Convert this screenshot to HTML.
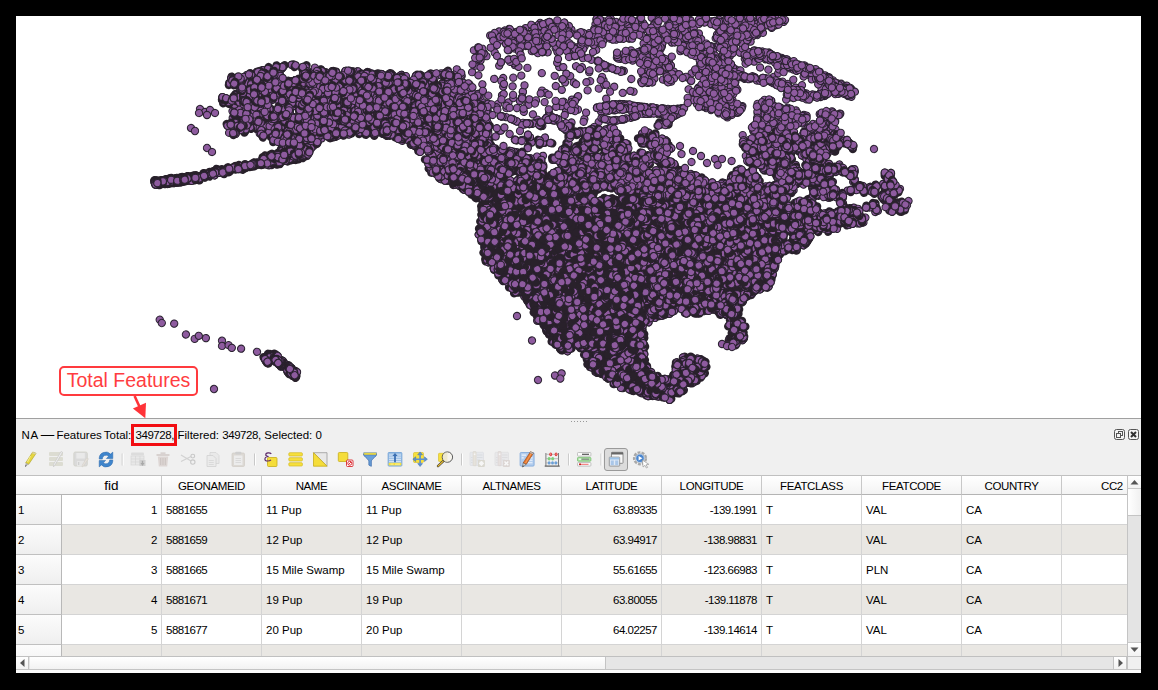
<!DOCTYPE html>
<html><head><meta charset="utf-8">
<style>
*{box-sizing:border-box;margin:0;padding:0}
html,body{width:1158px;height:690px;overflow:hidden;background:#000}
body{font-family:"Liberation Sans",sans-serif;font-size:12px;color:#000;position:relative}
#app{position:absolute;left:16px;top:16px;width:1125px;height:657px;background:#fff;overflow:hidden}
#map{position:absolute;left:0;top:0;width:1125px;height:402px;background:#fff;overflow:hidden}
#map svg{position:absolute;left:-16px;top:-16px}
#sep{position:absolute;left:0;top:402px;width:1125px;height:1px;background:#a0a0a0}
#panel{position:absolute;left:0;top:403px;width:1125px;height:254px;background:#f0f0f0}
.abs{position:absolute}
#title span{position:absolute;top:9px;white-space:nowrap;font-size:11.5px;line-height:14px}
.hdr{position:absolute;top:57px;height:20px;background:linear-gradient(#ffffff,#f3f3f3);border-right:1px solid #c8c8c8;border-bottom:1px solid #b4b4b4;border-top:1px solid #c0c0c0;text-align:center;line-height:20px;font-size:11.5px;letter-spacing:-0.37px;white-space:nowrap;overflow:hidden}
.row{position:absolute;left:0;width:1111px;height:30px;border-bottom:1px solid #d4d4d4}
.row.alt{background:#e9e7e3}
.row.wh{background:#fff}
.c{position:absolute;top:0;height:30px;line-height:31px;border-right:1px solid #d4d4d4;white-space:nowrap;overflow:hidden;font-size:11.5px;padding:0 4px}
.n{letter-spacing:-0.5px}
#title i{font-style:normal;letter-spacing:-0.45px}
.r{text-align:right}
.rh{position:absolute;left:0;top:0;width:46px;height:30px;background:linear-gradient(#fcfcfc,#efefef);border-right:1px solid #b8b8b8;border-bottom:1px solid #c0c0c0;line-height:31px;padding-left:2px;font-size:11.5px;overflow:hidden}
</style></head><body>
<div id="app">
<div id="map">
<svg width="1158" height="420" viewBox="0 0 1158 420">
<defs><marker id="m0" markerUnits="userSpaceOnUse" markerWidth="12" markerHeight="12" refX="0" refY="0" viewBox="-6 -6 12 12" orient="auto" overflow="visible"><circle r="3.6" fill="#8e5b9f" stroke="#2a2230" stroke-width="1.1"/></marker><marker id="m1" markerUnits="userSpaceOnUse" markerWidth="14" markerHeight="12" refX="0" refY="0" viewBox="-8 -6 14 12" orient="auto" overflow="visible"><path d="M-2 0H0" stroke="#29212b" stroke-width="8.3" stroke-linecap="round" fill="none"/><circle r="3.6" fill="#8e5b9f" stroke="#2a2230" stroke-width="1.1"/></marker><marker id="m2" markerUnits="userSpaceOnUse" markerWidth="16" markerHeight="12" refX="0" refY="0" viewBox="-10 -6 16 12" orient="auto" overflow="visible"><path d="M-4 0H0" stroke="#29212b" stroke-width="8.3" stroke-linecap="round" fill="none"/><circle r="3.6" fill="#8e5b9f" stroke="#2a2230" stroke-width="1.1"/></marker><marker id="m3" markerUnits="userSpaceOnUse" markerWidth="18" markerHeight="12" refX="0" refY="0" viewBox="-12 -6 18 12" orient="auto" overflow="visible"><path d="M-6 0H0" stroke="#29212b" stroke-width="8.3" stroke-linecap="round" fill="none"/><circle r="3.6" fill="#8e5b9f" stroke="#2a2230" stroke-width="1.1"/></marker></defs>
<polyline fill="none" stroke="none" marker-start="url(#m0)" marker-mid="url(#m0)" marker-end="url(#m0)" points="403.8,132.2 266.7,158.7 752,57.8 333.3,87.7 687.8,24.9 699.3,54.1 408.6,98.4 549.5,21.8 504.9,40.9 708.6,185.3 649,63.1 842.5,215.1 450.5,159.6 719.6,34.6 762.9,32.8 727.9,98.4 710.9,52.6 756.9,80.5 482.4,111.3 462.6,96.4 623,107.6 469.2,91.3 583.1,36 657.9,19.5 742.9,77.5 604.6,163.6 588.9,130.7 702.2,84.5 729.3,92.5 817,153.4 232.7,118 754.8,77.4 436.7,125.7 677.3,169.3 709.1,53.6 458.6,91.4 528.2,123.7 674.8,115.6 759.3,30.5 572.7,181.6 392.8,75.1 466.2,140.9 305.2,83.4 487.1,129.8 763.2,113.4 817.7,129.5 726.4,74 635.2,27.1 676.3,32.6 766.5,122.3 740,52.3 713,102.6 831.9,111.3 260.2,119.1 792.9,182.7 506,153.8 840.1,167.6 235.4,94.2 628.9,38.5 420.3,150.6 409.5,121.6 356.6,114.6 500.6,39.5 646,43.7 734.5,85.6 511,118.5 793.6,190.3 222.9,171 722.2,108.7 853.2,181.8 748.7,77.9 824.9,141.8 812.9,124 368.9,114.7 689.2,52.7 813.3,143.3 837.2,83.2 582.4,56.2 807.6,127.4 232.4,131.9 272.5,133.9 792.7,187.5 517,37.3 615.8,120.8 565,46.5 729.5,36.5 651.7,17.7 456.8,69.3 740.4,21 581.9,67.1 445.2,171.5 593.7,42.3 818.3,164.7 541.6,48.5 669.1,118.4 252.6,164 655.7,171.5 449,146.2 620.3,104.3 410.8,131.3 512.6,86.3 671.1,36.5 269.4,118.3 662.1,44 740.3,18 829.5,137.2 326.6,126.5 721.6,74.3 619.9,38.7 802.5,66.4 324.3,91.9 254,164.4 559.2,67 832.9,181.7 516.8,165 386,81.7 299.4,112.2 632.6,156.6 253.5,108.9 627.2,107.7 567.5,50 821.6,93.2 669.8,33.7 662.7,114.3 758.3,18.4 668.5,170.2 637.9,109.5 705,51.1 771.8,152.6 508.5,102.4 396.8,89.9 782.5,81.6 552.6,117.4 671.5,161.9 786.7,66 635.5,53.6 647,166.2 771.8,58.7 549.1,112.7 566,129.8 671.8,27.9 769.4,104.1 650.5,113.3 711.6,104.1 508.6,31.1 517.7,160.7 448.8,148.1 652.8,112.9 730.3,94.9 323.7,134 280.1,75.7 595.5,24.1 642.7,74.6 463.6,149.6 542.3,125.9 625.7,31.1 682.2,173.8 487.3,103.4 644,75.5 713.3,94 591.1,151 446.2,165.6 539.5,31 567,131.2 701.4,57 650.9,107.5 650.4,111.7 581.4,37.2 778.1,56.9 236.5,85.1 715.7,38.3 838.4,84.9 699.9,64.8 716.7,26 740.7,77.1 711.2,49.9 473.9,50.3 743.6,28.4 506,39.7 691,81 749.5,20.7 419.5,128.8 628.9,104.6 558.4,158 584.6,46.3 729.1,43.1 618.8,33.6 645.1,52.3 785.6,162.7 681.6,111.8 468.2,111.3 793.9,122.7 228.1,169.3 808.2,67.6 655.6,158.6 540.2,23 573.6,50 676.7,109.5 459.6,157.8 694.6,70.8 762.6,21.6 350.7,83.9 815.5,159.4 843.4,208.6 734.7,24.1 643.2,172.2 648.4,49.3 806.2,93.5 628.7,17.6 309.2,96.9 367.9,87.8 677.8,110.5 845.6,94.1 788.6,146.2 831.4,121.9 369.2,85.5"/>
<polyline fill="none" stroke="none" marker-start="url(#m1)" marker-mid="url(#m1)" marker-end="url(#m1)" points="720.8,295.2 625.8,193.4 282.8,92.7 570.3,172 402.3,112.2 423.5,104.7 302.1,150.3 705.2,197.2 583.4,185.8 416.1,118.8 413.2,122.8 579,168.8 628.5,165.8 277.5,70.6 794.4,236.5 410.7,136.8 821.2,172.4 743.5,327.2 328.2,116.3 240.2,109.6 264.8,109.7 424.2,104.5 601.1,186.3 229.3,83.1 454.9,129.4 554,158 886.5,189.4 694.4,268.2 775.9,150.5 450.9,176.3 478.4,158.9 371.8,94.5 176.4,180.1 178.9,179.8 789.4,164.9 238,122.5 640.3,216.6 271.5,163.1 475.6,128.5 770.9,201.5 834.7,149.6 279.5,85 884.1,200.1 280.3,152.4 329.1,100 599.1,371.5 766.2,206.3 299.5,155.7 684.8,224.8 499.8,160 287.4,149.7 358.9,106 263.5,77.3 293.1,155.1 638.2,219.3 851.5,220.3 382.3,109.8 213.2,173.2 645.8,280.9 253.7,74.9 762.3,287.6 764.7,244.2 590.6,130.1 828.5,197.7 738.2,239 786.5,208.6 261.2,162.9 342.9,108 693.8,382.1 591.4,162.3 290.3,151.8 374.6,118.6 641,265.7 374.8,111.2 419.9,76.3 741.9,264.4 647.9,239.3 783.6,180.8 787.3,229.1 765.6,209.7 169.3,181.6 809.6,208.8 465.1,123.1 239,167 892,193.2 526.4,163.7 595.8,133.4 727.8,201.2 419.6,143.9 441.7,105.9 343,82.5 279.5,85 321.8,77.4 256.7,99.4 276.1,358.8 798.4,149.6 611.6,163.2 473.6,146.6 824.9,144.9 529.7,304.6 734.9,299 579.3,166.1 376.6,110.2 239.4,105.4 326.9,125.4 453.8,173.5 436.2,131.2 596.2,184.9 514.9,139.7 359.6,95.6 420.1,132.3 777.8,178.1 773.7,213.4 485.6,158.6 664.3,162.2 317.5,126.9 483.4,142.1 756.3,149 387,109.8 310.1,76.6 693.9,192.5 665.2,140.1 588.9,134.7 735.5,334.4 834,215 619.9,191.3 451.4,129.3 665.8,163.8 292.3,143.7 268.1,360.1 457.4,172.5 720,273.1 658.2,201.7 660.9,306.2 572.5,166.4 436,151 409.7,90.1 516.5,292.2 591.1,166.5 263.1,121.9 275.8,123.2 644.6,233.9 657.4,219.2 652.3,197.8 779.7,188.2 674.3,192.7 807.4,157.8 789.2,191.8 343.5,83.3 508.8,160.6 415.7,129.8 542.5,170.9 662.6,186.5 554.6,181.3 694.6,214.4 431.9,134.3 306.5,83.9 562.7,350.1 315.9,106 574.8,165.4 573.4,176.3 635.9,252.3 291.2,157.1 650.6,245.7 814,175.3 633.1,161.4 173.8,181 649.2,158.8 224.5,172.8 835.1,168.5 806.6,201 796.8,227.3 812,217.3 888.2,193.9 241.1,97.1 762.7,189 235.6,113.8 796.6,242.1 592,148 423.3,91.7 748.7,156.9 449.9,167 166.7,182 696.5,200.6 256.7,79.5 680.1,300.2 764.5,272.7 392.1,121.8 461.4,90.4 591.9,367.6 697.7,294.7 685.1,300.3 755.3,216.8 816.5,218.1 634.8,173.3 699.3,360.5 259.4,94 768.1,165.5 477.9,139.5 661,159.1 314.9,93.1 310.3,146.9 638,240.2 177.2,180.3"/>
<polyline fill="none" stroke="none" marker-start="url(#m2)" marker-mid="url(#m2)" marker-end="url(#m2)" points="679,373.7 648.8,279.7 681.5,372.4 662.2,263.8 525.9,291 708.4,239.6 480.4,183.5 706.9,229.2 733,255.4 716.6,296.9 557.3,317.3 644.2,288.1 638,236.6 610.3,294.3 645.4,296.8 689.9,297.8 584,198.1 661.5,310.2 726.8,281.4 732.7,331.8 538.8,313.9 742.3,235.7 681.9,258.2 634.5,355.7 734.6,295.2 643.9,217.5 643.6,371.2 730.3,257.1 535.5,303.7 663,271.8 590.7,354.3 655.7,287 695.1,228.1 540.6,261.8 731.3,239.7 674.8,392.9 659,247.8 645.9,269 767.4,217.6 681.5,289.5 702.2,270.2 735.4,286.6 665.4,258.2 541.5,188.3 648.4,298.1 726.4,205.7 604.9,203.3 478.1,186.1 762.8,223.8 561,250.7 766.8,217.8 617,225.7 684,283.3 737,293.6 656.8,312.1 608.5,373.6 663.2,260.7 626.1,255.2 523.5,211.4 637,389.7 625.1,297.2 512.1,206 654.3,247.3 640.3,273.6 697.6,257 609.7,330.4 543,273.7 474.6,183.6 709,233.7 554,330.6 490.9,254.4 587.7,348.7 551.1,329.9 655.7,254.9 497.5,264.1 644.2,202.3 731.1,237 675.8,258.6 485.7,184.7 652.3,214.1 738.9,256.7 723,295.7 643.6,242.8 652.1,281.8 706.2,272.6 736.8,302.8 706.2,285.3"/>
<polyline fill="none" stroke="none" marker-start="url(#m3)" marker-mid="url(#m3)" marker-end="url(#m3)" points="595.5,204.5 661.6,386.2 600.1,256.3 543.5,286 576.3,256.3 559.3,211.3 577.8,245.5 566.2,311.3 609.6,355.1 583,280.5 530,287.2 565.4,251.8 612.6,229.6 603,292 537.6,272.7 501.7,235.2 597.6,250.1 609.6,306.9 610.1,331.9 611.2,253.2 652.2,384.5 541,289.2 619.6,325.6 554.8,268.5 537.3,261.8 598.2,238.8 552.5,258.9 515,232.8 632.2,365.6 531.9,271.1 570.6,228.4 564.3,213.3 554.3,305 591.5,247.6 611.3,338.5 595,289.3 554,231.1 547.1,290.2 577,274.4 529.9,212.7 590.6,319.7 626,266.8 504.8,257.1 621.2,347.1 614.5,334.6 568.8,236.7 503.9,198.5 616.2,294.4 588.8,259.5 499.2,242.9 630.7,317.7 552.1,259 551.5,243.7 497.4,207.3 619.1,318.4 522.1,227.1 626.1,288.2 536.3,219.3 495.2,188.7 511.1,228.3 608.9,239.7 498.7,208 608.8,300 504.1,203.8 570.1,252.1 493.8,253.2 498,215.7 668.6,384.6 565.9,337.1 518,276.3 555.6,215.6 522.6,266 561,205.5 515.3,263.3 580.8,228.8 576.3,330.1 520.5,201.5 496.8,232.7 512.2,200.6 612.9,269.4 564.8,273 611.8,254 564.7,202.2 571.8,310.6 564.1,295.9 570.1,306.3 653.1,383.5 497.3,243.3 649.6,387.7 589.1,275 547.9,319.4 595,360.7 549.2,260.3"/>
<polyline fill="none" stroke="none" marker-start="url(#m0)" marker-mid="url(#m0)" marker-end="url(#m0)" points="513.3,77.7 310.9,144.4 727.3,117.4 832.9,112.4 625.7,23.4 463.9,93.6 371.4,73.4 706.5,108.2 332.2,96 753.6,29 598.8,88.6 854.4,171.6 596.9,108 665.9,112.3 447.7,143 281.3,139.9 348,104.2 613.3,151.3 587.2,146 789.9,120.2 817.7,180.7 811.5,156.6 279.2,160.8 783.6,21.9 450.4,113.3 350.7,108.7 595.5,128.5 772,105.7 838.1,166.8 387.8,135.2 819.8,71.9 537.2,119.6 779.8,108.2 624.4,28.8 349.8,101.1 655,63.5 789.9,68.4 726.2,40.9 318.9,110.5 610.7,109.6 339.7,104.4 720.1,33.6 606.8,110.4 663.1,108.9 645.9,131.9 787.5,109 847.3,89 256.6,129 510.7,35.1 710.3,73.3 257.3,114.1 875.3,212 463.1,82.7 820.7,93.2 519.9,101 612.3,104.6 601.5,131.6 610.6,67.7 753.4,131.2 614.6,144.7 793.4,69.5 787.9,83.9 742.3,53.1 624.1,165.9 248.3,95.1 543,155.8 366.8,79.6 780.2,182.2 821.9,130 641.2,50.6 666.4,80.5 245.5,165.2 727.1,96.7 459.1,82.3 835.4,89.7 890.8,178.8 684.2,173.2 733.9,31.8 794.8,67.5 794.9,118.3 600.1,31.1 611,19.2 840.5,85 751.9,178.9 264.1,102.3 319,75.3 694.2,50.2 279.5,92.6 432.3,114.3 694.5,71.6 773.7,76.9 668.5,164.1 624.5,161.8 316.2,92 472.1,72.2 271.7,70.5 614.5,110.4 773.6,25.5 815.6,70.5 795.3,118.9 449.7,147.3 622,175.7 738.4,39.8 240.2,83.6 772.8,204.3 703.6,106.9 742.4,106.1 247,166.6 690.2,19.9 780.5,58.8 698.9,33.5 251.2,103 595.1,176.5 644.2,156.9 701,19.3 602.2,64.1 772.8,23.8 286.4,106.2 606.8,66.1 394.3,102.8 393.6,111.4 449.4,85.2 795.9,110.4 705.1,93.1 566,111.6 698.9,87.6 828.3,219.9 688.5,29.1 545.6,35.2 682.6,109.8 888.2,201.9 345.3,107.7 468.9,88.3 834.2,83 681.3,112.3 444.1,138.9 704.7,94.6 752,154.9 435.4,109.2 777.1,123.5 232.5,111.1 244.3,127.2 546.9,23 710.6,90.7 380.5,110.2 731.4,42.2 577.9,109.6 835,91.7 702.6,52.1 653.5,63.6 735.3,89.6 276.7,160.1 788,149.3 650,65 778.8,127.2 629.7,107.4 827.2,169.6 755.8,52.1 671.2,81.6 475.4,65.7 710.4,85.5 641.6,29.7 678.8,188 548.1,29.2 623.5,119.4 759,122.1 850.2,89.3 743.2,142.1 724.6,20.7 710.5,22.5 622.8,109.4 813.1,131.6 568.9,131.8 457.3,84.3 362,97.6 348.7,128.3 696.4,70.2 607.8,31.5 754.4,50.3 564.6,37.3 704.2,102.3 252.2,75.9 354,94 211.4,173.1 506.5,164.1 680.5,108.8 488.8,139.3 693.5,97.9 587.7,42 700.6,50.9 722.9,71.9 819.7,114.1 324.7,90.3 690.2,32.4 517,121.5 399.7,94.8 279.5,141.2 828.8,120.6 739.9,168.9 656.6,112.1 796.8,91.9 676.6,31.3 321.3,112.6 728.1,71 741.2,22.1 362.3,126.6 274.4,90.2"/>
<polyline fill="none" stroke="none" marker-start="url(#m1)" marker-mid="url(#m1)" marker-end="url(#m1)" points="521.7,183.1 859.2,220.5 606.1,180.6 737.9,172.2 712.9,309.5 503.6,180.4 282.1,67.1 791.9,174.2 739,276.8 688.5,382.8 458.3,116.6 642.1,273.9 774.6,171.8 416.9,117.6 667.4,160.6 308,83.2 392.3,127.7 682.2,192.8 745,214.3 815,188.2 750.5,192 344.9,115.6 278.8,94.4 275,113.4 694.5,377.2 822.7,161.3 808.8,165.1 664.3,214.1 643.6,158.8 447.1,180.8 733.5,342.5 709,226 324.8,131.4 555.3,184.3 534,176.7 729.6,303.4 566.5,152.2 658.5,199.5 715.8,255.7 640.2,184.7 670.3,182.4 889.3,178.2 285.1,158.7 666.4,180 635.6,174.3 818.9,230.1 413.5,99.3 232.3,102.6 826,178.2 283.3,158.7 792.2,181.9 654.1,149.5 292.3,88.8 236.1,167.8 891,173 235.7,106.4 216.7,172.3 334.6,94.7 740.7,331.6 791.6,167.5 822.3,175.7 569.3,153.7 270.5,358.2 753.1,232.8 825.6,187.4 438.1,132.6 270.8,98.3 463,167.9 676.8,183.1 454.1,152.7 653.6,208 655,377.9 610.1,135.4 285.8,367.5 661.4,285.4 728.6,252.3 741.6,339.5 799.4,226.1 827.9,213.2 767.6,137.9 787.6,144.4 264.8,112.9 278.9,130.8 774,235.3 659.6,246 315.6,76.1 663.2,218.4 825.2,194.9 578.1,162.2 720.1,255.5 296.8,155.8 642.7,185.1 301,117.5 473.1,133 378.6,90.4 772.6,267.2 541.5,173.8 270.7,161.9 377,120.2 459.8,181.4 636,257.3 426.3,141.3 850.4,210.1 740.7,191.3 493.9,266.1 383.6,115.4 444.4,96.4 242.1,130.1 704,203.1 767.1,156 741.8,227.7 585.8,135.3 815.4,189.9 833.1,139.5 749.7,263.2 179.5,180.5 456.1,130.6 593.9,163.3 520.8,164.4 623.9,188.8 629.8,191.6 476.1,164.4 309.9,119.2 241.7,91.3 777.5,243 476.9,132.9 450.4,151.9 407.1,120.5 355,123 268.1,359.1 816.1,227.1 464.1,162.7 261.2,122 568.4,143.2 898.7,209.1 711.5,268.3 610.9,177.9 645.3,392.6 791.2,138.9 440.8,118.6 748.3,289.6 701.6,362.6 684.6,299.8 648.6,163 579.1,132.7 702.7,204.4 809.5,151.2 312.2,121.3 291,104.2 745,265.9 829.5,172.9 737.8,171 180,179.8 457.4,173.6 372.5,77.4 472,121.1 182.3,178.9 772.5,208.5 330.4,119 284.3,365.6 606.6,169.5 694,181.8 627.8,185.7 678.7,297 556.2,342.6 765.9,241.1 701.2,360.7 634.7,250.2 697.1,311.4 521.1,182.5 451.1,162 373.1,86.9 448,168.6 743,240.7 660.4,193.5 769,146 669.4,311.3 724.4,183.1 686,378.6 678.2,276.5 446.8,179 263.3,90.4 400.1,112.5 291.6,368.8 749.8,246.7 284.9,82 238.7,105.7 526.3,183.4 419,141 733.1,179.9 744.6,206.6 846.3,216 657.9,260 684.2,191.2 357.9,123.6 691.5,301 333.6,72.8 639.6,251.9 627.3,201.7 259.2,104.3 678.2,244.6 682.4,286.4 274.7,355.7 748.3,290.6 272.4,359.1 429.1,110.6 656.3,377.3 462.5,162.6 742.4,200.9 648,230.2 408,134.5 488.5,174.9 839.3,167.6 669.7,311.2 753.4,219.1 284.1,91.3 700,293.4 458.3,173.5 492.8,166.4 620.7,160.3 625.7,170.6 512.5,287.7 585.5,353.3 376,105 386.8,106.9 327.7,106.8 471.1,145.2 632.3,203.7 241.7,101.9 262.2,129.8"/>
<polyline fill="none" stroke="none" marker-start="url(#m2)" marker-mid="url(#m2)" marker-end="url(#m2)" points="642.3,245.2 751.1,253.4 581.3,196.5 615.9,201 762.1,261.1 639.5,350.9 522.9,271.4 664.1,225.4 768.2,239.2 682.4,235.5 475.1,189.8 642.5,279.4 631.5,330.9 701.7,283.7 717.7,272.9 637.9,351.6 641.3,321.6 759.8,275.2 632.5,386.7 651.9,309.7 560.2,211.7 770.9,233.2 655.1,310.9 771.1,259.8 521.9,186.9 627.1,351.4 633.9,266.1 494.4,263.2 564.8,251.4 751.2,232.7 612.3,215.8 783.5,234.4 688.3,205.6 644.5,264.9 729.7,308.5 677.7,233.6 675.3,206.3 677.1,286.7 529.2,184.2 722.3,288.4 648.6,238.2 768.1,266 563.2,263.2 764.1,242.6 711.7,228.8 638.7,240.7 667.2,273.7 474.2,172.9 621.3,279.5 602.2,202.3 626.2,226.5 612.1,203.7 497.7,202.4 563.6,220 535.2,191 633.1,375 685.8,366.4 554.9,192 580.6,197.4 637.8,327.5 651.8,287.6 635.4,259.3 740,243.2 605.9,223.7 647.1,319.5 571.1,196.5 546.4,193.6 620.2,203.9 668.1,395.7"/>
<polyline fill="none" stroke="none" marker-start="url(#m3)" marker-mid="url(#m3)" marker-end="url(#m3)" points="584,292.6 511.5,240.9 588.6,207.5 605.8,268.3 505.1,254.7 598.5,340.2 533.7,214.8 568.9,240.5 608.3,327.4 639.6,383.3 536.4,205.4 627.8,295.2 577,249.1 634.5,333.4 603.4,292.4 623.8,362 580.5,309.1 604.2,257.1 601.3,338.7 556.9,237.2 511.2,235.3 483.4,186.7 617.5,288.1 531.5,268.1 520.7,206.7 582.8,230.6 541,284.1 626.6,301.3 486.8,192.9 589,272.7 600.9,214.3 587.7,345.1 620.1,230.7 588.7,315 611.4,341.7 587.5,258.4 528.8,271.2 607.4,279.3 619,308.6 512.7,261.7 501.8,206.1 608.3,336.4 646,382.1 604.3,284.1 559.9,268.4 584.6,290.2 599.3,358.3 595.3,256.1 548.6,312.5 549.6,215.3 587.5,275.8 585,236.9 556,252.3 525.1,267.8 515.5,269 573.6,255 598.8,364 580.2,315.9 583.3,232.4 610,371.9 607.1,264.2 658,384.1 595.1,235.1 635.2,320.5 623.9,290.1 612.1,363.5 632.4,314.1 561.1,263.1 605.3,293.2 602,246.4 630.1,303.4 632.4,357.6 559,337.1 541.2,293.9 523.4,206 496.2,214.8 494.9,236 612.3,291 521.9,276.1 635.9,362.1 551.6,283.6 497.8,247.2 617.5,240.1 574,221.8 632.8,367.6 624.6,323.5 564.4,207.5 568.9,281.7 575.2,225.1 545.3,229.9 586.2,212.7 556.4,279.1 543,250.4 517.6,238.6"/>
<polyline fill="none" stroke="none" marker-start="url(#m0)" marker-mid="url(#m0)" marker-end="url(#m0)" points="562.3,37 345.1,106.2 727.9,67.6 830.7,83.2 640.3,52 482.6,102 450.5,78.5 815,188.5 770.1,81.3 484.1,115.6 534.2,35.3 515.3,140.1 396.9,134.8 754.2,162.3 404.6,137.2 655,43.2 537,156.6 649,47.5 469.5,125.9 769.2,195.1 467.2,102.2 644.7,113.4 347.5,114.1 618.4,32.8 367.7,108.2 818.8,76.7 658.4,44.4 376.4,74 732.5,92.7 715.3,91.7 771.9,125.4 684.3,48.8 840.3,113.6 636.1,56.5 535.1,48.5 752.6,36.3 834.9,134.1 739.8,52.6 804.1,71 718.8,19.5 655.6,56.8 771.7,19.3 445.2,128.2 434.9,132.3 288.3,118 781.9,187.9 670.2,190.9 678.8,110.8 615.4,23.1 250.5,118.6 841.1,83.7 839.4,114.9 343.4,105.2 821.5,92.7 350.2,104.2 796.6,172.7 673.9,71.7 448.6,77.6 522.5,31.1 469.8,105.8 725.1,47.9 826.9,173.8 774.4,81.9 249.6,78.1 706.3,75 561.7,48.9 609.8,38.5 456.1,105.9 676.8,110.7 501.6,116.3 699.1,99.2 842.7,140.1 883.4,196.6 235.1,168.9 706.2,186.2 664.6,29.5 758.3,20.8 546.7,117.5 537.9,25.2 456,105.4 766.4,128.9 439.3,150.8 677.2,24 388.9,115.7 751.1,58 765.9,24.4 647.5,159.4 682.2,108.4 570.2,76.1 776.3,25.1 300.1,124.7 624.7,119.1 778.2,73.3 561.4,125.8 833.3,123.1 671,117.8 585.4,131.5 294.2,156.2 888.3,196.9 550.4,115.7 814.3,172.6 622.2,56.3 602.7,21 690.8,174 397.6,135.7 326.2,88.2 709.1,90.6 738.3,195.7 503.2,86.6 747.1,20.9 591.5,59.8 538.5,122.7 411.4,87.9 598.7,122 714.3,46.9 386.6,126.4 565.3,44 663,79.6 557.2,62.8 433.2,104.9 737.6,111 267,127.6 379.9,117.3 583.4,151.7 678.1,111.8 637.6,170.5 448.3,159.9 479,153.7 812.9,188.4 730.3,64.8 299.9,139 778.8,195.5 626.5,104.4 814.5,96.5 774.8,128.3 779,69.4 666.8,122.9 662,108.5 287,142.5 766,134.8 563.9,161.5 472.6,93.4 235,78.6 655.2,54.9 821.3,226.1 381.9,85.8 755.9,50.9 702.4,45.1 686.9,41.7 689.6,47.4 667.7,111 841,137.9 557.7,173.1 781.7,151.2 502.7,156.7 367.1,112.6 789.9,61.7 817.8,211.3 696.8,96.3 667.3,116.2 536.2,42.9 422.8,79.4 812.8,75.5 716.6,108.4 571.4,29.5 608.8,182.9 717,34.6 814.6,143.8 637.6,55.6 310.6,74.4 561.2,106.2 686.9,35.5 571.9,99.6 434.3,127 773.3,107.7 461.5,144 731.4,88.3 776.8,148.1 502,95.3 780.5,59.4 275.4,110.9 614.1,69.2 612.9,110.2 391.8,105.4 630,25.5 781.9,65.9 661,36.1 718.2,99.9 259.4,72.5 823.2,123.2 546.7,117.6 745.1,38.4 801.4,67.9 813.1,70.1 766.2,23.7"/>
<polyline fill="none" stroke="none" marker-start="url(#m1)" marker-mid="url(#m1)" marker-end="url(#m1)" points="501.9,166.2 399.8,123.1 410.1,123.4 683.3,251.2 175.2,180.1 649.8,155.8 308.3,136.8 732.5,280.9 343.6,90.8 163.1,182.5 602.7,172.4 432.4,96.5 628.1,211.7 616.3,178.4 277.9,159.5 427.8,93.1 641.9,352.8 800.7,237.9 642.5,269.3 636.7,197.8 792.5,176.2 472.2,173.8 463.1,128.3 666.6,248.6 808.2,201.9 537,180.8 643.8,238.2 744.7,144.2 856.7,211.9 783.5,228.1 726.4,285 489.2,144 386.7,101.2 650,262.9 438.3,133 586.8,154.9 434.9,101.5 808.3,143.4 307.3,119.6 608.6,173.4 717.4,295.9 419.5,144 791.7,191.2 478.2,129 355.3,87.7 429.1,81.6 471,140 644.5,199.3 461,133.6 833.8,219.8 799.2,230.7 801.1,244.9 295.2,374.4 486.9,170.1 158.4,183.4 758.4,251.4 450.7,119.4 709.2,223.6 584,141.4 735.1,194.7 354.3,95.1 626.4,196.5 612.2,186.5 845.6,216.8 414.7,97.8 195.7,178 445.3,85.5 369.3,130.5 710.2,194.1 690.9,236.3 291.7,64.8 177.5,180.8 367,111.9 661.4,223.8 373.5,93.7 652.9,212.2 267.2,93.5 644.3,354.2 839.5,221.5 646.8,203 759.2,156.5 472.1,140.2 792.1,245.4 342.1,104.4 700.3,237.4 647.5,226.2 181.5,180.3 509.2,168.1 694.4,254.5 484.3,223.4 272.1,357.4 417.8,75.2 735.9,281.1 794.5,233.2 803.6,245.3 418.1,117.5 282.3,361.2 623.1,148.7 335.7,136.5 788.4,189.8 460.5,184.5 844.4,143.2 655.9,235.8 524.2,172.3 505.8,162.8 751.1,176.4 686.5,290.6 628.6,204.3 463.3,152.6 674.1,176.8 290,115 890.1,182.6 799.3,223.8 642.6,360.2 691.9,284.5 479.6,147.2 770.4,279.1 327.4,114.8 779.5,240.9 639.8,390.5 766.7,228.3 836.1,193.6 438.2,88.4 783.5,180.2 756.8,250.8 295.8,140 691.8,223.1 161.1,182.1 686.5,378.8 655.1,171.6 408.1,140.1 656.4,221.2 693.8,205.7 580.9,172.8 592.6,184 398.2,96.4 568.9,138.3 482,208.1 755.3,156.1 285.3,364.5 566.9,149.4 290.3,158.5 443.1,105.6 573.6,159.6 286.6,132.9 315.2,139.7 390.5,121 719.2,291.5 516.8,152.4 696.1,175.5 810,211.7 419.2,129.8 650.3,395.8 306.9,77.3 718.5,311.1 282.1,93.8 700,233.5 683,357.3 490.5,169.9 454.8,82.2 780.7,204.3 694,300.4 649,266.9 185.4,179.3 357.9,71.3 305.1,72.5 157.5,182.4 279.4,119.2 485.3,128.4 808.7,238.7 226.9,170 610,179.3 630.3,200.1 472.8,153.4 699.3,199.5 605.1,183.7 672.4,166 411.5,144.3 251.1,122.2 301.4,155.3 670.2,227.7 427.4,147.4 299.5,118.7 554.2,120.5 802.7,208.1 487.1,148.2 721.1,216.4 270.5,88.8 269.3,161.9 695.6,196.1 507.9,164 787.5,217.5 334.4,134.5 699,302 727.8,290.8 369.3,131.4 367.3,87.2 453.5,155.4 299,142 330.1,74.3 515.6,169 433.1,84 587.5,181.1 179.8,179.9 254.7,116.2 727.1,258.4 297.8,127.8 586.7,165.9 641.8,159.8 273.5,94.7 259.3,81.5 642.1,332.8 338.7,112.8 268.9,165.2 734.3,251.7 640.9,188.2 702.7,306.9 483.7,169.5 745.6,200.9 746.9,296.3 658.9,200.3 694.1,190 799.7,146.5 355.6,79.5 250.7,96.2 559.7,183.7 665.8,159.3"/>
<polyline fill="none" stroke="none" marker-start="url(#m2)" marker-mid="url(#m2)" marker-end="url(#m2)" points="725,231.7 532.1,184.9 697.4,242.9 743.4,215.2 596.5,226.1 715.2,303.6 694.4,260.2 605.5,216.9 612.6,231.2 614.7,310.4 703.3,262.6 625.8,328.5 699.6,222 634.3,282 534.8,295.3 678.4,208.5 678.1,373.5 588.6,351.5 515.8,202.5 490.9,247 761,225.7 636,277.4 767.9,259.8 627.1,214.1 722.2,207 630.4,237 493.2,186 734,209.4 653.6,250.6 735.3,288.1 686.4,373.6 682.8,214.5 690.9,220.2 727.2,206.5 688.5,234.4 754.6,224 709.5,253.5 597.5,239.3 657.8,278.9 626.3,283.4 643.8,295 654.9,288 769.2,237.4 563.6,301.2 654.5,230.1 731,229.5 754.8,259.3 472.1,189 510,180.7 688.3,269.5 692.8,300.5 686.7,223 742.8,231 622,336 484.9,243.5 616.5,205.6 631.5,271.8 744.7,244.8 650,220.2 592.4,264.8 708.2,299.3 692.8,283.9 751.8,216.5 626.4,307 713.9,206.9 777.4,254 604.2,201.9 645.1,295.4 678.7,286.2 669.5,270 631.1,296.9 530.1,296.1 754.2,273.6 741.1,227.2 717.5,215.1 709.5,274.3 552.5,301.5 775.4,235.1 654.6,313 732.4,272.8 697.4,300.3 500.4,268.9 661.8,298.7 643.3,206.1 480.4,177.1 679.9,241.7 629.9,328.5 760.6,244.6 639.3,360.3 561.2,299.7 622.9,265.8 721.7,279.8 732.7,252.8 784.2,224.9 798.1,230.7 490.9,180.1 751.2,249.9"/>
<polyline fill="none" stroke="none" marker-start="url(#m3)" marker-mid="url(#m3)" marker-end="url(#m3)" points="497.6,222.4 553.4,202.4 622,315.3 501,260.5 520,257.5 541.5,262.2 616,287 572.8,225.5 636.2,306.5 587.1,327.3 623.2,302.8 631,366.4 592,314.5 601.4,243.2 563.2,223.9 597.6,362 534.5,228.6 554.4,222.3 610.3,355.6 517.6,234.8 533.2,269.4 544.9,245.8 615.9,349.9 582.7,340.3 559.4,297.3 583.9,211.9 632.4,353.2 606.7,324.8 571.6,286.2 611.7,330.2 621.2,266.1 510.7,276.7 497.5,200.3 627.4,277.1 594.7,290 581.3,326.5 489.1,197 584.9,259.9 592.2,342.6 593,340.5 592.1,231.3 508.8,226.4 531.5,226.8 599.4,322.2 632.5,303.1 544.6,300.2 549.2,230.7 623.7,350.9 620,371.5 571.7,249.6 579.4,333.9 591.5,290.4 546.1,320 568.2,218.1 605.8,358.4 559.8,235.8 493.3,247.4 594.5,250.2 579.2,334.9 596.2,234.8 572.8,322.3 515.6,277.1 512.5,235.6 614.9,348.7 570.6,274.8 593.7,296.9 611.4,240.9 599.3,306.1 601.1,310.5 554.6,220 513.8,245.3 552.6,214.6 605.8,309.7 523.8,225.3 597.1,263.4 578,243.5 559.9,221.3 621.5,277.9 599,293.2 559.5,198.6 542.4,254.5"/>
<polyline fill="none" stroke="none" marker-start="url(#m0)" marker-mid="url(#m0)" marker-end="url(#m0)" points="652,30.9 735.4,81.9 694.5,98.9 645.1,143.4 812.1,181.5 419.9,137.6 790.2,152.3 373.6,130.1 487.8,122.9 751.9,193.8 784,87.8 582.3,43.8 798.5,144.4 668.7,30.7 561.2,170.9 622.1,108 522.8,92.2 545.3,27.3 815.3,142.1 367.8,121.7 611,163.3 303.8,142.7 522.9,35.9 484.6,120 480.6,67.4 714.3,83.5 618.8,34.4 308,143.8 771.8,55.2 662.1,177.1 487.6,110.7 476,155.4 825,75.3 421.9,99.3 571.5,122.5 832.7,130.1 449.1,113.8 729.2,24.7 826.1,213.2 627,36.5 669.8,110 842.6,204 757,24 778.6,107.5 819.8,136.4 681.4,108.6 628.2,37.4 804.4,67.2 589,42.2 653.2,30.3 364.9,132.3 586.2,170.8 792.7,66.1 501.1,116.2 423.1,105.5 731.7,115 356.6,110.1 653.1,64 785.5,119.5 463.5,152.1 744.8,58.8 441.2,98.2 331,112.9 310.8,108.5 354,100.2 674.7,168.4 512.3,119.1 653.4,107.9 566.9,31.7 281.6,161.3 835.7,92.2 448.3,111.2 735.5,69.3 342.1,79.8 402.3,140.8 851.8,208.2 647.4,60.8 700.4,49.6 775.6,185.7 839.7,113.9 707.8,51.5 668.4,116.7 472.4,100.2 725.9,90.2 762.7,130.2 409.1,108 675.6,178.2 701.2,39 393,81.8 604.8,36.6 773.6,82.9 782.8,62.7 727.6,93.4 806.4,99.3 792.4,91.6 687.4,40 792.7,181.6 650.2,113.2 722.2,35.4 669.5,164.4 640.2,109.2 644.6,28.8 360.8,79.7 607.3,152.2 773.7,170.1 630.2,55 545.2,119.4 388.1,86.2 578.3,33.3 250.9,123 727,194.7 612.4,109.6 366.1,107.7 690.4,26.5 593.9,177.9 411.4,105.9 795.7,164.9 707.8,46.9 449.9,133.8 787.4,178.7 497.1,32.8 634.7,178.8 496.4,157.9 700.3,191.1 555.6,48.3 549.4,24.2 661.9,46.5 854,207.6 544.6,102.1 577.1,97.6 678.4,74.1 789.9,171.4 847.3,143.9 620,35.3 566,37.7 779.4,162.4 586.1,131.4 312.6,106.2 241.7,102.1 666.1,114.1 491.8,158.2 564.1,35.6 306.4,131.9 732.5,112.3 851.5,89.1 437.6,92.3 843,168.5 648.1,175 654.2,33.3 250.1,88 417.1,143.2 729.8,99.6 828.4,126.7 292.9,98 331.9,73.2 290.1,131.5 486.5,164.9 749.4,139.9 598.7,41 708.9,94.2 408.7,134.2 447.1,105.6 284.7,160.8 337.3,120.4 643,173 404.9,136.5 742.2,43.5 279.3,86.1 663.1,108.7 824.4,163.9 324,117.3 290.3,98 752.3,76.2 560,171.7 255.6,110.6 490.3,166 728.9,40.9 799.5,66.3 636.6,106.1 314.8,136.6 298.4,156.4 786.9,59.3 594.2,126.9 438.1,158.5"/>
<polyline fill="none" stroke="none" marker-start="url(#m1)" marker-mid="url(#m1)" marker-end="url(#m1)" points="331.3,106 281.6,151 820.4,165 290.9,117.9 772.8,274.3 316.6,109.9 718.1,223.1 643.4,205.1 704.8,274.4 663.2,182.7 289.8,151.1 227.7,169.5 797,248.7 335.2,127.9 589.1,363.3 543,142.9 524.4,296.6 292.5,146.2 631.2,201.2 660.2,161.2 710.8,259.4 448.2,176.7 785.4,213.9 493.7,268.1 823.7,163.3 505.9,158.6 624.4,204.1 387.1,132.2 715.8,309.8 287.9,82.4 240.8,168.9 276.7,79.5 739.5,300.8 703.5,263 594.2,148.8 450.4,155.9 578,169.2 658.2,396.5 758.5,269.7 285.5,114.4 280.7,140.4 282,105.9 741.4,176.4 470.4,165 449.4,78.6 712.3,197.7 433,94.2 394.7,93.7 428.1,91.5 635.6,166.5 268.8,355.6 660.8,203.1 790.9,156 702.9,373 674.1,220.3 790.1,208.6 288.1,110.5 184.2,179.6 744.6,245.7 321.4,86.6 321.5,79.9 283.2,364.7 445.9,141.1 236.3,122.3 733.9,306.6 817.5,158.4 668.1,198.7 181.6,178.1 836,189.7 589.6,165.5 435.3,136.9 417.7,114.7 646.7,183.8 611.5,167.8 641.2,255.1 664.6,253 766.4,258.8 846.2,142.5 776.9,147.1 363.8,124.2 690.3,373.9 793,181.1 329,101.3 645.5,197.1 333.1,135.4 488.4,150.4 539.5,165.4 381.4,113.8 754.2,181.4 362.9,116.2 737,310.7 684.9,312.9 524.2,173.8 295,95.4 489.2,142.5 769.1,265.3 722.4,311.4 396.4,118.1 881.6,196.8 430.6,148.9 659.3,204.4 775.2,257 643,229.1 318.4,128.1 658.5,315.5 823.1,224.5 468.4,124.1 399.3,126.3 648.7,132.7 336.9,107 443,137 816,136.8 473.2,156.9 375,130.3 685.7,285.1 465,103.8 743.2,338.8 639.4,159.6 697.8,377.1 455.7,92.4 774,243.5 429.3,89.6 588,354.7 662.8,251.4 889,208.6 768.9,216.4 192.2,180.2 744.3,277.3 253.7,164.5 342.5,104.7 678.4,296.3 686.2,188.7 831.7,141.3 780.8,200.7 840.9,218.3 521.6,163.8 752.2,293.3 401.5,75.2 767.4,246.3 518.1,290.7 637.3,261 478.7,234.6 433.7,124 841.1,209.6 741.7,187.2 605.5,153 603.4,183.9 444,178.1 693.1,226.7 422.4,125.1 403.9,137.6 311.4,130.3 701.7,376 285.3,98.2 362.9,117.9 777.8,165.3 639.2,194.8 474.2,125.5 327.6,93 743.8,338.3 289,367.1 455.3,184.6 721.9,287.9 698.3,194.1 638.2,250.5 456.2,117.6 778.8,159.4 749.8,199.4 268.2,158.9 797.8,223.3 365.2,116.5 287.9,80.8 809.4,151 734.4,285.7 235.8,167.1 760.1,285.5 238.4,112.1 362.3,89.1 704,311 336.4,127.5 430.6,169 854.3,171.8 468.8,107.3 169.5,180.7 773,144.8 662.2,197.2 419.6,118.1 358.6,109.3 570.9,172.4 732.7,324.1 596.8,184.6 781.8,219.4 585.8,189.8 577.8,171.2 640.6,230.3 815.4,213.9 760.4,159.9 668.3,256.1 294.8,85.2 363.1,74.1 674.5,376.3 256.9,91.2 262.4,104.5 628.2,200.9 341.5,113.7 594.6,181.4 480.4,231.4 496.5,175.4 832.5,214.9 265.4,359.3 298.2,141.8 603.8,162.7 743.3,240.7 442.8,177.4 256.6,163.1 383.4,88.3 760.9,214.7 591.4,183.8"/>
<polyline fill="none" stroke="none" marker-start="url(#m2)" marker-mid="url(#m2)" marker-end="url(#m2)" points="645,302 704,233.7 685.8,239.9 653.3,212.8 684.2,302 626.9,273.8 481.2,179.6 654.3,236 488.3,252.2 682.4,282.5 514.2,247.8 592.7,190.8 604.3,227 694,301.2 626.3,305.7 623.5,256.3 491.4,174.5 640.4,324.1 552.3,223.9 590.5,213.2 631.2,297.2 659.3,265.4 683,374.8 700.2,226.2 697.7,271.9 723.9,260.9 621.3,237.6 686.2,207.2 754.6,221.1 628.7,251 668.4,275.9 631.1,263.4 631.6,225.8 727.4,237.2 590.5,241 639.4,300.1 757.1,238.2 735.9,281.1 639.9,309 746.4,291.6 654,236.1 703.7,244.3 698.8,264.3 657.6,390.2 751.2,252.1 687.8,259.6 636.5,257.3 685.8,294 637.6,389.1 650.4,237.4 771.7,229.8 622.1,237.9 728,291.7 627,289.2 672.1,294.7 503.4,183 688.8,303.7 733.5,285.3 718.9,303.1 674.2,226.7 691.6,373.2 638.7,386.8 487.2,211.5 556.8,251.8 697.6,233 648.1,311.6 742.8,249.2 680.7,254 659.4,222.4 711.6,222.4 610,211.9 645.9,238.9 626.9,295.8 731.9,230.5 696.9,305.4 687.3,206.7 746.3,220.8 493.1,261.9 729.3,308.3 681.9,222.9 548.4,326.4 735.6,332.1 793.2,244.9 749.2,251.6 723.9,258.8 710.7,262.2 552.6,232.8 672.5,212.1 690.7,249.7 571,190.3 562.1,194.7 534.5,301.5 661.8,284"/>
<polyline fill="none" stroke="none" marker-start="url(#m3)" marker-mid="url(#m3)" marker-end="url(#m3)" points="558.9,319.4 502.9,243.4 561.9,257.7 606.9,233.3 561.8,243 553.8,263 541,249.2 524.3,224.7 530.6,247.9 485.1,185.8 518,268.7 595.7,224.8 532.3,257.1 593.4,247.3 593.1,310.6 623.5,319 552,232.3 548.4,273.4 608.3,318.7 533.9,264 601.6,278.2 556.8,298.7 545.8,277.3 515.4,248.2 561.1,315.5 627.1,288.9 602.5,252.7 566,224.4 592.2,283.6 604.7,367.7 542.8,309.7 565.9,252.1 637.4,298.9 513.3,240.3 531.3,234.4 642.7,309.8 583.2,311.2 557.4,306 491,211 565.4,261.5 634.7,328.7 559.2,303.7 584.3,275.4 592.1,217.1 600.3,276.3 566.9,248.6 499.8,250.2 596.9,216.9 497.4,197.6 533.7,260.1 566.3,322.3 638.4,363.1 547.8,301.7 629.8,334.7 486.5,186.2 541.1,220.2 596.6,275.1 505.4,266.8 616.6,254.5 508.7,211 494.9,231.3 575,277.3 613.2,367.4 636.5,366 547.5,253.6 519.9,208.8 523.1,280.8 556.2,206.9 601.3,311.3 626.1,295.8 597.5,311.1 603.2,315.1 570.5,221.2 539.4,278.8 611.7,364.3 526.4,221.3 586.4,294.4 543.7,271.2 577.3,209.3 631.1,271.5 560.3,317.4 570.8,226.8 614.7,212.5 611.7,275.6 525.4,239.1 523.7,214.5 552.1,310.5 538.9,224.2 603,281.3 637.5,380.4 578.5,301.1 587.2,319.4 500.2,240.8 522.9,190.5 583.7,212.9 539.3,307.9 570.7,300.2 485.4,190.5 491.4,238.5 498.3,255.3 518.4,275.5 570.5,292.8 633.6,384.4 500.5,263.9 628.7,383.5"/>
<polyline fill="none" stroke="none" marker-start="url(#m0)" marker-mid="url(#m0)" marker-end="url(#m0)" points="678.4,113.8 835.7,172 290.2,100 439.4,155.8 374,115.9 704.6,65.1 746.4,37.5 677.6,109.4 266.2,164.6 771.2,192.9 779.6,172.8 649.4,75.1 273.4,134.5 736.6,109.4 509.2,28.9 837.2,170.6 653.5,55.2 610.9,120.8 633.1,35.6 617.5,107.9 694.5,99.8 848.3,141.8 436.9,157 247.1,74.8 789.2,92.3 745.6,63.7 761.4,127.4 242.5,83 604,64.9 797.3,149.2 647.3,45 665.5,61.2 701.8,100.6 361.7,126.5 630.6,108.1 833.6,92.3 316,139.9 725.2,78.3 762.6,55.4 568.9,26 608.6,136.4 341.1,108.7 716.2,46.8 594.1,157.1 729.5,54.2 849.6,215.4 611.5,136.1 735.9,27.7 582.9,132 646.5,140.5 765.1,139.4 608.5,156.9 844,93.9 757.6,103.8 495.5,39.1 474.1,144.8 760.5,131.7 848.8,214.3 790.7,97.3 677.4,108.7 634.4,165.4 717.7,69.1 818.3,185.1 706.4,68.9 585.6,156.9 776.6,124.7 664.8,30.8 514.9,65.2 825.5,125.3 423.5,76.8 820.9,115 671.9,41.8 461.6,76.2 753.5,153.1 784,63.9 748.1,144.6 648.5,110.9 789.9,141.2 623.4,119.3 513.3,98.1 688.2,32.1 661.1,113.5 449,156.1 775.2,128.6 844.4,88.4 537.6,169.2 717.2,25.3 725,21.1 481.3,55.7 601.9,41 815.7,96.8 566,155.9 719.7,79.1 565.2,26.4 495.1,46.1 411.2,91 259.7,133.4 352.3,71.7 564.9,172.9 818,130.5 606.5,105.5 811.6,168.1 610.4,67.6 703.7,93.2 704.6,91.4 719.7,111.1 648,43.9 760.6,148.1 684.3,43.4 431,119.7 655.8,63.5 817.2,75.8 809.6,128.3 646.1,107.2 439,125.3 780.4,196.2 740.3,30.6 798.8,172.9 407.9,139.8 705.3,96.8 740.4,70.4 835.3,94.1 574.8,107.1 300,149.6 820.1,218.8 770.6,140.3 515.1,120.6 379.8,117.5 848.1,96.1 626,57 750.8,190.8 500,36.8 900.3,206.6 401.2,88.7 725.2,70 601.4,63.5 684,187.3 766.7,18.8 541.6,24.4 702.6,91.6 609.4,128 681.9,174.2 718.9,45 683.9,44.5 768.1,55.2 757.6,133.6 422.8,144.6 638.7,30.5 333.9,99.2 248.3,96.9 404.9,98.3 833.5,126.3 717,24 718.9,113.3 603.7,186.5 598.9,61.5 702.2,55.4 713.1,51.5 619.3,109.3 654.9,67.1 631,50.4 537.8,31.9 236,111.3 799.1,214.6 823.8,133.4 669.4,118.3 656.3,29.7 779.7,112.5 790.1,129.5 772.8,82.7 821.4,82.6 719.8,102.8 747.3,18.9 646.3,156.4 719.9,41.9 669,62 835.5,129.5 547,44.2 288.4,154.1 780.1,123.9 803.4,136.1 691.6,73.4 593.7,148.4 668.5,121.4 401.2,113.7 589.2,33.2 618.9,142.2 820,125 472.8,106.5 704.9,49.6 379.2,77.7 812.7,72.2 715.4,70 711.1,46.1 582.4,164.1 518.4,42.9 666.6,74.7 296.5,130 662.5,42.9 806.5,180 487.4,144.8 604.5,105.9 375.6,112.7"/>
<polyline fill="none" stroke="none" marker-start="url(#m1)" marker-mid="url(#m1)" marker-end="url(#m1)" points="283.2,126.6 662.6,271.5 284.7,157.5 842.8,170.5 331.1,73.8 416.2,136.2 763.4,218.4 313.2,124.3 854.8,179.7 425.4,80.8 443.1,133.2 533.5,172.3 693.6,185.9 671.3,201.9 805.2,143.9 687.5,179.3 530.5,158.3 803.7,173.6 383.9,96.7 293.5,372.3 702.9,248.2 762,156.8 781,210 706.3,286.6 376.2,104.5 295.3,99.1 480.7,167.6 836,218.9 658.5,202.1 567.5,351.3 777.8,195.9 290.4,368.8 752.4,189 350.6,96.9 683.8,209.4 426.5,122.7 742.6,210.6 725,257.8 282.7,129.8 371,78.7 355,83.2 280.2,142.5 515.7,155.8 763.8,201.2 610,150.9 264.4,114.1 567.8,160.6 655,317.9 240.8,97.9 693.8,359.9 676.2,267.8 474.6,169.4 769.5,222.4 754.8,161 765.1,265 332.5,137 154.6,182.6 482.7,122.3 534.3,307.7 740.7,271.5 311.6,79.2 757.9,244.5 803.9,156.3 776.3,225.6 546.7,330.8 892.9,189.1 471.8,151.3 651.1,140.4 798.2,180.8 770.5,157 530.1,178 644.3,203.2 432.6,91.4 655.2,135.3 405.3,128.4 431.6,129.2 278.2,70.5 393.9,80.4 731,212.4 756.8,140.7 587.7,160.5 312.2,136.3 360.9,116.9 447.5,94.9 531.7,142.4 839.2,217.7 320.9,110 313.5,127.9 298.2,154.8 211.4,173.8 273.8,357.2 442.3,86.1 501,273.5 651,215.7 714.9,232.6 269.1,90.2 747.1,210 516.9,157.8 560.7,163.4 480,168.6 289.8,129.3 759.5,268.8 712.7,262.5 574.1,170.1 639.3,220.2 426.7,113.9 699.7,265.4 718.1,187 384.6,134.4 370.8,127 795.6,228.2 371.6,123.7 427.5,122.1 658.8,191.8 266.6,102.1 783.5,205.7 654.6,245.8 356.8,82.6 660.7,380.6 437.9,138.7 288.5,156.9 751.7,172.3 496.7,168 626.9,386.5 620.9,188.1 625.3,386.7 274,115.4 389,110.6 634.5,198 459.8,128.5 674.8,189.4 703.7,245 309.3,80.4 301.5,120.2 885.2,191.4 803.7,227.9 268.2,124.6 564.1,183.7 334.3,110.4 587.6,157.2 575.2,152.6 298.6,150.2 314.7,70.1 785.8,157.8 619.3,184.2 181.7,179.8 280,159.3 353,122.8 243.1,120.5 325.7,72.3 399.2,92.4 680,172.4 294,371.9 632.5,181 802.1,208.4 645,141.4 751.3,230.1 454,130.6 733.4,316.3 313,102.4 324.1,113.5 792.6,149.6 348.5,78 442.3,161.7 664.8,264.6 797.8,176.8 717.8,238 627,181.4 399.4,138.3 192.3,178.5 656.7,297.9 257,162.7 774.6,208.1 356.4,119.9 671.9,282.5 333.7,131.1 290.6,144 373.6,91.5 280.4,364.2 873.2,205.3 654,183.9 203.4,175.2 627.1,194.1 188.1,178.2 775.1,216.8 772.7,169.2 768.9,150.1 647.1,368 663.6,394.4 405.6,99.5 311.8,146.6 701.7,179.4 438.4,172.3 487.6,260.8 479,136.1 483.8,225.9 243.6,108.3 775.6,207.6 651.7,288 522.6,290.7 589.4,183.7 689.9,247.5 194.4,177 478.7,196.3 736.3,313.6 745,214.1 681,194.4 702.2,222.5 315.3,77.2 744.1,296.4 620,188.4 326.5,116 608.2,152.2 652.7,176.2 336,132.1 666.2,177.2 687.7,367.1 693.1,298.8 617.2,187 233.4,127.9 458.9,112 275.8,83.1 641.7,225.9 796.5,174.8 642.2,133.5"/>
<polyline fill="none" stroke="none" marker-start="url(#m2)" marker-mid="url(#m2)" marker-end="url(#m2)" points="716.3,235.5 594.7,361.2 535.7,181.1 487.3,180.5 789,231.2 662.4,297.2 686,255.2 640.9,264.5 673.5,301.6 773.4,211.3 711.6,230 713.3,274.9 684.6,283 732,250.3 760.1,215.1 756,252.2 640.7,279.2 601.7,264.9 705.4,238.9 544.1,184 628.6,283.8 679.4,232.9 504,201.3 543.9,303.8 484.5,189.9 782.9,245.3 767.9,212.5 641.5,304.5 716.3,211.1 788.4,230 684.9,297.8 761.4,263.2 716.3,257.1 709,274.1 554.1,218.2 560.6,284 478.1,173.5 666.1,215.9 642.8,210.6 549.4,192.3 574.1,268.3 484.8,181 594.9,363.7 562.6,345.3 526.8,223.9 613.8,377.5 771.3,237.7 687.8,255.8 651.5,205.7 629,266.2 786.1,219.7 644.4,296.7 763.5,224.1 517.7,276.1 728.9,298.9 718.6,241.6 711.9,250.5 677.9,213.7 651.7,286 679.5,296 530.7,268.5 757.6,243.9 618.5,211.6 652.1,313 766.6,233.6 631.3,225.8 590.3,334.1 760.3,277.3 479.9,173.6 760,223 740.2,212.3 495.4,199.4 686.9,223.4 670.3,273.5 641,360.4 543.9,195.5 624.3,367.6 712.8,216.7 687.1,290.2 630.5,257.8 685.6,303 677.1,280 699.4,221.9 655.2,287.7 488.4,206.5 520.9,192.3 664.2,215.7 544.9,312.9 729.9,264.3"/>
<polyline fill="none" stroke="none" marker-start="url(#m3)" marker-mid="url(#m3)" marker-end="url(#m3)" points="626.7,381.6 554.3,272.7 588.4,235.4 594.2,227.7 596.5,277.6 510.3,258.6 606.6,215.5 613,359.3 533.4,268 541.7,297.2 574,247.9 575.8,303 518.9,195.5 521.7,259.1 578.4,264.3 550,231.5 505.6,187.7 561.9,263.4 508.6,215.7 531.9,259.1 554.7,242.6 530.7,266.4 499.3,202.3 499,243.6 607.6,282.4 498.5,192.9 608.1,245.4 508.9,213.8 631.4,296.2 558.6,241.4 538.9,232.4 537,267.3 638.2,362 602.6,320 527.1,220.8 509.7,262.9 640.7,310.7 525.9,270.9 565,269.1 585.8,235.8 534.9,275.5 486.5,197.5 581.6,238.1 601.3,272.8 583.2,260.3 636.6,292.5 592.4,219.8 561.6,292.2 610.7,320.2 631.7,284 563.2,292.9 497.8,257.7 532.2,281.8 598.4,208.8 608.7,265.7 606,330.4 561.9,310.1 542.9,222.9 558.5,333.3 560.6,206 556.6,283 630.8,370.8 597.1,330.5 585.7,212 569.3,249.7 554.4,317 535.9,253.4 623.6,354.4 569.8,278.6 549.1,282.6 575.7,294.8 512.6,192.6 559.5,255.1 524.8,210.5 588.8,325.9 595.5,245.2 573.7,219.4 504.1,214.4 601.4,341.3 625.2,301.8 609.2,222.7 567.7,310.8 581.1,199.8"/>
<polyline fill="none" stroke="none" marker-start="url(#m0)" marker-mid="url(#m0)" marker-end="url(#m0)" points="715.6,20.8 557.4,52 432.9,77.7 568.5,31.1 612.4,25.4 714,104.1 709.2,84 779,167.2 595.3,167.7 703.3,84.9 263,163.1 704.9,97.1 466.9,159.2 787.7,168.2 759.9,18.5 768.2,123.4 280.3,84.9 623.3,38.9 661,111.6 729.4,106 736.3,39.3 634.6,166 611.5,120.9 853.5,146.1 821.7,112.7 763.3,141.5 838.9,219 463.5,148.9 618.6,141.7 652.5,74.2 384.3,83.6 483.3,108.7 286.1,147.2 667.8,64.5 740.3,40.2 684.3,23.1 417,133.4 646.5,39.4 391.9,100.4 750,52.1 500.5,116.1 828.8,79.4 541.3,38.1 740.4,106.7 775.7,143.2 346.7,95.2 760.5,132.3 812.9,163.6 333.4,113.1 656.4,71.9 824.4,149.7 697.5,94.4 542.3,51 251.2,73.8 721.9,42.8 810,126.5 558.1,119.2 829.3,187.3 725.2,32.6 440.2,98.1 314.8,98.3 448.7,155.9 612.1,120.8 323.2,118.1 797.7,92.2 760.3,80.3 737.4,89.7 464.2,103.7 769.5,59.9 639,58.7 762.9,125.4 328,91.6 833.2,141.4 742.5,48.5 562.9,127.6 768.4,80.4 658.5,56 732.8,71.2 291.6,140.4 732.9,67.3 287,132.4 835.8,91.3 623.3,155 746.1,145.5 823.9,215.6 784.8,153.5 637,115.1 807.9,140 757.3,35 541,49 236.1,98 671.2,166.3 476.2,103 791.8,66.9 734,71.9 520,153.2 795.3,90.8 773.1,158.7 629.4,169.7 641.5,106.7 320,69.6 508.9,158.6 485.4,118.7 610.6,142.6 606,68.2 829.9,216.1 720.5,109.6 819.2,214.8 635.8,59.1 292.9,151 360.7,124.6 767.6,79.7 256.6,106.3 738.5,29.6 698,181 810.4,129.3 294.3,143.9 499.2,31.4 730.7,76.6 732.9,106.1 436.4,128.8 594.4,38.9 713.5,104.6 440.8,111.3 503.7,34.5 563.7,101.7 748.1,161.2 659.9,112.5 754.1,61.6 813.2,149 727.8,34.8 773.2,81 604.7,154 509.5,59.3 768.8,54.2 800.2,91.8 602.9,109.7 767.1,164.9 507.8,44.9 582.7,45.2 478.9,146.6 820.3,160.7 357,108 756.8,51.1 696.4,100.8 595.2,44.2 590.8,149.1 454.9,76.8 443.5,114.4 516.9,159.9 625.5,55.7 782.5,198 701.5,63.8 591.7,174.8 824.3,96 706.8,97.5 443.2,118.9 811.2,71.9 770.3,59.1 759.7,164.6 635,105.9 802.8,217.7 492.7,152.4 769.6,59.7 664.4,181.7 603,118.6 373.9,122.7 381,89.8 536.4,123 377.4,129.3 731.3,38.8 506.2,117.2 455.5,137.3 870,187.2 314.6,77.9 486.4,147 836,90.2 364.8,76.7 443.6,97.9 324.4,85.6 453.8,151.7 615.9,143 895.4,187.5 401.6,78.8 693.3,181.4 780.3,113.1 488.3,95.6 816.3,152 529.9,43.2 248.2,80 424.2,114.6"/>
<polyline fill="none" stroke="none" marker-start="url(#m1)" marker-mid="url(#m1)" marker-end="url(#m1)" points="723.5,254.2 280.7,154.2 453.3,157.4 285.9,160.6 696.2,377.8 785.4,174.5 901.3,203.6 535.6,178.9 414.4,131.8 485.8,135.1 247.2,116.3 648.1,179.1 267.1,73.8 674.7,186.2 278.7,362.3 769.1,206.8 488.5,262.3 783,249 765.1,208.7 651.5,255.1 715.5,236.5 366,91.5 464.5,98.2 626.1,178.2 756.6,184.2 753.7,185.6 530.8,176.7 293.9,159.2 244.7,114.4 824.7,173.6 563.3,157.8 675.8,217.3 294.2,376.1 237.5,167.8 619.1,168.7 815,132.7 733.4,195 480.3,143.8 741.2,212.3 349.6,108.8 669.4,214.6 769.6,147.6 756.1,178.8 196.1,176.5 207.9,175 392.4,97.8 791.9,211.4 281.4,80.4 812.9,172.4 706.2,209 739.5,241.5 687.7,227 708,221.4 315.5,134.2 493.2,162.5 757.5,183.2 775.2,150 303.2,119 761.4,210.7 815.3,133.8 418.8,129.1 277.3,69.9 896.8,204.3 256.6,126.6 312.3,110.5 875.2,205.3 349.8,129.4 320.1,123.9 168.6,181.9 573.2,173.8 683.7,193.1 402.1,125.7 293.1,106.2 638.7,231.8 824.5,175.5 350,102.5 690.2,299.1 752.8,289.9 540.4,174.5 812.5,186.4 618.3,137.9 305.4,81.8 348.5,118.2 292.2,373.7 170.3,181.3 786.5,136.7 735.4,175.5 457.5,88 249.2,165.2 337,111.4 262.9,70.1 755.8,149.6 685.8,194.3 829.1,148.9 815.2,154.7 622.4,153.7 383,119.3 736.7,184.8 735.4,211.9 554.1,181.3 374.3,132.6 268.6,358.6 434.3,167.7 160.7,182.5 383.8,131.8 707.4,296.4 413.1,83.2 659.2,295.9 266.2,359.5 746.4,206 552.3,340.2 573.8,152.8 751.3,258.8 282.7,361 405.5,79.8 443.5,118.4 282.7,112.4 754.8,163 710.8,190.5 236,95.7 383.9,129.6 404.2,104.9 547.9,180 195.4,177.9 285.5,82.6 336.8,117.7 647.7,189.3 271.6,163.3 511,287.4 715.2,198.4 638,177.8 829.9,145.1 744.5,202.9 697.6,193.2 244.4,166.7 445.2,151.9 174.8,181.1 468.2,157.1 867.1,189.8 529.4,175.1 639.6,193.5 356.8,117.7 671.3,195.2 497.1,173.8 662.2,138.6 269.8,161.2 387.6,116.8 685.3,174 610.9,129.7 752,275.7 282.6,364.3 641.3,191.8 237.2,95 404.6,111.7 469,134.4 796.1,168.6 448.2,178.3 803.7,173.8 170.4,180.2 729.5,338.7 306.8,88.6 698.1,301.9 737.7,195.5 688,310 704.5,196.8 378.4,120.7 827.3,170.3 463,117 299.8,158 655.3,249.8 303.3,126.5 814.9,168 362.6,74.5 345.3,81.1 602.3,178 434.8,126.9 813.1,159.4 263.7,162.7 625.1,192.1 682.2,179.3 645.9,161.6 740.6,193.2 398.8,129.5 684.1,195.9 661.7,162.3 772.2,168.5 802.7,216.7 223.5,101.4 587.3,153.2 714.2,235.9 671,302.5 564.6,155.5 614.9,139.5 159,183 511.4,285.2 401.4,74.9 633.4,389.8 331.1,78.1 826.2,187 751,180.9 651.4,146.3 710.3,215.7 708.7,188 673.7,375.4 209.4,174.4 157.2,182.7 204.3,175.5 743.4,224.7 290.6,91.7 391.4,97.9 268.7,160.4 426.2,139.7 540.5,168.3 445.4,126 448,120.5 327.8,128.8 698.4,255.3 522,174.4 604.4,138.2"/>
<polyline fill="none" stroke="none" marker-start="url(#m2)" marker-mid="url(#m2)" marker-end="url(#m2)" points="639.3,283.9 734.4,280.1 640.9,234.5 640.4,227.4 661.5,266.5 662.5,261.4 639.9,203.3 725.6,269.2 545.8,203.8 520.3,250.6 665.3,243.7 499.9,241.7 701.2,222.9 522,182.8 655.4,204.4 641.6,297.2 629.4,267.9 682.4,250.2 528.8,187.3 622.3,204.7 689.5,277.5 647.2,375.6 496.3,175 671.9,381.6 688.5,236.3 745.7,216.9 486.5,201.3 647.4,208.4 641.4,269.6 688.4,293 626.5,273.5 744.9,216.5 694.9,277.1 574,216.1 557.5,190.3 668.9,265.7 674,275.6 632.7,213.4 736.4,241.3 754.5,277.1 588.9,193.9 656.6,226.4 724.7,250.7 674.2,221.2 690.6,292.3 608.6,200 620.5,248.2 484.1,242.2 595.4,190.5 665.9,304.1 743.5,280.4 665.2,294.8 502.2,202.2 732.5,311 761.6,272.3 566,326.8 480.3,194.4 676.7,225.1 569.2,193.6 647.2,317.7 683.3,275.2 541.7,262.6 624.3,252.9 568.3,344.4 717.4,223.3 736.1,339.4 726.6,290.7 631.3,250.8 647.5,301.4 626.3,256.1 732.5,233.4 626.6,214.2 624.2,379.1 707.1,221.3 765.2,225.3 647.6,253.9 780.4,248.8 484.7,233.4 774.9,218.3 589.6,202.7 690.9,251.4 486.3,217.8 702.8,307 710.4,299.4 701.1,263.9 688.7,255.8 762.3,221.1 642.5,245 630.1,236.9 620.2,382.6 705.6,260.7 699.6,201.4 464.6,174.4"/>
<polyline fill="none" stroke="none" marker-start="url(#m3)" marker-mid="url(#m3)" marker-end="url(#m3)" points="505.3,233.6 564.3,234.2 585.9,216.2 540.3,232.8 569.9,235.9 584.6,216.6 510.3,247.5 607.2,213.4 614.8,254.1 515.6,243 618.5,312.5 555.3,225.2 632.6,371.5 624.7,307.2 557.9,239.8 625.9,299.4 619.4,293.1 544.1,271.6 644.6,380.7 598.7,209.9 535,271.9 564.9,251.4 565,206 594.1,322.8 616.1,342.5 536.7,223.9 633.3,368.8 492,243 651.9,385.1 565.2,225.6 570.7,315.8 566.2,226 567.8,264.1 637.3,325.6 608.3,205 636.4,378.3 545.7,233.2 582.9,308.5 631.2,338.9 613.8,287.4 569.5,226 574.7,332.3 615,352 491.3,248.5 537.3,211.2 567.2,213.8 573.6,246.1 581.4,314.3 580,268.3 563.4,270.6 493,250.2 560.2,287 565.6,344.3 581.7,212.9 623.7,279.8 499.1,222.4 576.5,259.1 555.2,302.4 530.9,236.6 617.7,248 547.1,272.6 605.3,361 569.5,277.1 517.7,208.5 603.5,362.3 564.9,306.7 533,192.7 548.3,254.2 612.6,303.4 561.1,310.8 597.3,353 602.8,338.9 632.1,375.3 638.1,315 615.7,313.5 582.3,311.8 488.8,210 542.1,213.7 597.3,314.2 486.4,240.5 480.3,182.8 472.8,184.8 498.1,217.3 553.8,232.7 563.7,256.2 567.7,247.7 602.4,366.3 600,316.7 530.1,262.1 585.7,265.4 507.1,191.3 549,214.9 624.3,245.8 595.3,296.9 560.9,209.1 598,216.1 615.6,348"/>
<polyline fill="none" stroke="none" marker-start="url(#m0)" marker-mid="url(#m0)" marker-end="url(#m0)" points="768.8,52.5 657,69.4 687.6,18.9 679.5,19.6 532.4,26 820,93.4 851,93.4 262.6,76.3 789.6,89.9 844.5,88.8 269.5,157.3 737.8,75.8 838.9,134 639.7,110.8 556.2,106.8 343.7,101.8 637.5,52.2 587.6,90.4 708.3,96.3 675.7,27.3 566.3,38.6 794.8,179.8 695.7,94.1 591.3,129.9 828.7,117.6 711.7,21.3 702.5,47.8 289.8,111 763.5,25.2 386.1,96 747.3,60.4 750.8,183.8 760.7,28.4 816.1,221.4 348.4,109 280.1,126.8 522.9,91.5 433.4,111.3 806.9,181.1 293.2,149.8 821.1,75.6 624.8,170.6 763.1,141.8 644,56.7 813.2,191.1 849.7,89.2 750.6,41.7 586.1,174.2 858,208.8 746.4,27.5 597.8,61.7 418,105.2 458.5,115.6 565.9,123.1 731.9,51.2 637.2,21.5 698.9,188.4 514.3,48.5 808.9,74.9 545,137.5 781,107.9 651.5,30.4 725.8,81.2 791.1,129.2 695,34.4 753.5,77.1 259.7,108.5 676.4,114.8 730,77.6 632.6,60.6 451.4,133.9 747.8,39.6 730.6,100.1 805.4,117.5 654.7,58.4 687.5,77.6 804.5,65.3 618.5,27.7 637.7,53.8 678.4,113.3 852.3,169.2 437.6,75.3 746.2,190.5 367,85.2 847.8,93.3 725.8,52.5 621.4,104.3 259.3,118.7 783.7,65 874.3,208.3 727.7,115.4 762,105 721.9,72.1 769.5,119.9 504.1,152.2 745.8,155.9 289.4,142.4 809.7,212.1 414.8,126.6 260.9,160.8 542.6,52 849.7,216.7 305,67 819,78.8 826.4,80.1 763.6,114.6 820.8,185.2 757.1,119.7 732.1,40.4 304.3,73.3 769.8,81 542.1,50 536.2,175 832.5,170.1 687.4,24.3 305.5,79.8 789.1,67 239.9,167.8 658.5,190.6 698.3,52.8 446.1,139.1 778.1,203.7 823.8,213.5 561.4,45 501.3,116.3 546,118.4 768.4,69.7 771.3,100.9 589.7,40 832.6,126.4 354.4,125.6 842.3,140.8 502.5,116.5 789.9,138 542.1,29.3 360.6,102.1 796.4,92.6 607.9,168.2 483.4,116.4 771.1,138.6 861.6,190 831.2,219.7 380.9,107.8 734,47 310.7,105.2 355.6,80.9 333.3,122.7 764.5,99.9 356.1,91.8 771.9,82.1 660.5,36.8 768.9,53.5 782.3,154.1 391.2,128.6 654,24.4 600.7,29.1 612.1,104.9 659.1,157.3 669.8,118.1 473.3,150.9 827.8,76.9 452,119.3 362.7,116.5 729.8,82.7 697.4,95.3 754.5,26.8 891,202.4 368.9,119.9 839.4,216.6 635.5,30 479.5,48.7 404.5,135.6 351.7,104.8 704.1,49.6 664.6,110.8 782.1,124.5 417.7,129.4 760.7,24.1 616.4,106.6 817.9,77.3 646.3,38.2 305.9,140.9 661.2,110.2 525.5,28.1 838.4,145.2 591.9,139.4 811.3,74 660.9,180.8 734,75.5 616,39.7 642.2,109.2 605.3,65.4 370,104.1 581.2,41.6 653.6,72.2 313.3,145.2 596.4,19.5 385.9,108.1 826.7,79.7 376.3,78.7 461.7,143 647.7,79.9 824.7,117.5 710.4,55.4 495.9,39.1 645.8,107.5 749,78.4 493.2,39.4 790.1,93.9 648.1,68.1 680.3,108.6 534,169 467.9,96.2 721.5,37.6 733.3,35.7 729.4,74.9"/>
<polyline fill="none" stroke="none" marker-start="url(#m1)" marker-mid="url(#m1)" marker-end="url(#m1)" points="481,228.8 792.9,248.2 590.6,187.4 482.4,147.6 401.9,95.7 362,111.8 427.2,139.3 378.2,132.2 563.5,173.6 772.2,248.1 827.2,194.2 577.3,147.1 586.9,165.3 233.1,100.1 472.6,117.7 301,156.1 761.7,143.7 427.4,84.4 194.6,177.6 490.4,151 620.9,187.3 478.6,130.3 750.1,156.2 288.9,104.1 287.9,158.2 543.7,180.5 269.2,109.6 210.8,175.1 831.2,144.8 566.6,163.5 432.1,81.4 395.6,128.2 516.6,162 639.4,185.7 525.3,180.7 486.7,171.3 270.9,120.4 391.5,112.8 739.4,235.9 440.8,143.4 639.1,162.3 652.4,244.8 277.1,358.8 601.6,182.1 671,281.6 285.6,120.1 608.7,181.6 790.1,144.3 422.7,140.2 300.8,129.9 737.4,218.4 791,212 440.1,120.7 187.8,178.4 549.9,183.6 742.8,301.1 697.6,358.6 773.6,166.3 415.9,76 428.1,116.1 731,320.4 237.4,120.4 745.9,295.2 672.8,198.4 574.3,150 750.6,162.6 784.9,169.7 586.7,146.7 527.7,148.1 680.3,210.1 595.6,161.8 590,145.7 658.4,152.6 777.4,146.1 414.6,145.4 832.8,214.7 411.8,99.2 510.3,180.3 688.5,289.4 709,260.8 694.2,183.4 462.4,128.2 798.4,224.3 337.4,108.5 835.9,142.5 295.4,103.7 654.9,282.8 312.1,104.8 778.9,188.4 650.7,222 724.5,195.8 751,208.7 322.2,105.2 317.5,142.5 662.2,151.1 235.5,107.9 280.9,69.2 652,394.8 657.5,266.4 288.3,147.6 257,71.8 536.7,165.4 295,136.1 166.5,181.7 480.6,196.5 586.6,163.2 208.5,174.8 260.9,91 272.6,358.1 635,201.6 785.1,181.5 636.2,220.5 664.5,197.4 641.7,393.1 762.2,224.9 833.9,215.3 894,205.8 825.4,153.7 749.4,202.7 283.6,153.6 695.6,302.7 578.9,167.3 271.6,111.1 263.9,86 824.1,223.7 732.5,306.9 342.1,83 269.7,162 250.2,127.1 246,114.3 600.6,174.2 231.9,80.3 307.5,150.5 701.9,207.9 679.3,210.7 416.5,119.7 549.1,334.1 238.9,84.8 223,170.7 761.2,201.2 784.4,175 708.8,296.6 388.6,110.3 608.7,143.1 685.5,207.4 698.1,309.2 644.6,255.6 249.9,75.7 779.9,182.7 345.4,117.1 639.5,171.7 527.6,301 901.4,209.9 294.9,151.8 381.4,103.7 671.5,311.4 248.7,121.5 652.6,137.2 556.6,171.5 300.1,156.8 244.3,112.2 665.5,258.2 171.6,181 894.4,204.9 558.5,154.5 442,83.9 594,185.5 459.7,130.2 289,366.7 469.8,169 608.8,140.9 685.1,258.2 869.5,189 773.3,209.2 681.9,390.4 450.7,135.2 739.2,204.7 834.1,224.8 408.4,96.2 411.9,86.7 791,216.4 825.3,154.1 193.3,178.9 805.1,180.8 774.5,150.9 662.1,174.7 305.6,66.9 700.7,369.8 763.4,234.3 662.2,301 568.9,172.9 585.7,174 430.5,80.8 824.6,222.5 757.2,237.7 702.9,255.1 772.5,262.8"/>
<polyline fill="none" stroke="none" marker-start="url(#m2)" marker-mid="url(#m2)" marker-end="url(#m2)" points="762.5,208.5 712.5,259.8 694.2,256.8 610.1,374 647,301.1 710.8,282.1 726.1,269.2 660,207.5 592.4,245.1 543.5,205.8 559.3,190.6 612.5,371.5 636.3,222.8 724.4,220.2 662,285.8 768.5,242.8 667.5,256.7 734.1,296.1 672,285.8 699.1,245.6 607.6,211.7 714,256.6 579.4,193.4 649.8,293.1 683.2,219.4 726.6,315 639.4,297.4 620.2,324.2 644.5,315.5 643,287.5 689.7,256.9 631.5,249.4 537.8,311.5 613.2,205.9 482.3,187.4 732.8,246.2 642.3,367.9 730.9,213.1 686.7,284.3 670.1,247 608.5,220.1 583.9,192.1 584.7,345.8 698.7,246.5 611.5,207.3 751.6,260.2 717,252.5 676.8,268 512.1,211.2 637,277.8 623.3,253.7 645.4,244.3 701.9,222.9 760.7,241.9 567.1,217.2 498.5,184.3 660.9,281.7 718.3,233.4 732.5,316.4 629.5,291 720.4,206.9 610.3,233.4 770.4,216.1 525.9,210.7 628,253.5 793.8,237.4 683.3,262.2 771.3,249.1 586.2,265.3 714.5,222.7 622.5,204.9 752.8,278.4 660.6,284.2 613,341.1 672,222.7 693.1,213.9 638.5,336.2 679.1,365.3 722.7,217.7 645.2,372.4 797.3,237.1 759.9,216.7 676.2,263.8 531.7,249.1 700.3,230.9 691.6,209.2 650.6,300 699.6,272 726.5,273.1 559.7,264.3 704.3,251.6 710.6,254.1 661,203"/>
<polyline fill="none" stroke="none" marker-start="url(#m3)" marker-mid="url(#m3)" marker-end="url(#m3)" points="648.6,381.2 499.2,204.3 565.2,223.5 491.5,211.8 598.2,250.5 612.9,261 544.6,252.5 555.3,220.3 613.2,302.8 510.4,247.2 638.2,320.3 640.3,371.8 581.8,206.6 568.9,304.5 575.3,235.8 563.1,232.8 601.6,328.2 577.7,302.1 571.5,281.3 608.2,304.3 624.9,277.3 627,381.6 611.6,308.3 599.3,272.9 623.4,318.5 627.8,367.3 486.4,230.4 619.9,223.1 618.4,332.1 533.9,234.1 526,246.5 496.5,262 565.7,225.1 493.1,187.8 540.6,314.3 625.8,309.2 534.8,284.2 626.7,288.9 567.6,214.8 625.7,332.3 626.3,355.4 536.8,238.7 510.5,261.9 552.1,235.6 572.5,204.7 587.2,281.6 643.9,382.4 577.5,258 567.5,230.4 608.2,285.3 614.7,291.3 552.1,240.8 620.9,247 574.4,319.3 580.5,325.5 550,263.1 592.5,226.1 487.7,208.9 606.8,278 634.6,369 585.4,216.9 496.1,236.9 533.5,207 538.3,243.4 503.5,270.1 557.3,294 539.1,294 616.1,227.5 546.5,195.5 566.4,245.5 507.4,271 616.3,264.9 495.3,246 634,366.2 591.9,206.9 571.7,304.7 550.8,222.2 550.2,197.2 520.8,198.8 577.5,311.3 616.3,354.2 534.1,197.6 652.2,389.6 565,316.5 550,273 538.7,244.4 633.9,354.5 632.7,310.2 496.9,197.4 578,278.5 550.8,253.1 637.1,360.3 589.1,313.6 519.8,274"/>
<polyline fill="none" stroke="none" marker-start="url(#m0)" marker-mid="url(#m0)" marker-end="url(#m0)" points="770.4,58 590,171.2 380.5,116.5 811.1,71.3 764.8,56.6 612.6,37.5 229.9,83.5 793.6,179 296.9,143.1 522.1,98.3 628.4,34.9 523.1,30.4 538.7,50.7 765.5,188.3 300.7,83.6 813.3,197.7 771.2,108.6 473.2,159 330.3,83.5 697.6,38.1 576,66.2 739.7,32.2 716.3,58 857.5,223.4 366.5,130.1 255.6,75 657.9,36.7 828.9,116.9 635.9,116.2 706.5,69.2 366.7,108.3 369.4,116.6 604.6,119.2 573.7,82.4 411.3,132.8 569.3,43.5 698.2,51 647.7,113.8 545.6,38.3 773.9,105.8 310.6,118 277.2,134.3 637.5,109 805.6,97.2 494.7,52.5 658.3,110.4 671,26.1 631.1,117.8 777.8,160 504.8,30.5 681.4,49 268.1,128.1 570.2,151.7 518.5,66.8 642.3,36.4 384.8,129 741.4,42.8 375.4,97 730.7,190.9 580.9,147.6 443.5,152.2 785.4,133.7 663.2,109.6 484.1,53.3 765.4,78.1 259.7,128.3 616.9,57.5 593.1,159.5 334.6,84.5 712.3,103.4 290,117.3 714,102.8 847.4,190.6 459.3,101.7 726.1,68.4 668.2,118.9 332.9,106.4 793.7,168.7 763.8,191.3 258.4,163.4 616.3,29.8 471.1,119.9 572.2,163.2 357.7,118.9 478.6,95.4 660.7,48.8 803.8,114.9 764.4,23 483.1,135.7 756.4,152.9 721.5,72.9 602.7,179.1 531.8,41.4 768.8,188.1 719.6,105.2 720.7,33 727.9,40.3 327.1,104.3 660,123.9 813.5,218.4 507,44.8 741.9,75.1 842.5,206.1 668.2,122.9 533.7,172 778.9,81.7 544.2,30 691.7,34.8 594.1,149.5 679,172 823.6,132.3 752.8,141.3 766.1,56.4 793.2,88.7 785,126.3 620.6,58.8 629.8,174.8 478.8,60.5 767.4,21.2 824.4,164.9 500.2,36.7 428.9,104.6 647.4,179.8 263.7,111.6 437,153 633.3,116.8 401.9,119.1 624.5,56.6 531.3,24.8 804.9,215.7 486.6,104.1 802.2,135.4 556.4,118.5 857,189 606.2,98.7 781.7,57.8 243.2,115.7 254.7,103 780.1,188.7 719.4,23.4 480.6,96.6 679.2,29.4 300.4,114.8 330.8,79.9 372.5,75.4 394.2,119.5 454.5,102.5 289.6,113.7 621.2,70.6 783.5,166.3 622.8,184.4 769.1,124.8 572.5,158 574.9,111.1 667.5,25.7 452.2,100.7 670.7,65.7 643.7,65.4 757.8,58.4 489.3,162.9 584.5,148.6 817.6,152.4 478.6,93.8 806.1,118.7 449.5,148 755.3,33.2 578.5,168.4 759.2,107.8 670.9,65.6 276.4,84.5 763.2,113.3 762.1,51.5 243.7,166.9 611.2,23.5 542.7,122.1 851.4,96.8 575.7,162.6 629.5,21 321.7,138.4 542,90.6 803.4,139.1 334.4,83.8 717,37.5 485.3,152.1 505.4,35.3 629.5,36.4 773.3,83.2 797.8,67.6 485.4,137.1 647.8,57.2 840.6,84.4 537.9,53.1"/>
<polyline fill="none" stroke="none" marker-start="url(#m1)" marker-mid="url(#m1)" marker-end="url(#m1)" points="761,255.1 787.7,218.9 553.6,185.3 327.6,88.2 683.3,242.6 489.4,146.8 499,172.1 642.5,242.7 591.5,168.7 447.8,83.6 625.3,196.6 671.5,176.7 788,154.4 588.2,358.8 287.6,131.7 717,269.9 287.4,370.5 640,165.2 752.6,288.9 401.4,81.4 239.3,105.8 227.5,125.8 753,213.9 598.8,184.8 562,127 287.5,158 653.1,158.9 679.4,270.9 725.8,184 624,195.7 769.9,144.5 736,296.6 600.2,156.9 648.1,396 839.5,194.8 297.4,156 649.7,220.1 753.4,245.1 776.9,161.7 803.5,217.6 393.2,113.6 293.5,159.1 168.7,180.9 834.3,134.5 478.4,123.9 420.9,119.4 675.1,258 309.2,147.4 729.2,195 280.9,127.4 743.9,293.5 292,373.9 870.4,186.9 443.5,171.4 433.5,133.8 275.5,95.3 790.9,186.7 426.6,120.2 574,344 642.3,360.7 513.9,152 713.4,277.2 645.1,281.5 690.3,369.7 289.1,367.4 634.4,198.7 426.1,85.9 464.1,173.1 669.2,147.1 600.6,172.9 445.7,130.7 678.8,203.6 625.7,153.3 892.8,192.7 319.4,115.8 412.7,145 788.6,187.7 835.8,223.6 277.6,360 334.4,114 855.9,189.8 708.8,308.4 473,103.2 734.8,196.3 629.2,389.3 719.6,191.2 543.1,165 554.4,159.8 644.1,197.6 263.3,124.6 655.2,395.6 230.3,169.5 617.7,160 768.7,229 875.1,188.1 745.3,201.7 729.4,342.8 356.9,130.2 283.9,366.9 731.6,319 742.8,299.6 777.5,206.2 269.3,108.3 689.1,176.1 774.4,144.9 598.4,166 640.9,327.8 161.5,180.9 294,83.8 651.1,212.3 532.1,180.7 485.7,252.2 506.1,172.9 728.3,207.6 798.5,171 762.5,151 776.7,213.1 486.4,161.5 289.9,372.1 704.3,365 832.9,149.3 244.7,111.4 769.1,188.1 830.1,187.4 257.1,117.3 407.3,96.2 594.7,159.7 640.4,391.3 766.3,224.2 699.6,236.9 658.6,150.5 501.1,153.5 687.2,248.7 761.9,151.1 407.6,109.4 804.5,133.7 713.6,211.6 733.6,308.8 734,264.8 633.4,184.9 759,149.6 809.1,167.9 850.8,144.5 685.5,362.5 345.1,76.4 265.7,133.6 583.4,181 807.4,152.2 742.6,280.5 459,146.7 604.2,134.7 772.9,250.5 277.8,92 406.2,100.4 830.8,140 275.8,96 302.2,110.3 371.1,115.2 457.9,106.9 681,386.4 368.6,74 214.5,175.3 571.8,162.5 820.1,149.1 708.8,205.5 642.4,338.4 360,132.2 667.9,240.2 589.6,183.2 837.1,225.5 330.2,136.3 745.1,194.5 839.1,144.1 800.1,212 603.3,187.2 805.6,231.7 550.4,142.9 222,99.7 814.6,182 781.8,204 537.3,320.6 281.1,101.9 720.6,266.6 760.5,223.3 375.6,81.8 633.3,196 748.9,290.9 597.8,167.4 674.6,252.6 360.1,121.5 698.7,185.1 622.8,178.7 228.5,169.5 700,294.9 472.8,108.6 681.1,192.9 277.7,362.5 614.8,142.8 450.2,117.2 448.4,94.8 585.3,170.9 776.1,148.5 683.4,227.4 692.9,268.3 591.7,184.9 288.2,368.2 611.7,185.3 537,168 885,173.8 773,138.9 158.7,183.3 273,88 642.5,346.5"/>
<polyline fill="none" stroke="none" marker-start="url(#m2)" marker-mid="url(#m2)" marker-end="url(#m2)" points="648.5,203.6 630.5,326.2 712.5,247.4 630.6,272.9 657.7,246.2 533.6,246.6 658.7,307.5 474.6,178 731.2,284.5 737.4,272.4 566.1,190.1 582.9,285.4 670.1,277.2 677.6,266 462.2,180.6 551.3,241.5 536.3,307.5 517.1,220 702.9,217.4 545,235.9 648.1,258.1 472.6,190.9 633.6,238.2 764.6,230 754.5,280.1 716.4,239.4 521.1,184.7 483.6,234.3 697.9,254.2 555,190.3 667,221.1 735.6,316.6 632.5,231.6 760.8,245.3 643.2,215.1 619.5,207.8 686.1,245.2 631.7,260.1 639,210.9 643.5,299.2 645.8,297.2 654.1,289.1 657.8,289.7 708.2,209.5 750.8,234.1 484.9,238 549.1,311.2 715.7,209.6 743.3,253.9 708.4,203.5 722.6,307.2 717.1,302.8 534,208.7 671,247.3 515.3,250.9 453.3,178 617.7,239.1 771.2,265 626.7,252.7 640.7,233.7 709.5,237.7 740,287.9 640.5,280.4 660.1,245 523.8,193.7 467.8,176.4 740.9,285.9 603.4,366.1 539,311 572.9,194.3 714.3,227.2 720.2,262 738.4,247.9 764.9,258.5 678.3,373.2 681.4,383.7 728,281.6 544.6,295 632.4,260.6 749.9,217.7 670.5,251.3 729.9,222.8 613.6,306.8 641.9,273.5 614.8,204.6 486.1,215.5 516.7,237.8 726.3,249.5 698.4,292.9 722.7,270.5 680.5,211.9 596.5,347.9 619.7,206.6 761.1,244.4 585.5,328.5 646.2,371.9 726.2,225.8 691.1,232.5 507.2,188.1 706.9,260.2 651.1,281.9 652.1,269.1 628.9,254.6 573.1,262.6 706.7,247.3"/>
<polyline fill="none" stroke="none" marker-start="url(#m3)" marker-mid="url(#m3)" marker-end="url(#m3)" points="628,377.7 630.9,342.4 620.5,358.6 581.9,252.6 625.8,322.2 607.3,321.8 530.6,215.8 611.9,285.5 554,293.3 536.1,279.6 623.2,342 544.7,284 577.9,215.6 602.3,345.2 558.5,337.7 560.3,258 563.3,214 517.2,270.5 597,362 579.5,325.5 564.1,339.4 588.1,297 603.6,331.7 540.2,297.2 598.3,292.8 554,302 548.8,294.2 605.6,346.4 535.6,267 592.1,220.1 565.2,216.6 495.8,212.3 607.8,279.1 538.3,238.2 622.3,286 510,254.5 595.4,324.3 512.8,221.9 549.8,256.8 495.8,206.3 598,210.5 600.2,359.5 554.9,319.5 558.7,285.1 545.5,276 533,257.9 491,207.3 535.5,295.7 613.4,307.8 617.8,345 527.9,253.5 527.1,222.4 637,337.6 609.4,365.5 632.5,335.4 660.5,387.5 574.3,265 505.9,201.4 607,290.1 541.2,240.8 565.8,299.3 577.9,207.8 562.1,301.5 632.9,378.6 633.6,308.8 601.2,358.1 580.5,274.1 547.9,281.9 546.3,249.8 492.7,219.3 555.1,254.2 537.3,217.8 544.2,303.7 544.1,214.2 559.4,281.5 624,352.7 625.7,275.4 522.9,254.1 489.7,207.2 623.3,320 589.5,207.8 666.1,388.3 511,265.8 588.6,204 517.4,214.3 564.6,232.3 580.9,318.3 558,225.6 539.3,311.8 628.7,357.7"/>
<polyline fill="none" stroke="none" marker-start="url(#m0)" marker-mid="url(#m0)" marker-end="url(#m0)" points="712.5,107.7 540.1,48.2 869.6,207.5 608.6,128.6 285.4,104.6 567.5,106.2 511.9,34.9 485.8,106.5 662.2,37.8 704.6,101.7 829.6,167.4 605.6,129.5 590.2,81.2 615.2,148.7 846.8,85.7 470.3,127.5 684.6,21.8 757.7,114 582.2,173 705.5,53.8 829,77.3 787.8,107.6 485.2,108.9 482,52.7 778,58.7 710.2,72.6 590.1,159.4 775.9,23 432.4,156 681.7,49.4 750.5,150.3 792.8,66 464.7,87.8 461.4,75 574.3,159 789.7,187.5 835.2,120.5 561,162.9 332.4,113.3 854.6,179.7 833.4,91.1 368.9,114.9 760.1,17.5 768.3,129 772.6,59 667.2,80.4 602.7,170.8 839.8,86.5 796,184.4 640.7,108.6 525.9,123.3 494,150.4 704.1,91.7 742.7,32.7 641.4,191.4 596.2,35.4 583.3,49.1 601.2,111.7 833,120.3 744.7,78.8 803.3,116.3 507.6,31.2 651.9,33.6 863.4,222.5 823.8,131.1 275,161.4 270,132.7 730.4,33.4 642.3,83.1 597.9,42.6 589.8,164.9 603,41.3 278.2,118 765.5,59.3 699.5,52.6 654.6,154.8 820.4,160.8 713.9,24.6 620.3,22.6 682.2,20.3 461.2,72.8 660.6,47.2 430.2,118 811.6,205.9 744.9,77.8 744.8,76.9 858,221.2 742.3,20.7 662.4,30.3 661.5,155 452.5,91.2 660.7,108.9 850.1,95 802.4,123.5 594.3,28.8 797.6,91.7 824.9,117.3 422.8,76.3 632.6,162.8 667.1,65.5 616.7,156.8 590.4,38.8 738.4,74.1 531.6,123.8 306.2,70.9 725.5,106.5 654.6,112.7 819.1,188.7 794.9,202.8 690.1,177.6 471.5,106.9 667.6,115.7 717.8,71.6 711.6,68.3 618.3,34.8 770.6,53.9 368.8,101.4 605.4,23.9 660.4,171.1 760.2,124.1 238.9,106.4 728.5,112.7 831.9,84.1 395.4,92.5 695.4,24.2 660.8,123.3 659,111.8 458.6,137.7 241.7,79.2 829.4,150.3 485.6,110.8 659.9,71.2 385.9,128.3 802,85.2 779.2,144.6 711.1,106.9 306.7,156.2 343.2,114.2 548.6,116.2 820.6,97 633.8,116.6 760.9,56.7 650.1,113.6 711,24 733.2,24.6 538.4,122.7 480.1,114.6 478.8,48.7 826.7,114.6 782.6,183.1 486.5,56.2 440.7,101.4 721.3,72 405.9,76.1 282.8,67.7 537,122.9 500.2,40.6 660.7,181.2 809.3,130.4 657.5,125.6 422.1,84.6 819.2,168.2 587.3,142.1 828.9,192.2 749.4,29.3 686.4,39.5 571.5,102.1 685.6,76.8 785.1,163 688.6,89.3 710.9,100.3 793.9,147.5 836,197.1 761.7,20.4 852.5,217.4 587.1,149.1 671.7,29.3 602.9,29.9 830,143.6 248.7,106.3 638.4,106.4 522.2,42.1 603.7,35.2 298.3,149.9 620.2,106.5 893.8,210.3 771.7,27.8 786.2,99.6 569.6,47.1 895.6,192 686,47.7 793.7,139.1 653.8,54.9 467.7,156.6 775.1,106.6 661.5,108.6 474.3,126.1 788.1,113.3 589.2,72.2 806.1,143.5 615.2,152.7"/>
<polyline fill="none" stroke="none" marker-start="url(#m1)" marker-mid="url(#m1)" marker-end="url(#m1)" points="587.3,357.4 643.8,143.4 709,295.5 468.6,179.9 754.6,203 257.3,112.5 382.4,74.6 691.3,282.2 642.9,343.1 767.6,202.3 375.9,84.4 640.9,331 298.7,157.3 400.7,123 605.9,159.4 289.3,369.4 731.9,337.3 768.8,201.2 235.1,79.6 312.9,132.7 638,157.2 327.3,109.4 669,265.1 663.5,160.9 780.7,189.2 287.7,159.5 635.1,156.5 379,74.3 265.7,157.3 440.8,179.1 487.1,259.9 667.4,207.9 441.9,132.3 747.6,235.4 757.5,148.3 822.9,155.3 575.3,192.5 711.5,294.8 464,174.7 292.1,153.5 699.9,288.4 308,126 770.3,162.8 285.5,118.9 277.4,87 614.8,174.9 700.3,372.1 567.7,163.3 520.1,163.5 405.5,90.9 752.6,145.6 694.2,254.8 661,272.8 782.4,162.2 643.2,347 287.5,136 698.1,202.5 395.4,85.8 593.6,182.9 424.7,85.5 658,293.1 195.8,177.1 444.4,122.3 639.5,238 513.5,286 733.1,247.1 431.6,170.8 709,194.8 442.6,114.5 843.1,207.2 399.3,133.7 671.2,204.5 759.8,289.4 642,253.4 448.7,136.8 800,181.8 573.7,182.6 742.9,261.1 395.6,124.6 257,95.4 180.6,179.4 703.5,241.5 348.1,103.7 744.8,242.6 293.4,158 311.8,129.5 425.7,147.7 808.8,212.1 757.8,180.3 371.5,114.2 485.7,170.8 517.2,291.1 578.3,147.7 319.9,133.6 300.1,108.6 574.5,185.3 353.2,98.2 765.6,206 329.1,75.3 761.1,187.6 772.2,231.2 369.8,122.1 801.4,203.9 459.5,185.9 436.3,167.5 682.7,389.3 406.3,96 606,150.1 705,180.5 776.9,153.2 382.5,131.3 309.7,90.6 354.8,96.5 624.9,166.9 402.8,112.2 391.6,93.3 572.1,174.9 309.5,98 272,96.2 451.1,161.2 436.5,86.6 773.9,243.1 295.3,80.1 830.1,195.8 288.4,367.5 325.9,98 424.8,148.9 248.9,99.2 720.5,226.8 883.3,183.8 684.2,192 663.1,206.7 722,273.6 611.7,128.4 736,273.7 870.9,188.1 361.3,79.4 756.7,277.8 763.3,169.3 606.6,180.2 730.8,245.1 615.9,174.3 536.6,167.7 804.8,241.3 457.4,149.6 418.2,94.4 446.2,140.9 885.1,198.5 817.2,212.6 283.2,66.5 292.1,153.2 772.1,225.5 307,122.7 176,180.6 801.8,204.4 668.1,233.4 526,158.6 468,149.8 154.9,182.1 520.5,154.9 681.9,172.4 417.9,147.3 724.7,211.8 749.3,213.5 173.1,181.2 479.4,163.9 654.8,212.5 270.8,158.5 355.5,111 450.7,159.6 422.7,96.4 813.4,206.3 265.9,358.2 808.4,145.8 656.7,196.9 737.9,274.8 600.4,169.4 262.5,162.5 340,118.1 660.3,153.5 662.7,216.3 282.4,155.5 283.4,158.6 775.5,196.7 692.5,201.8 327.1,103 775.1,253.5 339,79.2 436.1,104.2 445.1,175.8 569.5,173.2 326.4,99.5 797.4,182 444.5,73.4 427.9,148.6 336.8,97.8 166.5,181.7 613.3,140.4 789.2,175.7 854.4,212 741.1,240.8 707.2,206 729.2,197.6 275,358.2 795.3,171.2 480.3,129.6 643.4,142.6 800.2,148.3 271.7,358.5 181.1,179.5 787.2,161.3"/>
<polyline fill="none" stroke="none" marker-start="url(#m2)" marker-mid="url(#m2)" marker-end="url(#m2)" points="537.8,193.1 742.1,254.2 758.5,255.5 721.7,265.1 751.8,247 649.5,219.6 767.4,219 650.5,270.5 584,299.8 682.5,367.3 630,214.2 690,221.5 754.6,247.4 692.2,298.8 718,232.2 657.4,212.7 676.2,305.7 664.3,250 560.3,343.3 487.8,251 647,317.7 681.7,218.8 707.9,250.3 674.7,217.4 779.2,245.5 545.8,274.4 650.8,284.4 575.3,196.2 569.5,342.8 703.7,291 708.8,286.9 662.4,220.7 734.5,322.5 558.7,338.1 775.5,225.7 711.1,272.4 676.6,293.3 503.9,258.5 668.3,278.9 772.1,243.2 737.5,229.6 685.1,261.6 764.2,274.3 611.6,208.2 713.9,212.6 646.8,255 480.1,194 654.7,284.6 628.8,229.4 738.3,274.4 614.5,221.7 640.2,318.5 674.5,242.2 648.7,223.4 533.6,194.5 660.1,239.8 721.2,220.7 776.4,255.6 728.6,290.5 679.8,271.6 625.4,214.3 721.2,279.5 536.6,205.6 641.4,273 645.3,376.8 684.9,368.2 756.9,268.2 723,309.8 634.9,257.7 707.7,226 636.3,387.7 685.7,207.2 687,256.9 758.1,258.4 644.1,284.1 547.3,223.1 658.6,251 772.9,244.7 469.4,186.7 675,284.6 745.3,209.4 700.8,300.7 547.6,194.2 633.5,278.4 677,301.7 668.4,214.6 644.3,298.7 696.9,240.2 688.9,289.4 642.5,265.6 662.4,382.5 519.4,185.4 507.1,261.5 500.9,268.6"/>
<polyline fill="none" stroke="none" marker-start="url(#m3)" marker-mid="url(#m3)" marker-end="url(#m3)" points="534,299.6 529.2,243.6 563.1,325.9 635.2,312.6 572.6,248.5 587.6,261.8 519.2,210.6 563.1,256.1 585.2,284.6 496.8,201.7 511.1,194.3 538.5,275 623.9,338.9 557.7,322.7 572.5,303.6 611.2,320 574.6,256.3 505.7,257.2 526.6,250 585.1,219.7 526.3,252.1 621.2,261.1 528.8,288.8 630,366.6 547.2,249 585,209.7 611.2,286.3 507.6,268.4 564.1,341.8 608.6,307.5 547.3,308 623.9,345.6 632.6,310.6 567.2,334.9 625.9,365.1 564.6,318.7 538.1,251.1 588.4,279.1 558.9,301.3 592.9,255.1 578.9,316.9 504.2,216.6 539.6,244.3 557.8,257.5 628.2,318.2 606.2,220.7 536,280.4 596.5,339.7 588.7,253.9 564.4,325.2 561.5,217 493.5,236.5 593.9,269.2 570.7,324.3 514.7,278.4 614.9,302.7 564.6,303 541.6,253.1 589.5,235.4 557.4,306.7 569.7,246.1 532.2,276.3 573.4,288.6 583,220.4 534.6,276.6 585.7,287.6 582.7,326.2 614.6,317.8 516.2,281.3 582.7,342 511.4,245.3 606.8,352.8 595.4,230.4 520.4,280.3 616.3,327.4 547.4,255.8 529.9,273.8 626.1,322.5 581,305.4 583.1,305.8 491.5,186 564,242.5 502.9,230 500.1,237.9 600.6,331.5 571.9,209.2 509.1,197 533.7,283.1 644.2,386.2 601.5,269 506.4,253.2 518.9,190.6 611.2,341.7 594.5,338.6"/>
<polyline fill="none" stroke="none" marker-start="url(#m0)" marker-mid="url(#m0)" marker-end="url(#m0)" points="515.9,34 832.9,80.4 638.9,59.8 693.1,96.5 768.1,139.9 766.3,20.8 577.9,169.7 239.1,95.3 515.9,60.5 726.6,38.4 371.1,120.3 529.8,34 763.6,108.5 527.3,104.8 304.6,150.6 658.5,124.9 825.1,154.9 893.1,209.3 666.8,63.8 572.8,156.1 895.8,204.8 464.1,100.1 799.3,65 627,24 428.1,142.5 261.3,163.2 789.2,111.3 825.3,124.1 608.8,19.8 676.2,173.9 430.5,73.7 614.2,120.7 740.9,26.9 693.4,187 893.8,188.3 837.6,87.5 865.4,217.6 308.7,102.4 725.7,114 651.9,28.5 814.6,96 832,167.7 653.4,58.7 483,125.4 623.5,104.1 651.1,70 461.6,161 647.7,82.9 751.6,193.6 538.7,164.8 377.4,114.2 525.7,46 801.8,155.4 619,109.1 662.8,121.9 479.8,52.3 617.7,133.5 821.5,88.2 728,19.1 671.9,42.5 250.6,119 829.9,150.5 761.2,79.7 592.4,43.4 607.3,23.9 269.9,161.5 470.2,121.6 537.6,28.6 552.7,27.4 453.9,74.7 730.9,86.3 762,102.2 812.4,129.2 706.2,106.3 486.9,160.2 604.2,84.8 526.1,123.4 601.7,162.8 716.1,86.5 831.9,82 533.1,123.5 382.2,133.5 641.1,71.4 499.2,65.7 809.7,128.2 774.6,136.3 640.5,137.4 533.9,46 815.6,69.1 828.6,77.8 682.4,185.2 592.3,181.2 827.4,168.1 370.4,86.8 441.1,73.3 652,147.7 791.5,142 480.6,60.3 700.9,69 470.1,113.9 373.1,118.1 646.3,108.9 710.9,93.1 732.2,75.1 359,114.7 538.6,33.5 726.4,116 787.6,87.8 679.2,74.3 602.8,137.2 307.5,147.2 665.5,66.8 572.1,45.6 313.6,84.2 811.7,135.1 445.5,136.2 478.5,133.4 745.1,47 817,97 702.4,92.2 450.7,76.3 826.5,92.2 326.1,125.6 542.8,36.5 443.7,92.3 232.5,169 769.5,191.6 677.5,173.1 775.4,17.7 463.1,144.7 503.7,94 454.3,150.1 851.5,174.7 637.6,175.2 494.7,32.9 773.8,56.1 570.6,33.1 464.8,86 824.7,154.6 769.4,55.4 811.8,79.4 776.5,85.1 770.4,57.2 648.6,76.1 711.2,63.9 602.5,66.2 327,103.7 669.7,109.9 639.1,108.1 785.1,120.3 418.4,134.5 841.9,91.9 816,78.7 702.3,85.5 244.6,90.8 791.2,171.9 408.6,112.5 237.3,116.2 447.7,129.6 454,76.8 650.1,28.2 775.3,140 613.1,108.9 713.9,69.7 755.7,53.8 904.2,205.4 803.4,92.9 787.5,60.5 467.9,152.7 656.6,108.2 701.4,66.5 280.6,104.5 486.9,110.6 667.5,64 575,172.7 731.5,73.6 706.3,43.6 810.5,133.2 427.6,134.2 633.6,91.7 728.4,72.3 576.9,169.5 310,125.7 666.6,109.2 764.2,135.2 772.8,116 454.5,152.4 616.1,120 653.5,59.2 752.9,126.4 727.2,71.9 751.2,22.4 830.9,84.2 839.4,164.5 810,173.4 717.1,25.9 741.8,106.9 678.6,108.9 760.1,80.9 715.5,71.9 620.9,27.7 603.5,25 621.6,21.7 483.1,125.3 596,40 456,85.4"/>
<polyline fill="none" stroke="none" marker-start="url(#m1)" marker-mid="url(#m1)" marker-end="url(#m1)" points="546.5,328.6 396.3,135.9 723.3,262.5 822.6,157.4 726,303 367.6,88.8 618.6,190.8 687.9,363.4 460.5,105.1 817.7,228.9 755.4,193.9 244.5,130.7 474.8,120.8 751.1,195.6 789.4,216.2 510.5,171 403.6,98.6 538.4,175.7 288.3,121.2 287.2,366.2 572,163.5 223.9,172.1 665.4,143.3 434.7,130.6 283,157.4 430.5,139.1 482.1,124.5 453.8,124.4 772.6,238.4 827.7,148.3 354.1,120.6 564.9,180.9 677.7,210.4 735.7,214.6 811.4,199.9 769.6,280.5 419.7,140.8 779,144.1 452.8,105.5 713.3,302.1 288,83.1 659.3,286.1 278.1,83.8 593.8,165.8 374.5,133.8 655.6,147.9 284.8,365.8 414.1,83.6 558.8,157.4 191.2,178.3 701.9,283.2 245.7,129.3 683,198.1 718.4,277.7 675.6,265.3 276,111.5 831.8,184 647.1,235.1 828.2,229.8 156.8,182.8 585.9,131.4 320.1,120.1 471.7,122 387.6,107 694.9,266.2 610.2,377.6 539.3,125.1 463.1,131.7 668.9,313.2 281,159 240.6,121.8 477.8,125.1 769.3,157.1 816.2,208.2 406,133.2 639.9,138.9 790,223.9 789,215.1 654.1,244.2 251.6,114.7 529.3,177.3 553.5,342.3 709.2,195.1 759.5,276.9 790.7,157.5 157.9,182.7 632.8,241.3 726.2,294.2 436.3,100 349,120 337,102.3 243.2,114.6 688.5,241.5 689.3,358 279.6,364.7 359.7,86.8 818.9,228.6 727.9,185.4 327.2,97 570.3,179.3 269.2,113.5 275.9,117.4 633.8,218.1 720.2,255.9 413.7,143.9 295.6,65.3 689.5,254.6 609.6,131.8 265.1,110.5 764.7,163.8 645.5,206.5 738.3,287.8 438.9,148 358.8,106 739.1,202.2 420.1,98.6 779.9,253.5 615.9,141.2 708.2,289.1 589.1,164.9 529.8,166.2 468.9,118 777.4,202.8 336.5,134.8 166.1,181.1 818,145.7 704.5,366.5 686.5,238.6 728.2,227.1 305,89.6 518.3,169.7 409.7,116 567.7,160.4 160.7,182.3 473.9,166.5 361.4,87.6 820.1,187.3 737.5,272.5 321.2,120.6 888.7,200.3 657,182.4 827.5,137.2 589.5,181.4 536.7,169.5 300.9,94 642.6,342.4 465.8,175.4 199.9,176.2 753.4,144 765.3,150.5 409.4,119.5 660.8,306.1 409.9,129.8 235.5,82.9 615.5,383.7 715.7,192.5 586,145.4 493,172.1 405.1,116.2 487.2,158.2 847.8,171.8 323.2,97.3 731.8,260.2 663.2,277.3 666.9,123.5 540.8,169.3 667.2,283.8 645.1,187.8 732.7,262 476.2,123.8 696.7,312.4 469.1,130.7 720.7,191 702.8,368.1 245,92.8 162.3,182.6 589.8,187.7 246.9,107 607.5,177.4 682.7,282.1 736,192.8 681.9,195.2 799.6,219.3 266.9,92.4 372.6,95.9 431.1,154 506.5,154.3 364.4,91.8 582.6,132 694.3,254.3 295.5,117.3 469.8,106.2 631.8,176.5 683.7,258.6 502.1,279.4 562.7,168.6 249.4,74.9 462,185.7 283.7,365.1 255.1,83.9 722.2,260.4 739.5,175.7 719.6,242.5 400.8,78.1 639.7,242.4 797.9,211.4 358.3,116.7 500.3,169.9 669.5,313.8 812.4,149.2 316.4,120.9 232.6,100.9 646.7,178.9 291.2,143.7 342.8,135.1 740.6,252"/>
<polyline fill="none" stroke="none" marker-start="url(#m2)" marker-mid="url(#m2)" marker-end="url(#m2)" points="626.8,265.6 693.4,377.1 661.6,235.8 713.4,291.6 708.1,242.2 648.4,286.3 758.4,250.2 690.1,273.7 625.4,200.6 571.6,302.3 589.9,262.8 614.7,357.6 718.1,308.4 484.9,242.4 537.3,314 683.4,300.6 566.9,190.5 743.2,255.3 659.9,232.1 642.9,219.6 658.1,236.3 630.6,248.3 605.8,371.9 752.6,266 635.2,255.3 454.4,179.6 628.7,215.7 639.4,341.8 498.1,179 663.1,282.3 515,236.1 665.8,227.6 657.2,286.1 649.9,311 724.5,284.1 643.6,277.7 634.1,277.8 652.2,276.5 637,288.4 671.7,246.2 611.1,213.2 644.5,261 618.8,208.6 715.1,265.3 636.4,242.5 732.2,274.2 527.3,185.1 618,258.6 677.3,277.8 617.7,232.2 616.8,212.7 476.7,174.6 485.5,205.8 675.2,377.8 627.8,261.6 665.9,205.7 688.8,243.5 584.6,348.8 626.2,262.6 746.1,244.8 613.5,257.4 617,235.9 667.9,288.6 684.4,263.9 578.2,224 734,275.8 695.4,229.6 696.6,237.2 617.6,236.2 712.2,232.7 683,286 554.6,333.6 684.5,303.7 758.8,273.1 561.4,196.4 693.8,220.7 649.6,393 706.7,286.2 640.7,308.9 726,242.2 679.2,225.3 695.5,223.4 674.7,222.6 601.9,249.8"/>
<polyline fill="none" stroke="none" marker-start="url(#m3)" marker-mid="url(#m3)" marker-end="url(#m3)" points="548,275.1 517.1,188.9 582.7,263.1 609.7,370.8 580.1,219.2 543.4,246.9 511.1,207.3 634,342.4 546.3,308.3 556,257.5 541.4,254.7 593.9,257.7 625.5,272.4 550.1,244.9 667.9,389.9 606.2,283.9 628.2,350.7 554.8,263 507.5,256.8 561.3,273.9 568.3,327.1 533.4,202.4 571.7,293.4 536.6,295.9 505.1,265.1 533.3,256.9 529.4,241.3 609.9,290.3 546.8,310.3 596.2,285.3 634.7,325.3 602,220 578.9,270.8 505.8,217.6 560.3,293.3 597.4,271.7 664,387.1 505.6,211.1 545.4,260.7 557.1,252.8 562.7,238.2 564.3,299.9 562.2,302 543.7,221.1 579.9,281.7 541.9,309 594,360.5 569.6,318.5 622.8,335.7 645.4,388.7 612,311.1 518.7,222.5 610.3,296.7 596.1,299.5 570.1,308.6 625,315.1 628.6,355.9 557.2,306.1 591,328.2 629.5,288.6 565.8,321.2 586.2,312.4 554.4,308.9 586.5,273.7 498.8,214.3 574.9,272.9 562.1,272.4 607.7,234.4 506.1,233.4 595.7,248.9 573.2,276.9 510.3,188.9 599.7,346.7 517.6,223.9 606.7,355.3 630.3,361 542.9,234.9 542.1,230.3 613.2,240.2 608.7,351.1 586.3,320.6 510.6,270.8 505.9,225.8 488.7,225.7 490.2,188.6 598.3,270.9 534,255.5 560.6,289.5 581,286 525.5,211.4 604.3,227.6 526.5,210.2 532.7,281.5 613.2,278.8"/>
<polyline fill="none" stroke="none" marker-start="url(#m0)" marker-mid="url(#m0)" marker-end="url(#m0)" points="674.5,167.6 822.6,125.6 411.6,92.8 565.9,129.7 596.2,50 822.9,92.7 896,189.6 559.2,161 819.6,171.7 459.3,93.7 632.8,116 255.8,75.4 765.4,103.8 700,70.8 561.9,36.5 687.2,39.3 640.3,156.4 265,111.8 718,82.6 542.8,41.5 830.3,191.6 443.2,90.3 602.8,64.4 754.5,54.4 540.3,122.4 645,77.1 616.2,22 669.1,22.1 779.7,86.1 801.8,97.3 641.7,140.4 693,92 478.8,59.1 793.9,148.6 310.8,83.4 815.5,72.6 836.9,136.4 736,19.9 723.5,22.5 724.7,52.3 724.1,27.9 594.5,35.6 557.9,28.8 603.5,80.2 830.7,91.2 480.6,163.6 888.5,202.2 705,76.4 444.6,96.5 478.8,55.5 769,19.9 694.7,25.2 453.9,98.5 786.4,85.9 717.8,61.4 614.9,28.9 460.2,85.1 504.7,155.1 755.4,129.4 362.1,76.7 357.2,130 663.4,110 346.2,101.5 788.7,131.2 525.1,157.3 577.5,47.1 782,58.9 810.3,68.8 763.2,122.4 753.3,130 704.4,97.3 747.1,142.2 707.9,69.4 668.9,121.1 655.8,22.3 830.8,84.7 821.9,95.4 472,92.9 780.1,121.9 769.5,119 664.1,108.6 765.8,186.4 593.8,44.9 568.2,32.3 285.3,158.1 701.9,106 784.4,110.4 716.2,65.9 303.8,87 412.6,108.6 834.1,141.1 528.7,104.7 366.6,103.4 689.7,37.2 552.6,42.7 644.1,113.7 659.3,63.9 773.7,123.2 681.9,180.7 558.9,44 482.7,115.2 833.9,142.8 767.2,166.3 430.1,166.8 550.5,25.5 814.7,182.4 657.6,28.9 806.6,115.6 627.8,27.2 671.7,73.4 819.9,122.7 466.2,103.2 804.2,132.9 620.8,119.9 844.5,91.1 478.9,157 715,55.5 692.1,41 654.4,78.6 690.7,20.9 750.9,176.2 809.3,71.5 782.1,135.3 431.6,157.8 614.2,86.7 829.6,142.8 715.9,196 818.2,84.4 357.2,82.8 675,24.3 732,184.6 629.7,158.7 276.4,159.9 724.6,46.6 759.6,186 564.4,22.8 759.1,59 599.1,130.5 271.6,161.4 396.8,86.8 773.6,164.4 666.3,33.5 637,170.1 723.6,71.6 672,109.4 269.7,89.2 765,108.5 718.8,32.2 682.8,188.6 815.3,95 600.7,108.7 656,23.1 852.6,147.5 482.7,149.6 623.8,71 516.5,32.4 802.6,139.2 706.8,104.4 513.1,94.9 650.8,107.6 473.9,149.2 461.5,94.7 726.3,115.5 900,188.9 704.6,22.5 643.3,23.2 261.3,99.7 767.2,115.5 698.9,19.5 655.5,71.4 720.1,30.9 264.6,128.3 478.1,47.4 850.1,87.8 617.1,120.4 244.6,87.7 456.6,113.7 264.4,82 669.1,117.3 406.8,84.4 432.7,146.1 680.4,51.1 735.4,77.6 305.1,79.2 732.3,76.5 635.2,111.3 834.7,169.6 796,121 656.1,170.2 487.4,108.5 240.4,130.1 591,183.8 560.5,123.9 775,62.7 642.5,56.6 667.4,190.6 722.2,65.2"/>
<polyline fill="none" stroke="none" marker-start="url(#m1)" marker-mid="url(#m1)" marker-end="url(#m1)" points="299.3,97.5 616.2,137.4 418.8,95.2 616.9,164.7 565.2,184 478,155.6 626.2,207.8 746.2,183.9 249.1,88.8 895.1,194.1 743.8,219.3 457.3,143.3 633.3,178.3 231.1,78.5 298,96.5 721,231.3 797.6,206.5 718.2,197 481.2,228.1 423.6,146.1 304.9,82 781.3,195.2 884.3,195.3 641,335 272.8,355.8 790.1,190.2 669.7,184.2 188.4,178.7 356.8,95.1 322.6,115.6 447.6,146.7 798.1,148.2 279.3,161.9 651.2,372.2 729.4,324.8 786.1,157.7 434.2,135.7 781.3,188.8 729.5,302 276.5,162 676.4,217.8 596.8,371.1 660.8,155.9 178.8,179.3 293.3,81.9 287.9,367.3 642.2,251.8 686.2,179.6 204.7,175.3 825,187.3 775.3,213.1 597.7,161.4 659.3,300.8 673.6,255.6 456.5,81.3 660.6,182.8 486.4,145.3 842.9,203.4 446.9,72.4 701,299.9 666.8,244.8 747.1,294.4 294.7,151.7 813.1,149.5 850.8,172.5 788.1,205.7 422.8,98.9 278.4,108.6 748.2,258.9 455.3,149.2 530,137.2 581.2,150.2 270.3,122.1 784.9,136 271.1,356.9 292.7,101.8 661.6,216.9 471.4,115.1 748.1,239.3 903,202.8 312.6,141.9 709,302.3 814,163.1 690.5,258.7 821.5,135.7 741.6,333.5 807.5,237.6 757.8,274.7 330.1,104.2 415.5,105.6 766.2,191.5 795.8,181.5 440.3,136.4 574.6,150.8 626.7,225.1 724.3,268.5 591.3,168.2 696.3,258.5 418.9,90.1 320.4,71.4 491.6,162.5 264.3,101.2 508.9,162.3 777,259.1 449.8,176.3 810.6,181.6 386.4,130.7 346.1,76.6 629.9,160.2 493.9,268.8 271.5,98.3 287.4,89.9 263.8,163 590.5,152 573.3,175.7 727,262.5 749.3,213 305.3,154.3 464.5,139.8 312.8,130.9 703,284.7 811.1,170 390.3,125.6 692.7,187.9 808.2,230.1 763.8,162.8 691.5,276 284.8,115.5 603.1,142 397,95.7 582.3,152.8 238.4,166.8 453.6,93.6 378.4,114.1 630.6,160.6 594.8,169.4 170.3,181.2 756.3,204.9 685.9,214.1 569.5,348.3 474.3,175.4 840.2,198.1 625.5,192.5 271,355 282.5,67.1 297.7,121.2 616,181.3 833.4,168.8 453.6,159.8 222.5,97.1 814.7,191.9 288.8,110.4 531,164.7 276.3,362.4 841.5,221 349.5,84.3 783.9,140.3 813.4,179.2 713.7,207.5 800.3,225.3 561.5,156.2 193.3,177.7 737.4,196.9 350.9,84 744.4,203.5 184.3,179.2 650.3,233.7 734,324 285.7,158.7 575.9,174.4 411.4,129.9 276,99.4 439.8,169.1 597.3,369.5 779.1,252.6 691.4,291.2 782.4,195.7 393.9,106.7 790.5,139 428.4,163.8 379.1,124.1 398.7,130.8 528,134.7 393.3,105.2 429.3,106.7 502.7,172.3 737.4,326.5 235.7,95.1 837.3,213.3 800.9,208.2 671.7,210 724.1,313.9 611,162.3 723.9,187.6 726.5,188.6 715.3,195.9 291.8,120.2 507.9,156.8 584.7,141.3 824.4,169.3 168.7,181.7 739.9,215.9 741.1,209.9 689.5,256 751.2,219.6 257.9,77.2 672.7,174.7 249.9,88.6 596.2,184.3 818.5,181 530.7,172.4 847.8,223.6 816.4,194.9 673.1,175.7 155.7,182.6 660.5,226.6 751.4,215.9 594.4,133.8 278.5,159.8"/>
<polyline fill="none" stroke="none" marker-start="url(#m2)" marker-mid="url(#m2)" marker-end="url(#m2)" points="690.1,379.3 682.4,215.1 537.1,308.5 710.1,248.5 515.5,193.8 509.2,262.4 641,316.5 753.8,219.5 483.2,199.1 579.3,197.6 710.3,286.4 744.5,286.7 679.9,380.7 753.9,241.7 719.6,258 485.4,249.5 720.7,257.2 611.6,305.6 629.5,233.1 707.1,246.6 556.2,296.4 721.7,243.6 738,326.5 740.5,271.5 665.2,277.4 721.8,292.2 664.6,256.9 460,181.7 638.2,331 473.5,181.7 669.4,385.9 770.5,229.7 761.1,247 473.5,182.3 515.6,286.1 669.7,386.8 642.6,291.9 722.2,298.1 671.2,288.7 675.5,254.5 721.6,255.7 554.8,198.5 631.2,266.8 732.7,222.6 625.9,230.4 574.9,289.7 665.3,229.7 645.2,237.6 661.7,258.2 616.9,262.4 518,288.4 718.4,252.6 708.8,298.1 568.5,341.2 682.4,257.9 696,235.7 550.7,307.4 680.1,384.9 751.3,284.1 613.2,256.7 552.4,189.1 584.3,262 711.7,288.8 477.5,190.6 653.4,201.8 666.1,220.1 571.4,317.4 613.2,207.9 628.2,293 681.2,250 730.4,289.3 486.4,215.2 651,283.8 623.7,253.2 517.7,283.7 485.6,183 597.1,214.5"/>
<polyline fill="none" stroke="none" marker-start="url(#m3)" marker-mid="url(#m3)" marker-end="url(#m3)" points="599.4,253.6 534.3,210.4 547,214.2 626.4,260.3 514.4,258.6 509.3,227.5 613.6,301.1 616.5,271.6 489.2,233.6 520.9,240.3 491.8,209 552.7,264.1 621.2,314.5 498.7,193.6 578.1,311.5 545.6,226.4 635.7,352.7 618,211.2 542,220.4 563.6,293.1 527.9,228.2 610.6,308.5 593.8,293.2 499.8,200.6 510.4,239.2 541.2,228.1 564.2,230.7 511.6,232.9 579.3,237 517.3,277.8 575.9,228.9 541.1,261.4 590.6,295.3 554.4,197.1 551.4,219 610.9,251.2 548,273.8 561.8,289.5 592.7,285 630.3,375.9 563.2,263.1 519.4,237.6 566.5,213.4 501.3,195.2 597.4,231.4 586.1,252.6 582,242.8 618.8,258.5 583.5,226.2 596.9,314.7 552,219.9 507.5,204.7 541.5,200.3 593.9,348.1 522,227.5 540.2,284.8 538.4,286.8 551.8,225.6 574.6,300.2 570.9,324.2 544.1,228.9 597.8,333.6 507.6,259.6 573.7,305.9 617.3,288.1 582.7,243 506.1,204.8 535.8,239.5 574.9,310.8 565.8,287.8 591.8,340.2 597.8,224.9 627.5,374.2 521.7,261.6 486.9,202.7 607.3,321.3 591.4,307.9 528.8,234.9 531.5,290.3 596.2,233 564.3,235.7 536.3,241.2 553.1,231.6 573.2,301.4 502.6,211.2 614.8,275.4 561.6,254.4 629.6,307.5 535.6,243.8 550.3,223.5 617.4,316.1 533.2,200.6 578.6,247.9 514.6,247.5 632.5,330.1 621.9,272.2 620.7,335.9 545.1,227 505,243.2 585.1,265.8 502.7,229.6 580.8,312.8 554,304.4 576.8,257.3 580.4,212.2 573.6,322.5 610.7,298.8"/>
<polyline fill="none" stroke="none" marker-start="url(#m0)" marker-mid="url(#m0)" marker-end="url(#m0)" points="848.4,91.1 422.9,87.2 775.5,80.4 838.4,93.9 658.3,114.2 752.1,160.8 247.2,125.1 711.4,190.3 645.3,172.5 735.7,112.6 797.2,69 812.2,136 676.7,39.6 825.9,88.9 806.5,159.5 699.7,87.1 703.1,92.9 683,45.7 278,136.7 801.8,91.6 812.5,94.4 333.4,114.6 675.1,17.7 244.6,121.2 877.9,210.9 609.1,138.8 833.6,85.1 643.6,43.5 379.3,79.6 776.4,60.2 754.8,77.7 610,120.7 265.3,126.2 368.3,99 357.2,75.1 603.1,118.7 662.7,57.7 800,179.8 730.3,76.7 696.5,40 711.1,110 522.2,97.4 638.5,106.8 766.6,152.9 511.6,47.6 482.3,136 732.5,100.1 674,78.4 597.2,107.3 697,103.7 702.3,57.3 390.6,98.9 306.6,125 834,82.6 527.1,34.3 805.2,118.6 681.8,38.8 448.1,72.3 779.5,149.2 547,45.1 545.3,38.3 812.5,137 382.7,133.8 255.3,108.8 313.3,146.1 442.4,157.5 887.3,181.1 628.8,35.6 434.7,110.7 656.3,146.1 661.7,59.4 742.7,22.8 725.4,72.2 888.1,183.1 770.1,110.7 635.1,116.2 503.6,32.1 798.5,64.7 239.2,108.5 690.8,50.6 729,27.7 571,110 356.6,96.4 800.7,96.3 540.3,122.4 803.4,184.6 817.1,230.3 430.1,110.9 615.7,31.3 301.8,84.1 469.7,84.6 439.8,111.2 709.9,54.4 675.3,21.3 786.6,128.4 762.9,77.8 567.3,172.9 643.5,140.5 621.9,70.7 474.8,114.8 436,173.9 737.2,110 656.9,49.3 609.2,104.8 718.7,102 391.6,114.8 237.8,121.2 698.4,87.6 667.3,174.8 653.9,55.8 674.3,109.7 531.8,51.1 839.9,92.5 356.4,75.7 794.3,175.8 667.5,115.6 644.8,130.4 856.9,217.5 730,73.7 618.1,180.6 757.9,199.6 607.3,159.9 762.9,27.4 733.2,94.2 584,34.1 669.2,32.9 761.3,197.3 715.7,84.6 723.7,71.1 641.2,81.6 527.1,37.3 303,73.3 754.6,31 673.2,38.3 440.9,75.1 738.8,76.6 601.4,36.1 547.7,52.3 626.1,169.7 665.8,120 653.9,181.9 437.4,164.4 556,118.4 784.6,171 503.5,158.5 507.6,36.6 551.2,38 715.5,66.2 721.5,87.2 736.8,32 658,113 563.3,67.1 561.8,126.2 464.6,118.9 272.5,99.6 287.3,120.8 686.5,50.5 650.7,41.8 745.9,56.9 344.2,102.7 242,86.7 698.3,41.1 795.2,68.9 847.4,95.3 757.4,111.7 432.8,172.4 235.1,168.7 706,18.7 459.3,87.4 380.2,114.3 801.7,222.1 560.5,124 761.4,79.2 709.5,54.9 632.4,105.5 507,34.6 645.3,113.6 754.5,77.3 732.7,38.5 765.3,120.1 305,135.1 229.1,132.8 416,115.9 679.3,20.1 572.9,164.2 296.1,156.3 701.4,47.7 642.6,26.1 623.7,53.9 556.9,23.5 787.2,115.3 778.9,134.9 465.3,90.5 665.4,141.6 839,85.1 701.6,84.5 614.1,150.3 612.1,174.3 546.7,29.8 675.3,37.6 282.1,158.7"/>
<polyline fill="none" stroke="none" marker-start="url(#m1)" marker-mid="url(#m1)" marker-end="url(#m1)" points="368.4,103.1 445.8,98.7 652.8,196 372.7,96.3 441.3,157.2 400.7,78 703.5,199.2 295.2,137.8 752.6,207.2 578.6,183.1 271.7,155.7 727.5,294.1 452.5,133.2 876.5,186.3 860,223.3 800.9,209.5 691.3,308.2 732.9,222.9 537.7,175.3 712.6,234.6 478.8,139.8 801.6,174.6 401,138.5 336.9,81.7 731,178.7 463.6,187.1 654.7,395.6 683.8,305.2 450.9,81.2 458.6,157.8 588,171.8 297.9,146.9 442,104.6 283,113.8 160.8,182.5 289.3,371.4 425.7,101 641.1,337.6 612.1,147.4 487.7,139.3 355.3,124 807.6,240.6 782.9,250.7 746.2,190.9 350.8,122 660.3,314.9 643.8,264.6 291.4,368.2 884.8,172.6 442,136.7 568.6,175.3 182.6,179.7 471.5,137.8 365.3,132.6 599.1,187.3 507.9,158.5 436.8,106.9 506,172.9 395.9,126.2 792.9,240.6 738.9,188.5 340.7,77.6 766.2,190.3 647.3,393.4 734.9,287.4 671.3,148.3 750.1,231.6 770.9,220.7 713.8,228.9 686.2,285.4 541.3,174.2 483.1,164.9 760.4,250.5 651.9,374.8 813.4,181.4 378.2,91.4 425.1,101.9 622.2,194.5 296.6,127.6 485.4,252.8 757.5,143.3 638.1,157.7 253.9,96.4 589.8,174.5 280.4,75.9 539.8,140.5 671.4,210.4 312.2,142.5 548.6,331.5 810.7,151.3 592.3,157 439.8,115.5 228.1,170.5 656.8,232.4 624.7,157.7 648.5,322.3 797.9,218 772.3,165.8 745.3,196.3 234.5,104.7 528.8,158.8 650.7,294.2 685.6,202.3 809.5,206 484.9,137.1 756.4,147 750.5,286.8 416.2,95.2 794.3,206.9 342.8,79.6 792.8,232.1 273.5,127.4 760.6,261.5 807.4,239.1 717,193.6 660.7,191.6 829.6,213.4 676.9,276.2 651.4,237.9 337.9,86.3 331.3,118.5 474.5,133.1 281.3,364.3 721.2,305.1 761.6,196.1 541.3,159.8 733,177 680.3,233.2 191.1,178.3 677.6,368.1 293.6,124.6 597.4,139.7 650.5,197 723.3,220.3 539.6,176.8 414.7,86.7 445.1,180.7 613.9,380.6 386.3,121.6 876.5,210 760.9,209.9 808.2,165 680.1,250.9 620.4,150.6 267.9,68.9 672.1,292 712.3,182.4 539.8,142.8 826.1,181.3 480.7,167.2 482.8,215.9 827.1,168.6 430,136.1 774.6,268.4 466.5,162.9 721.2,313.2 490.7,149.1 681.3,172.3 461.7,165.8 377.9,101.3 474.7,166.4 523.1,291.6 662.7,198.3 292.3,102.8 258.4,92.8 323.7,120.9 575.1,133.4 276.4,162.8 332.9,123.9 775.3,249.8 731.8,193.2 638,197.9 245.8,108.5 432.3,74 600.1,164.6 441.1,112.2 335.5,73.5 684.7,209.9 851.4,211.3 272.9,94.3 436.6,123.2 823.9,191.4 299,155.2 737.7,310.2 722.4,293.2 462.8,169.7 332.7,112.5 183.4,179.6 550.7,333.4 523.3,156.6 447,88.7 288,158.3 801.7,232.4 289.3,86.8 329.4,94.4 416.9,84.6 660.2,197.5 753.5,175.7 764.4,277.2 355.3,75.7 872.2,192 626.1,171.4 333.6,109.3 395.1,81.4 270.4,161.9 396.6,97.6 705.9,222 646.5,244.1 754.1,223.8 749.6,180.4 591.3,185.9 215.5,172.6 692.8,196.1 286.7,365.4 448.6,173.8 422.5,142.6 646.5,296.4 462,168.8 317.4,97.7 677.5,294.5"/>
<polyline fill="none" stroke="none" marker-start="url(#m2)" marker-mid="url(#m2)" marker-end="url(#m2)" points="635.1,240 486.6,207.2 747,247.3 749,261 680.3,209.7 618.9,253.2 652.4,309.4 657.7,213.1 726.9,229.3 645.2,287.1 652.8,232.7 692.4,235.8 755.7,218.8 748.7,209.3 672.1,228.8 610.5,336.1 543.6,253 704.2,268.1 584.6,252.9 625.7,217.8 627.4,241.3 536.9,187.2 774.7,240.9 580.3,274.5 529.3,253.9 664.1,265.3 518.1,285.1 587.6,314.1 737.5,303.5 632.1,303.5 610.8,252.4 660.2,286.1 725.2,226.8 691.2,377 647.1,235.2 660.4,224.9 645.7,270.6 573.4,268.5 750,281.3 736.2,274.9 595.1,365.7 568.2,344.7 604.2,371.1 544.8,310.9 760.6,208.6 459.8,180.6 729,309.7 485.8,218.5 642.2,299.9 663.1,268.9 575.1,227.2 570.7,195 581,253.9 736.9,273.3 493.9,179.8 734.3,300.6 569.6,237 762.6,269.6 657.8,381 506.4,274.6 508.7,213.3 692.4,375.9 533,185.2 695.2,368.8 637.5,229.9 512.7,283.6 722,251.9 688.3,370.5 687.7,210.2 516.5,284 706.2,215.9 714.6,253.3 490.6,175.3 777.7,228.9 528.4,188.6 698.1,234.3 727.5,292.2 669.7,248.8 471.2,182.5 749.6,231.7 750.6,241.5"/>
<polyline fill="none" stroke="none" marker-start="url(#m3)" marker-mid="url(#m3)" marker-end="url(#m3)" points="544.1,319.8 537.1,286 555.4,288.1 530.3,217.4 605.6,323.1 492.9,240.8 572.7,334.9 538.6,299.5 543,254.8 615.3,316.8 612.5,367.8 501.6,189.9 567.4,236.6 487,242 619.7,273 626.9,337.1 646.7,380 515.9,231.2 617,254.9 581.5,320.6 491.1,233.6 673.9,389.3 637,368.1 577.5,289 627,305.3 516.4,270 583.4,199.1 596,215.2 508.1,268.4 555.7,252.3 574.8,203.1 607.3,224.6 562.4,226 620.9,378.1 597.4,354.7 583.7,300.5 598.1,330.8 591.6,285.5 593.7,328.8 575.3,226.7 570.6,242.8 566.9,254.7 546.3,317.5 488.2,213.3 497.5,218.1 612.8,264.6 550.5,222.5 546.5,275.1 558.6,312.6 518.8,199.2 557.1,219 534.6,258.2 568.2,294.7 551.3,236.1 479.5,187.8 528.7,240.2 609.5,218 533.1,200.6 586.7,326.1 618.1,341.7 599.8,338.9 568.1,224.2 625.4,301 512.7,216.8 610.4,359.7 533.4,278.6 565.2,278.2 543.3,237.8 566.2,318.8 507.6,253.6 572.4,329.9 618.3,295.4 619.8,237.4 565.3,328.3 565.4,342.4 551.6,257.5 539.5,232.8 654.9,387.2 527.1,220 606.6,232 558.3,265.8 490.4,186.1 556.4,309.1 585.1,212.9 607.1,221.3 557.7,301.4 489.5,196 577.1,213.8 590.2,341.1 516.4,202.2 522.5,224.6 628.5,262.2 544.1,319.8 602.2,232.5 631.5,315 509.1,196.5 582.6,238.4 570.5,284.6"/>
<polyline fill="none" stroke="none" marker-start="url(#m0)" marker-mid="url(#m0)" marker-end="url(#m0)" points="619,31 316.5,140.2 807.7,181.5 490.9,147.1 319.6,92.6 376.6,100.2 610.3,171.7 750.2,18.1 706.1,18.3 675.2,38.7 721,184.1 490.2,35.5 770,143.6 613,39.6 804.3,201.5 764.6,55.7 618.4,58.7 378.7,130.5 427.7,78.9 769.9,60.3 482.5,132.6 731.8,102.1 776.3,189.7 521.3,75.6 818.1,78.3 290.8,90.7 661,34.6 347.6,132.7 743.2,75.9 452.3,84.9 265.8,162.2 621.4,27.7 366.6,72.6 358.3,76.5 319.3,75 614.6,120.1 794,131.8 835.1,122 713.7,80 829.2,78.6 326.2,91.9 724.6,20.1 356.9,126 480.4,49.5 710.3,46.5 608.5,105.5 742.7,135.1 233,168.4 269.7,131.7 621.5,104.1 697,45.2 356.8,100.4 637.6,106.6 607.2,119.6 598.5,179.8 306.5,77.1 820.8,192.6 580.7,45.4 594.4,30.1 535.3,49.5 347.2,123 699.7,60.4 722.3,55.4 257,164 785.8,188.6 458,148.2 445.5,72.9 463.8,108.3 427.9,124.3 437.3,104.6 457.7,97.7 848.8,93.6 596.8,18.5 655.5,109.2 557.5,29.9 781.8,143.4 670,112.1 698.5,69.9 548.6,116.2 602.9,32.3 622.3,21.9 609.3,37.1 788.6,120.7 682.5,50 431.6,87.6 714.4,65.9 661.3,112 773.4,122.9 723.9,27.9 468.1,88.1 616.1,25.7 802.3,214.3 720.6,185.8 839.9,214.5 491,164.5 629.5,104.5 582.9,132 735.9,42.5 666,115.7 625.8,109.1 636.9,171.4 786.8,94.6 494.2,78.9 812.3,226.2 565,82.4 375.8,133 816.6,96.7 582.6,35.8 622.7,92.9 649.5,113.6 806.8,70.4 694.8,185.3 277.5,163 479.7,55.9 656.9,37.1 733.5,40.6 771.2,109.9 696,71.8 659.9,140.8 554.6,158.7 744.6,54.4 462.5,120.1 607.5,134.9 251.2,109 463.3,90.9 687,52.1 720.5,31.1 317.9,138.5 313.6,94.2 540.6,25.9 697.7,89.1 728.1,75.9 468.8,156.5 845.6,87.6 851.3,94.7 767.9,25.3 658.3,112.7 673.8,109.5 761,55.3 377.5,88.9 249.8,84.7 821.2,150.9 813,170 482.9,116 320.2,103.9 811.4,128.4 731.7,44.7 386.9,112 636.7,106.7 291.9,149.9 482.8,144.2 782,87 660.2,70.6 597.9,171.9 441.6,85.7 706.8,103.6 570.1,155.2 624.9,21.5 834.5,148.2 490.6,148 817.7,97 760.6,192.2 741.3,191.6 797.2,112.6 365.3,99.1 757.6,55.1 486.4,108.8 564.7,115 819.3,79.6 583.1,131.9 273.6,70.1 577.5,167.3 655,26.8 290.4,132.3 586.4,82.2 335.8,75.6 774.8,195.8 386.6,124 478.6,95.6 651.9,36.5 563.5,28.2 475.4,133.8 350.1,87.6 782.8,170.6 311.3,148.2 782.6,60.7 690.2,46.1 503.2,78 368.7,72.3 656.2,159.8 828.9,137.7 599.7,23.6 478.8,95.7 545.6,37.9 399.9,86.4"/>
<polyline fill="none" stroke="none" marker-start="url(#m1)" marker-mid="url(#m1)" marker-end="url(#m1)" points="666.2,172.3 717.9,215 760.9,233.7 825.1,163.9 826.1,133.7 174,180.9 576.4,183.2 749.8,173.3 845.3,222.4 447.1,152.2 699.4,309.7 782,149.1 643.1,182.4 812.8,156.1 425,127.7 722.9,218.8 808.1,173.7 671.1,221.5 757.1,278.3 675.9,375.7 390.5,134.1 637.7,196.6 663.3,152.5 385.9,82.8 552,180.3 854.3,170.2 282,82.4 408.5,83.4 331.4,128.9 760.1,273.4 374.9,114.9 430.5,111.9 663.5,253.3 321.8,71.1 276.1,67.3 772,269.5 645.2,160.6 644.7,159.9 640.4,204.2 841.3,213.9 754.7,158.4 159.3,182.2 462.5,103.1 284,85.4 659.1,124.5 338.6,114.2 446.8,101.4 253.4,164.8 755.8,255.3 717.2,194 849,224.7 638.3,184.1 690.6,284.3 625.7,143.2 539.3,164.4 801.2,234.7 155.4,182.7 793.8,145.3 674.3,192 630.7,157.6 571.5,176.1 451.5,123.2 673.5,294.4 889.3,192.3 326.9,98.3 269.2,132.2 662.3,228.4 650.4,318.1 744.1,276 494.5,156 562.1,149.7 273.8,96.4 905.2,208.4 246.8,82.4 887.8,179.3 560.3,348.9 674.2,163.9 298.4,80.5 848.9,210 680,181.2 485.8,170.7 652.2,216.2 648.7,183 435.8,138.2 757.2,158.3 437.2,87.2 707.2,293.3 679.4,245.6 656.6,271.7 165.1,181.2 445.5,127.7 375.2,75 711.3,193.6 423.7,87.4 697.2,313.4 251.5,164.5 891.6,187 663.6,257.3 687.4,179.8 245.1,121.3 740.3,229.1 723,217.5 392.3,116.3 641.3,179.2 375.2,113.8 177.6,180.2 853.2,174.1 343.9,110.7 597.9,157 808.2,223.9 862,220.1 170.2,180.4 288.3,130.5 299.7,110.2 234.5,83.5 739.5,210.6 661,208.1 623.6,165.6 665.7,192 738.2,267.1 240.8,89.6 714.1,254 739.2,210.4 368.4,83 485.9,145.5 299.6,103.6 236.8,101.2 698.7,260.1 686.7,297 708.1,236.2 446.5,122.3 744.6,249.2 458.7,164.9 608.2,146.3 755,290.2 653.1,224.9 349.8,123.5 523.8,175.6 635.2,169.5 657.2,174.2 852.7,147.1 564.9,149.5 777.1,156.9 520.8,164.6 730.7,342.8 447.4,77.1 414.5,87.5 650.5,223.4 817.1,172.1 586.9,356.4 681.4,220.9 712.4,242 669.5,170.9 580.7,193.3 735.7,174.2 475.5,145.8 753.6,159.7 830,138 295.9,145.5 749.1,149.6 779.3,206.4 745.6,287.4 777.8,131.6 756,289.2 453.4,109.9 164.3,182.3 361,83 803.5,211.5 563.2,181.3 742.4,340.1 288.5,154.9 471.9,144.6 306.1,114.9 658.9,238.7 715.5,221.6 172.8,180.6 384.6,129.1 441.9,176.1 389.5,73.5 817,173.1 809.5,235 831.4,144.5 264,74.5 613.9,183.8 343.8,82.5 608.4,187.2 242,80.5 617.2,159.3 262.2,119.6 585.5,140.6 395.3,91.9 781.2,171.2 430.4,105.6 417.5,147.8 348.1,85.5 280.1,363.4 282.5,161.2 674.7,276.4 800.2,139.5 317.5,72.3 479.6,127.8 263.6,106.8"/>
<polyline fill="none" stroke="none" marker-start="url(#m2)" marker-mid="url(#m2)" marker-end="url(#m2)" points="654.2,218 519.6,259.6 732.7,334.2 632,278.1 567.8,191.4 710,303.8 731.8,297 731.5,313.4 479.1,175 711.2,238.8 675.6,293.7 755.7,224.5 685.8,214.1 532.5,198.1 709.5,301.7 575.7,206.4 714.1,281.6 677.2,244.8 485.8,217.5 687.5,289.7 648.7,237 686.1,362.9 689.3,263.4 742.9,216.4 652.5,220.7 729.7,245.3 771.9,225 722.2,254.8 630.9,235.8 690.7,206.9 683.1,360.5 639.8,332.4 675.3,384.2 487.8,249.1 754.2,236.8 529.5,186.6 531.4,202.9 688.6,241.7 502.8,189.3 724.7,296.6 514.5,210.6 713.3,279.8 686.2,227.7 675.3,302.7 646.8,227.7 603.6,231 635.1,235.2 654.6,217.6 270.9,357.9 671.8,300.9 486.6,224.2 618.1,246.8 612.4,267.3 653.7,216.4 758.6,261.9 678.9,389.7 710.2,242.2 656.8,245.8 590.3,293.3 650.6,264.4 561,192.4 511.8,260.2 654.1,308.7 765.6,262.7 626.7,230.9 495.8,228 780,236 588.5,243 740.6,276.6 659.6,312.7 651.1,311.8 644.4,236.3 628.3,208.8 733.9,238 660.3,303.6 625.2,267 517.1,180.7 609.9,278.7 515.4,195.4 668,232.8 502.1,184.4 577.6,231 588,195.2 672.9,279.4 739,234.6 625.8,249.4 781.6,245.2 602.1,369.6 701.8,247.2 615.1,213.6 665.1,294.3 637.2,204.5"/>
<polyline fill="none" stroke="none" marker-start="url(#m3)" marker-mid="url(#m3)" marker-end="url(#m3)" points="564.1,222.2 558,300.1 523.8,234.6 499.6,249.1 622.9,288.5 598.5,330 578.7,261 579.2,336.7 549.2,251 637.4,381.4 505.1,201.9 558,337.2 593.6,299.1 543.2,314.5 646.4,379.1 500.7,235.9 554.9,213 573.2,222.2 627.9,338.8 575,294.6 507.8,211.2 514.4,250.5 578.2,297.4 607.5,314.5 585.5,321.9 589.6,235.7 591.4,341.3 570,301.5 511.3,270.5 598.2,318.5 501.6,223.1 670.5,386.2 610.5,309.5 626.7,332.5 580.1,299.5 632.7,305.9 589.8,223.6 546.7,214.8 572.5,288.9 489.9,213.4 532.8,222.9 622.3,365.1 610.9,213.3 616.9,329.6 619.8,315.4 588.6,318.2 547.5,225.1 557.6,309.7 592.5,252.4 554.7,283.2 592.6,264.8 557.3,274.2 519.8,247 566.7,342.3 549.2,268.9 580.6,312.7 551.5,196.9 606.4,231.5 580.3,276 635.9,340.3 579.9,326.5 626.5,309.8 609.3,333.3 507.8,235.1 589,205.7 540.1,262.6 521.5,206.2 566.8,252.4 593.6,299.9 615,293.8 611.4,360.4 498.8,233.6 613,291.9 586.3,250.7 542.8,315.3 587.4,345 547.8,273.2 547.9,266.5 556.3,252 626.1,320.3 510.1,264.2 561.1,262.8 617.1,338.8 597.9,336.7 532.8,284 535.6,267.9 604.9,299.7 551.9,261.4 602,273.5 617.7,287.3 553.4,277.6 599,241.6 593.8,236.8 572.1,207.7 570.4,332.7 546.4,205.2 635.6,306.4 553.7,284.4 518.6,190.1 634.5,321.2 579.4,218.8 598,331.1 620.8,319.1 503.3,243.6 520.4,251.7 540.9,231.2 558.7,206 539.7,242.2 585.5,329.9 599.6,268.8 512.8,221"/>
<polyline fill="none" stroke="none" marker-start="url(#m0)" marker-mid="url(#m0)" marker-end="url(#m0)" points="291.1,91.5 803.6,76.5 667.6,177.9 753.8,50.8 458.1,117.3 522.2,97.1 781.4,122.5 804,95.6 668.1,108.8 700.6,103.5 304.5,149.9 381.8,116.7 631.3,79 804.4,68 614,168.3 481.2,51.3 268.5,157.4 321.5,92.6 517.6,35.4 521.9,139.8 605,24.9 601.5,118 421.9,95 625.8,22.4 236.7,121 796.7,93.4 749.6,27.7 381.1,108.3 543.1,24.1 235.6,100.1 349.4,86.4 492,35.6 589.5,70.4 544.4,120.4 846.4,91.3 574.7,48.3 702.3,66.3 514.9,34.2 755.5,186.1 724.5,21.7 583.2,32.9 570.1,137.9 680.6,38.4 618.5,107.3 770.8,117.2 840.2,166.6 430.7,103.6 768.2,115.3 523,122.8 804.2,72.8 726.3,49.2 761.8,78.9 769.1,109.9 774.8,25.3 747.2,161 253.5,92.6 643.4,106.8 459,125.9 758.1,142.9 462.2,135.7 815,95.8 820.6,120 631.2,110.7 786.9,143.6 729.2,91.8 320.1,86.5 401.4,137 737.2,188.1 639.4,106.5 269.4,118.1 349.5,74.5 698.9,49.4 607.7,27 411.3,119.6 562.8,31.5 620,146.6 562.1,101.9 647.6,60.6 598.3,36.8 613.7,183 640.2,19.6 449.7,75.9 625.3,56.4 731.4,76 415,107.3 310.3,83.5 382.9,99.2 275.5,127.7 500.9,116.2 790.8,108.9 314.4,96.2 782.3,128.8 754.9,183.6 780.2,129.5 488.3,103.9 635.2,54.3 323.7,84.9 266.5,111.6 450.7,103.1 729.1,80.3 269.4,109.3 566.3,73.7 834.8,86.6 312.4,82.8 668.1,82.3 717.9,99.5 677,110.2 764.3,53.5 517,121.5 720.4,31.1 337.1,94.8 720.3,99.8 641.6,113.7 681.9,29.5 466.3,89.7 623.5,182.1 285.8,155.6 498.2,103.8 676.8,109.2 501.2,62.2 681.6,174.3 666.9,32.7 297.5,135.1 280.1,141.8 630.3,90.9 424.3,118.3 440.4,135 602.5,106.8 818.2,137.6 771,81.6 528.5,43.4 616.2,137.1 682.2,175.3 671.5,36.8 397.3,130.8 514.2,63.3 731.6,113.3 753.9,126.5 683.4,32.5 639.4,19.4 708.9,91.1 567.2,49.5 363.8,89.7 472.9,110.6 727,42.8 797.1,144.5 756.2,147.9 648.3,108.9 741.6,108.7 330.4,74.3 629.8,38.4 660.1,39.3 426.7,86 892,188.5 760.1,55.1 284,160.1 737.3,103.8 718.4,72.4 669.6,24.5 821.1,218.3 802.4,116.1 722.2,55.5 823.6,197.1 786.3,133.5 617.8,57.2 785,19.9 632.7,53.1 307.4,149.5 810.3,232.7 451.9,137.6 697.1,104 809,161.3 680.7,48.6 558.3,119.5 840,141.8 730.9,64.3 731.5,189.8 745.2,147.9 254.3,110.8 856.5,190.2 496.2,107.2 300.2,149.6 672,109.3 391.5,106.7 314.8,67.6 434.9,88.8 611.8,22 695.2,56 620.8,147.2 715.7,25.5 656.4,53.2 640.7,159.1 723.5,55.2 847.3,88.2 719.6,108.4 587.6,184 366.4,86.8 778.2,176.7 605.1,179.7 742.9,75.3 524.5,85.3 724.1,188.2 602.1,76.9 692.4,100 818.9,228 664.7,170.5 510.1,61.9"/>
<polyline fill="none" stroke="none" marker-start="url(#m1)" marker-mid="url(#m1)" marker-end="url(#m1)" points="474.8,193.2 732.5,229 828.1,215.8 189.2,178.2 304.5,152.4 550.8,332.4 769.8,185.9 366.6,73.9 674.6,227 553.9,177.3 308.4,78.5 398.4,118.9 582.1,347.4 570.3,160.3 326.4,135.8 743.2,300.3 470.6,145.2 398.3,139 741.5,194.5 386.3,99.2 636.4,191 528.5,177.8 570.3,158.1 760.4,146.9 267.4,115.4 771.3,205.4 277.3,360 750,231.2 457.2,99.9 748,204.1 822.9,148.8 195.7,177.2 707.2,297.8 750.7,210.8 627.5,170.1 489.5,174.9 366.2,132.9 648.1,188.1 663.2,179.3 296.1,129.7 334.6,71.9 763.3,167.7 644.8,392.6 335.9,74.1 813,162.4 378.4,123.2 822.4,142.4 452.8,181.3 396,110.8 826.9,224.2 232.4,80.5 511.3,151.3 569.5,169.4 627.1,236.8 776.1,185.7 805.6,243.6 495,158.7 761.4,205 697.7,293.9 621,149.8 708.3,304.5 469.9,152.7 442.6,91.8 764.7,246.5 561.3,177.6 817.5,147.9 317.5,115.6 515.6,292 393.6,107.1 587.2,161.9 450.2,99.8 767.5,152.6 815.3,170.6 652.3,247.5 342.3,132.4 652,191.2 665.2,205 645,184.7 345.7,103.2 711,262.9 694.7,256 691.9,216.1 420.7,98.7 682.5,362.2 747.8,148.1 366.9,109.5 693.3,277.2 498.3,273.5 807.2,239.1 578.4,184.5 677.9,362.9 800,237.1 330.7,101.3 364,83.4 278.7,158.4 570.9,178.4 686.8,187.8 256.6,119.7 391.8,98.7 760.6,272.9 576.2,151.1 194.7,178 300,148.8 700.5,311.8 537.4,168.4 592.9,129.4 743.8,337.4 719.9,238.8 649,221.4 767.9,219.8 240.1,122.5 283.6,141.9 739.4,334.3 302.4,104.4 350.6,121.5 807.3,177.1 666.9,271 717.9,253.9 717.3,189.4 660.9,298.7 406.7,123.2 805.1,145.2 727.3,213.8 900.2,209.6 343.8,75.4 614.3,154.3 796.6,247.2 471.7,129.8 898.8,190.4 364.3,83.7 418.1,83.3 408.4,90.8 772.3,190 578,344.5 630.5,176.5 306.6,75.3 529.7,124 755.6,248.5 596.3,367.9 508.9,168.2 894.4,186.7 294.3,375.7 266.3,361.1 371.3,119.5 239.4,102.4 182.9,178.8 833.4,146 776.4,213.6 669.4,293.2 466.5,123.2 731.5,209.6 659.8,274.9 768.7,286.3 755.4,202.3 838.4,135.4 831.8,218 545.4,326.4 357,108.9 701.5,239.2 708.6,310.9 757,208.6 464.2,117.3 639.2,160.3 279.5,133.7 563.9,170.2 418.6,75.4 415.2,87 437.4,170.5 593.1,171.2 531,165.1 748.2,241.3 652.3,230.1 625.3,190.8 321.3,125.4 647.9,234.2 444.9,74.1 772.9,230.9 274.4,160.7 777.9,149.3 460.6,167.6 794.1,183.5 695.4,214.5 481.6,223 746.3,274.3 514.1,287.7 651.9,187.6 764.2,239.2 356.6,86.6 763.1,239.6 334.6,78.2 703.4,202.5 741.7,169.7 505.3,164.9 717.4,286.6 258.1,72 283.3,363.6 761.3,165.7 790.7,212.7 768.2,190.3 679.4,197.5"/>
<polyline fill="none" stroke="none" marker-start="url(#m2)" marker-mid="url(#m2)" marker-end="url(#m2)" points="590.8,190.6 662.8,206.3 658.3,203.6 689.4,374.6 641,380 644.6,249.7 628.5,199.8 738.2,329.8 572.6,234.4 631.3,213.1 604.1,271.2 615.1,206.8 766.4,283.5 486.1,179.7 611.4,243 629.3,202.9 678,239.8 633.3,281.1 714.1,254.4 653.1,251.7 745.8,209.8 622.4,258.2 678.6,298.3 763.3,240 490.4,247.3 688.9,246.2 680.3,236.2 798.7,243.9 730,253.1 639.2,363.3 765,218.2 707.2,213.5 679.5,308.2 694.4,309.4 701.6,288.9 621.6,233.7 646.1,219.1 745.2,272.2 595.5,206.6 586.3,198.6 642.3,388.2 738.4,323.8 612.7,211.8 602.7,209.1 764.5,231.4 597.5,275.4 636.7,279.7 737,294.2 536.2,284.3 574.8,286.6 674.2,382.6 749.1,222.1 606,326.4 550.5,316.3 691.5,362 622.9,264.1 710.6,212.4 719.4,252.2 600.1,309.9 638.2,345.5 693.1,363.3 678.5,249.4 732.7,264.2 767.6,222.8 674.7,225.7 705.8,224.5 510.7,195.6 679.5,230.5 667.4,260.3 674.3,280.6 737.5,211.4 758.4,263.4 627.2,250.2 639.8,259.3 643.1,287.2 790,225.7 693.8,270.8 491.9,185.1 538.7,211.6 737.2,282.5 626.6,196.8 468.3,182.5 652.6,258.3 680.1,262.8 738.5,204.1 754.8,281.7"/>
<polyline fill="none" stroke="none" marker-start="url(#m3)" marker-mid="url(#m3)" marker-end="url(#m3)" points="514.6,194.2 618.5,318.9 613.8,347.1 581.5,271.2 584.3,278.7 507.5,213.2 607.1,356.8 537.5,261.6 597.7,317.8 594.7,206.2 477.3,189.8 532.9,297.8 509.4,237 622.7,274.9 630.3,351.3 606.7,329.5 589.4,227.5 550.6,320.5 499.6,256.9 542.6,277.8 493.4,187.5 630,381.6 551.9,249.9 511.2,219 610.7,322.3 536.4,255.7 490.7,230.4 559.9,290.7 488.2,246.1 521.2,227.5 627.8,338 550.3,227.4 610.7,260.4 615.5,221.6 565.8,212.7 577.2,289.1 551.7,326.4 620.8,308.9 600.8,341.1 595.4,257.3 569.3,265.5 579.7,310.2 672.7,389 604.9,326 584.3,243.3 621.8,358.1 633.3,377.6 504.9,195.6 605.7,271.1 489.8,209.9 604.2,211.8 572,302 579.5,310.3 639.5,377.2 566.3,276 557.6,333.5 578,334.6 551,194.9 589.2,259.9 602.9,237.6 622,321.6 569.4,283.3 502.3,225.3 545.4,272.2 595.2,267.5 590.6,329.8 563.3,293.9 489.4,197 630.5,343.8 613.7,269.2 514.1,268.3 563.4,279.8 582.5,229.5 610.7,322.1 548.2,271.3 566.2,326.6 545.5,293.2 623.2,310.3 546.8,277.7 585.9,289.4 515.9,207.3 563.2,203.9 588.6,346.8 584.2,340.3 584.4,251.3 565.6,295.4 567.4,317.6 533.3,262.9 485.6,196.9 544.2,288.7 606.9,256.8 539.6,228.5 660.4,387.7 530.6,237.2 506.9,211.5 574,338.7 539.7,310.6 594.9,326.7 505.5,244.5 615.2,246.1 558,246.1 562.3,318.9 627.9,368.9 560.6,240.9 622.2,275.5 596.6,356.8 494.2,253.7"/>
<polyline fill="none" stroke="none" marker-start="url(#m0)" marker-mid="url(#m0)" marker-end="url(#m0)" points="701.2,63.6 353.4,71.5 606.4,109.4 270.4,155.9 344.6,76.6 821.7,160.8 449.1,83.9 285.7,85.5 261.4,98.9 720.7,82.2 589.2,170 266.5,109.6 519.7,49.9 510.9,46.5 686.1,18.5 589.2,35 564.8,48.9 826,80.4 715.9,21.5 315.5,97.7 749.3,58 534.4,27.7 372.5,74.5 786,59.4 707.4,45.1 792.2,64.9 329.3,119.5 671.1,173.7 616.4,104.7 773.1,187.5 633.4,116.5 418.8,140.6 599.2,177.9 483.7,53.8 817.3,180.7 597.8,60.6 649.1,110.2 756.6,34 575.7,167.3 810.6,95.3 804.5,69.2 691.4,35.1 741.8,193.2 782.3,19.8 665.8,59.2 780.7,60 645.1,163.5 700.2,189.2 413.6,79.6 351.7,80.5 698.8,75.9 269.6,126.2 579.5,148.3 796.8,93.1 699,107.1 785.9,166.2 725.2,75.3 606.3,84.7 679.6,32.6 850.5,146.1 824,126.1 828.3,195.5 597,107.9 717.3,76.7 619.7,104 575,48.8 741.8,75.9 609,178.3 776.7,185.4 483.9,145.3 532.9,114.3 427,138.3 843,167.9 612.4,26.3 731,64 378.9,120.7 791.9,66.4 301.6,89.6 241.5,96.8 692.8,33 326,76.5 232.9,97.7 638.2,30 621.4,70.7 455.8,84.9 523.3,30.8 547.2,36.2 813.1,161.5 560,46.8 679.5,109.3 546.3,118.1 500.1,36.8 514.9,160.7 796.6,70.9 548.8,109.3 714.3,21 274.2,134.6 478.1,94 501.4,99.4 813.5,95.7 747,40.1 505.7,153.8 761.4,53.5 478.9,104.2 584.7,131.6 771,100.5 709.6,58.5 277.8,157.2 415.2,114.2 666.9,76.2 582.1,42.5 908.5,201 698,47.6 743.3,31.2 802.3,122.4 722.1,93.7 626.4,148 446.9,87.7 751.8,138.3 289.6,149.1 773.7,113.7 766.5,58.5 615.9,109.9 298.9,92.3 772.1,18.3 787.7,62.5 534.3,44.8 754.7,130.4 792.1,115.2 555.8,86 607.7,105.1 516.4,31.9 482.4,48.8 308.5,139 334.6,83.8 598.2,60.9 677.1,114.4 660.1,178.1 528.3,37.4 764.2,18.8 355.1,111.1 427.2,146.8 461.8,111.2 722.5,73.9 769.9,20.6 691.2,80.8 692.4,45.5 540.9,122.3 771.4,26.8 520.9,36.4 460.4,102.2 766.3,81.1 468.6,121 616.5,70.1 297.8,127 685.3,26.2 816.9,97.6 549.9,38.6 673.7,34 603.9,136.7 823.8,228.6 324.4,115.5 705.8,193.2 790.1,88.8 512.3,32.3 735.7,78.5 431.9,81.4 259.9,107.6 598.6,40.7 713.9,106.3 806,117.3 722.1,102 299.8,154.2 565.4,150.4 340.7,75.7 661.8,31.5 387.8,101.2 323.2,90 670.2,117.9 443.3,130 510.7,39 682.6,78 817.3,124 847.9,172.8 552.4,117.3 828.7,84.3 236.8,118.1 539.2,46.3 726.4,44.7 634.5,159.4 316.2,125.8 331.9,120.2"/>
<polyline fill="none" stroke="none" marker-start="url(#m1)" marker-mid="url(#m1)" marker-end="url(#m1)" points="649.7,186.1 604.7,158.6 289.6,367.1 260.4,103.2 740.6,209.7 438.2,100.8 684,174.1 486.4,131.1 464.3,162.3 716.7,248.6 157.8,183.2 482.2,221.7 657.5,240.1 277.5,358.2 620.5,152.6 669.6,399.9 284.8,120.6 661,197 494.1,170 765.3,285 739.6,249.6 427.3,129.2 579.9,187.6 765.3,238.9 672.1,214.6 302.9,156.1 810.8,220.1 571.4,161.8 293,84 694.2,211.4 662.7,253.4 638.5,184.9 749.8,198.1 391.5,134.6 558.3,343.4 476.9,196.3 599.6,130.1 506.7,281.7 806.7,166.5 762.8,285.8 829,163.9 167.7,181.8 362.1,116.1 177.6,180.1 235.8,132.1 731.1,250.2 270.5,85.9 820.6,143.8 775.7,212.4 729.2,244.8 422.9,114.7 298.8,97.6 285.5,86.1 661.3,185 655.7,309 401.7,82.5 675.3,374.9 741.1,300.9 386.8,77.7 618.1,137.7 814.1,213 689.4,183.6 496.3,174.4 739.4,274.7 349.4,123.5 753.9,190.8 843.3,207.9 293.4,117.7 372.7,79.7 217,170.8 681.4,224.1 267.1,359.7 799.9,207.3 802.7,175.3 661.1,270.2 716.8,250.6 432,97.7 378,107.8 443,132.8 391.4,122.1 697.2,197.5 495.5,153.9 289.2,156.4 642.3,153 701.4,186.8 577.6,133.2 776.7,190.4 686.6,292.7 610.7,128.2 621.3,182.3 592.3,172 579.3,132.6 642.9,161.6 284.6,154 381.8,111.7 768.6,243.3 753.8,174.7 793.6,220.9 614.5,177.1 410.6,82.9 795.1,147.3 641.9,329.5 774.4,202.4 298,89.2 402.1,114.5 317,71 642.9,161.3 631.4,208.3 413.9,144.7 414.2,128.7 464.6,189.9 785.7,173 459.7,114.1 268,76.6 467.6,137.8 435.7,116.8 698.6,205.7 281.7,104.7 746.8,197.7 386.9,75.5 757.2,194.3 268.1,103.8 770.4,200.1 557.5,345.2 526.8,123.5 731.6,304.7 289.2,369 250.7,164.8 301.2,151.1 645.2,224.7 701.2,232.3 439.7,161.8 699.6,210.1 656,195.1 488.5,143.4 500.8,130.6 804,219.4 694.9,380.2 748.7,150.4 547,327.9 773,203.7 481.1,166.3 243.8,76.9 510.8,165.7 627.4,150.8 624.7,167.8 284.4,138.5 307.4,147.5 374.4,127.5 419.2,103.9 404.1,88 302.4,155.3 673.4,291.2 246.6,165.8 811.6,155.4 588,139.5 805.9,221.2 330.6,108.7 681.8,208.3 261.3,130 583.4,179.1 650.8,228.4 587.4,185.9 729.7,182.5 421.7,96 610.2,169.7 736,253.1 756.3,272.5 232.4,169.2 561.6,347.5 331.1,118.3 414.4,111.5 743.4,337.2 682.5,251.9 683.6,275.6 432.1,93.7 497.8,269.4 424.8,83.4 657.5,154.8 432.8,87.5 740,196.3 302.4,135 761.5,231.9 435.9,118.4 690.4,293.8 194.1,178.5 239.8,96.7 783.5,139.6 805.8,208.1 794.5,174.4 370.2,87.6 380.1,74.3 268.1,360.2 682.7,365 798.8,179.7 647.4,274.9 425.7,133.1 698.5,360.1 770.6,217 443.5,115.7 369,108.8 442.9,112.8 702.8,367.4 346.9,115.3 777,251.5 503.5,162.3 418.2,96.5 280.7,155.8 652.3,267.3 667.3,380.2 304.3,102.3 229,102.1 454.6,89.4 487.4,156.5"/>
<polyline fill="none" stroke="none" marker-start="url(#m2)" marker-mid="url(#m2)" marker-end="url(#m2)" points="562.6,271.6 672.4,263.6 592,226 769.1,243.4 650.4,313.1 683.4,211.7 572.9,250.7 722.7,217.7 705.6,276.1 636.4,255.5 643,252.4 643.6,273.4 754.9,222.6 629.9,288.2 637.6,352.2 627.1,248.1 691,296 703.2,254.5 772,224 562.4,246.9 616.1,227.4 490.7,182.8 722.3,276.6 674.4,221 636,233.2 701.8,275.7 669.4,303.4 685.9,363.7 644.7,317.2 658,197.9 525.2,291.8 650.7,243.8 707,259.9 660.1,289.2 717.7,238.1 645.4,259.1 506.7,185.1 752.5,217.8 563.6,206.4 697.7,299.8 668.4,392.7 708.8,247.5 666.4,246.9 707.5,248.9 617.9,379.4 641.6,318.2 730,242.5 671.6,392.4 487.6,216.2 620.9,310.8 623.7,225.2 647.7,287.6 783,235.6 658.2,225.7 647.1,373.3 668,218.6 529.5,294.7 703.9,260.3 679.5,294.1 676.3,273.3 654,286 767.9,268 513.8,221.2 710.7,264.8 485.6,194.7 635.3,350.9 621.3,226.7 733.5,271.9 693.8,258 550,328.9 752.5,224.3 747.1,277.1 507.8,244.3 679.4,221.5 503.3,233.6 769.3,254 683,371.1 718.2,233.6 610.1,247.9 651,261.1 729.6,278 511.6,198 637.8,278.9 642.7,253.7 648.7,212.3 485.4,242.2 715.5,293.6 774.2,253.2 698,300.3 581.6,192.8"/>
<polyline fill="none" stroke="none" marker-start="url(#m3)" marker-mid="url(#m3)" marker-end="url(#m3)" points="585.1,305.2 608.8,353.4 601.9,290.1 576.8,243 602.2,267.5 506.1,200.9 548.5,323.2 640.6,304.6 574.3,318.2 605.3,258.4 528.2,266.9 542.5,246.2 564.2,247.7 565.9,307.9 560.2,234.6 646.1,382.2 609.4,371.1 607.2,260.4 495.7,241.7 564.6,284.1 549.4,204.9 502,200.8 610.3,250.9 606.4,327 548,201.5 577,277.1 548.6,302.9 508.6,208.3 631,339.8 607.8,371.7 615.3,271 607.5,256.9 614.6,314.9 526.1,238.1 544.7,254.1 554.4,265.6 634.1,299.1 626.6,359.5 597,356.3 560.2,298 575.1,216.3 524.5,280.2 598,306.6 592.4,326.8 521.7,277.8 637.4,372.6 488,244.8 536.3,217.6 525.3,249.4 503.3,239.7 568.8,231.5 523.3,201.1 492.1,255.6 631.9,361.7 501.9,200.5 516.5,229.5 644.8,377.5 519.2,237 606.2,265.1 567.6,226.9 545.7,258 556.7,252.5 615.4,233.1 588.5,290.9 527.3,235.5 603.2,244.5 543.2,303.2 506.7,258.9 564.1,204.1 621.9,262.8 608.2,275.7 496.5,226.2 594,264.2 623.7,346.9 585,338.2 617.1,366.5 592,237 599,230.8 528.9,241.2 539.7,236.6 540.2,199.3 496.9,194 542.8,275.1 623.1,286.7 567.9,284.8 610.9,262.3 602.6,347.8 573.2,250.6 528.8,223.9 539.7,279 524.3,246.2 545.4,239.5 540.9,247.9 598.7,334.5 622.6,288.6 559.5,305 527.3,209.3 625,349.8 627.6,336.5 613.7,310.6 518.9,272.2 551.6,296.8 598.5,326.2 600.6,200.7"/>
<polyline fill="none" stroke="none" marker-start="url(#m0)" marker-mid="url(#m0)" marker-end="url(#m0)" points="615.2,27.3 737.9,112.8 650.1,72.6 803.7,67.2 751,78.5 800.6,117.9 695.2,69.3 668.4,122.8 401.8,86.2 847.7,94.8 470.1,106.1 617.2,149.1 596,41.6 672.6,179.6 784,60.1 544.5,30.8 663.9,114.8 276.8,154.8 753.5,54.5 645.2,47.8 803.4,175.5 577.2,133 451.2,86.4 715,82.2 646.5,174.3 669.2,26 804.4,154.2 547.5,44 751.9,127.5 782.9,87.5 743.7,193.4 326.9,87.6 750.7,195.2 657.5,152.2 765.7,141 649.1,48.7 775,148 531,172.5 846,88.7 535.2,32.7 724.4,110.7 613.4,120.5 778.9,83 781.8,117.5 820,94.3 778,108 798.1,123.5 291.3,97.7 600.4,40.5 703.2,182.6 800.6,93 809.1,99.5 664.1,110.5 534.9,41.7 271.9,121.4 292.2,82.3 488.4,133.7 778.3,58.1 271.2,161.5 803.5,95.6 724.7,56.6 508.3,59.7 561.8,43.4 852,171.7 810.2,203.1 459.1,97.5 659.7,112.2 409,125.7 289.6,131.8 274.5,74.3 555.6,100.9 831.6,139.5 735.6,86.8 555.7,118.3 763.1,77.8 355.3,117.9 648.4,178.5 523.8,111.8 379.5,102.9 827.6,216.2 724.3,46.5 646.9,187.7 507.5,41.7 447.2,150.7 672.7,116.6 578.1,96.2 805.3,95 644.9,110.2 627,179 472.5,64.3 674.7,42.5 451.1,83.5 745.4,25.5 625.2,60.1 703.6,79.6 616.3,174.2 261.7,73.7 854.9,91.7 606.3,170.7 655.5,46.6 788.2,87.7 724.1,62.5 770.9,58.8 660.8,172.6 713.4,80.6 280.4,95.9 545.5,92.9 503.3,155.4 729.9,56 825.5,78.5 810,127.5 624.1,20.8 750.3,194.4 772.3,54.8 828.1,116.1 460.8,107.3 804.6,71.1 337.3,90.4 654.1,25.4 688.6,35.1 500.9,62.4 792.7,95.4 727.2,20.6 714.5,80.7 634.4,185.2 757.2,117.7 610.7,25.9 600.7,80.1 665,18.5 652.9,73.8 772.4,56.7 635.5,27.1 339.9,82.5 556.2,46.6 506.4,108.1 818.4,166.9 748.5,37 425.3,85.1 240.7,78.7 654.3,189.2 307.6,76 434.8,142.3 634.4,106 542.9,52.1 649.6,159.2 553,42.7 743.5,140.2 466.1,136.5 219.3,172.9 341.8,127.4 527.4,67.9 854.4,169.2 607.5,158.4 482.1,109.9 770.2,23.4 705.7,87.7 486.8,119.2 802.5,97.6 705.9,71.9 614.9,30.9 819.9,120.9 609.5,21.6 686.2,37.9 840.9,213.6 621.8,33.6 385.2,88.8 260.5,110.9 641.6,107 580.7,32.2 625.4,105.9 655.9,140.8 793.3,79.7 823.8,79.7 262.7,99.1 835.1,82.6 710.8,81.1 431.8,162.2 736.7,77.3 660.4,181.6 683.8,108 466.4,142 696.5,93.4 598.3,61 788.5,89.3 829.5,174.5 569.1,34.4 671.6,185.3 289.1,157.1 626.6,30.8 549.3,22 392.1,102.8 529.3,99.3 590.6,159.4 771.7,81.1 862.7,185.9 548.3,119.9 793.5,187 777.2,84.9 780.7,170 751.7,34.2 351.4,71.4 362.9,79.1 584.4,119 732.2,24.5 802.5,94.7 715.6,104.2 628.4,148.3 787.1,64.9 539.9,165.7"/>
<polyline fill="none" stroke="none" marker-start="url(#m1)" marker-mid="url(#m1)" marker-end="url(#m1)" points="660,158.4 812.8,179.2 294.7,376 692.5,208.7 335.6,81.3 243.2,101.7 437.5,131.1 884.9,185.9 377.8,105.7 653.5,308.9 486,179.2 741,199.5 642.3,333.8 600.8,171.5 737,189.6 323.8,111.6 760.7,165.2 252.1,165.4 194.3,177.7 323.8,100.7 628.1,201.6 793.7,215.1 805.7,153.7 167.1,182.1 273,137 628.9,177.4 267.2,161.5 660.4,245.8 718.5,307.8 793.5,238.6 668.5,195.5 597.2,372.8 694.9,213.6 768,213 640.6,270.8 583.2,181.6 273.4,140.1 485.1,161.9 709.3,235.4 741.8,333.3 670,191.6 604.3,163.1 209.2,173.8 736.5,343.6 469.4,165.6 672.6,214.7 183.9,179.5 377.1,122.8 337.3,106 628.5,158.3 406.3,121.4 799.4,213.8 241.5,115.8 465.7,102.4 647.8,202.8 534.6,164.6 474.9,116.4 689.7,371 253.7,164.1 657.3,393.3 561.1,185.1 826.4,190.5 683.4,211.8 385.5,102.4 531.4,168.3 733.6,244.2 459.1,113.5 813.8,159.1 251.1,84.3 449.1,172.2 637.1,250.4 527.5,180.9 661.7,227.1 655.8,293.8 464.5,118.1 666.3,260.5 421.7,106.6 737.7,246.3 364.5,76 661.6,187.4 691.2,175.8 277.4,126.4 718.7,251.9 526.5,123.4 444.3,171.5 447.4,164.2 428,102 285.4,364.5 664.3,155.5 340.3,113.7 204,176.2 894.7,208.1 615.1,163.8 794.3,237.7 288.4,372.2 610.4,186.6 649.5,156.4 629,204.6 799.7,235 574.6,151.5 235.6,133.9 764.6,277.1 608.3,161.9 690.7,358.9 403.4,104.8 566.1,155.1 681.9,231.9 794.4,242.8 302.8,67 722.2,198.2 289.8,367.8 676.8,282.8 783.8,225.9 654.3,155.3 384.8,81.2 449.2,102.6 767.9,143.9 389.9,74.9 406.1,106.1 391.3,105.7 450.3,146.7 435.8,89.1 724.5,303.2 240.6,113 691.7,232.4 277.4,360.8 314.3,100.2 654.3,299.6 775.2,264.6 722.7,311.9 621,387.9 471.1,176.3 580.2,191.6 318,93.7 743.7,247.4 882.4,196.8 700.9,233.2 339.1,86.6 420.1,151.9 627.4,194.1 266.9,80.8 457.6,146.2 786,214.3 266,357.8 260.9,94 691.8,273.7 484.8,152.9 622.5,171.9 305.9,100.6 263.7,158.9 406.3,129.1 322.8,89 652.4,278.5 385.4,84.9 685.8,225.6 812.8,217.7 439.1,148.4 530.5,305.3 281.5,80.4 268.3,357.8 276.1,157.8 672.1,296.4 308.1,154.4 642.7,325.6 701.8,235.3 264.7,100 562.8,181.7 762.8,156.8 614.7,380.5 673,292.2 620.5,147.8 394.5,102.9 423.2,82.3 622.7,175.7 772.3,249.4 574,180.8 429.4,108.2 463.2,151 696,274.5 842.4,217.7 475.2,195.5 642.8,197.3 392,88.3 345.5,70.8 640.8,140.2 274.1,156.9 648.9,214.8 831.9,167.2 359.3,120.3 484.6,217.6 808.6,225.7 643.1,343.1 813.1,216.9 275.4,130.1 289.8,158.8 260.5,120.1 315.8,102.9 458.4,122.3 691.6,190.8 673.9,311 697.2,297.2 630.8,190.8 388.6,83.4 829.4,168.2 674.4,248.8 789.4,229.1 370.6,93.3 596.6,177.4 193.6,177.9 770.6,282.4 787.9,139.2 780.2,160.4 419.5,129.6 765.8,287.1"/>
<polyline fill="none" stroke="none" marker-start="url(#m2)" marker-mid="url(#m2)" marker-end="url(#m2)" points="660.3,219.3 668.1,248.3 571.2,200.9 666.8,295.2 519.8,186.4 722.1,285.7 749.8,274.7 614.8,374.2 532,190.7 651.7,277.6 700.6,258.6 723.9,222.1 657.9,256.2 586.7,197.8 706.8,205.3 711.6,233 726,306.2 641.7,281.1 562.2,300.6 637.6,214.9 627,216 622.7,291.7 633.3,266.6 634,301.2 696.5,309.9 614.1,233.6 704,298.1 686.4,270.3 684.6,262.1 627.8,359.6 732.7,272.2 708.4,291.1 792.5,227 787.6,244.5 509.5,185.9 762.7,217.7 639.2,327.9 657,390.1 637.5,253.7 694.2,368.2 744.9,253.1 642.9,263.9 529.8,295.6 527.8,292.7 696.5,287.3 674.1,271.2 529.3,191.4 556.3,340.4 522.6,223.4 686.7,305.9 660.6,222.2 747.9,244.7 622.6,244.5 779.3,229.2 654.4,217.6 521.4,288.3 667.7,275.7 692.5,208.1 687.8,228.4 620.5,381 662.7,261.5 644.9,200 732.5,302.8 582.5,193.2 678.5,209.6 655,277.3 696,213.5 754.9,269.4 670,233.7 530,223.1 595.4,231.9 651.2,297.3 736.8,236.3 627,273.6 684.4,374.4 739.2,277 647.1,262.6 731.5,230 600.8,234.1 496.3,180.6 639.3,352.2 593.4,268.9 679.8,386.4 626.8,284.7 775.3,222.8 595.7,276.4 600.3,200.9 609.5,202.6 627,253.5 612.3,200.1 658,265.3 627.3,233.7 718.9,231.3 535.6,309.2 775.2,218.9 623.4,199.1 646.6,218.1 722.7,274.4 713.1,215.4 670.5,246.6 766.4,243 774.8,250.1 648.3,216.3 694.8,277.9"/>
<polyline fill="none" stroke="none" marker-start="url(#m3)" marker-mid="url(#m3)" marker-end="url(#m3)" points="589.4,271.1 486.7,194.1 663,387.8 546.9,221.1 518.6,258.7 522.7,246.4 518.8,203.9 578.1,281.3 609.6,237.2 552.1,266.1 610.3,272.7 527.4,229.2 576.6,271.8 621.5,325.5 550.7,290.4 612.1,287.4 631.1,308.5 584.5,344.2 606.2,364.6 640,370.9 588.9,235.2 618.6,349.2 562.4,332 577.3,217.2 569.9,238.5 565.5,306 598.4,220.4 597.7,338.1 544.7,263.8 517.4,211.4 611.1,251.7 579,251.8 566.6,204.1 587.7,199.8 578.6,239.8 606.7,248.7 623.1,275.4 591.4,335.3 514.4,261.3 584.1,226.2 556.8,263.4 593.5,299.7 549.4,206.3 599.1,357.9 545.9,253.5 512.6,210.7 513.1,273.3 632.6,337.3 559.7,297.6 510.5,210.9 615.6,374.9 538.4,263.2 568.4,256.3 599.9,268.2 496,215.3 556.3,209.8 539.4,305.2 614.7,305.6 612.5,347.6 586.7,227.5 530.5,213 514.3,212.9 617.8,360 598.8,278.5 522,202.9 510.2,243.2 567.5,223.9 602.7,344.2 556.8,200.8 526,255.7 528.4,235.8 655.5,390.3 587.5,320.2"/>
<polyline fill="none" stroke="none" marker-start="url(#m0)" marker-mid="url(#m0)" marker-end="url(#m0)" points="465,137.6 662.7,109.4 607.8,157.3 811.1,73 817.6,74.1 733.4,78.5 577.1,35.5 358.9,115 752,163 629.2,59.2 280.6,86.3 632.8,58.4 440.7,113.6 511,34.5 711.9,77.9 629.6,108.3 551.6,38.8 679,36.2 481.2,56.5 793.4,62.3 413.4,116 641.4,29 421,135.9 599,165.4 541.7,47.4 778.5,24.6 792,182.5 509,154.8 318.4,92.9 690.8,24.5 286.4,158.3 613.2,108.9 611.8,68.2 699.3,90.3 725.9,98.9 634.7,32.3 632.1,169.7 366,80.4 823.2,123.6 296.8,143.5 678,42.2 259.8,90 583.6,121.8 730.8,93.7 385.8,82.7 789.1,186.2 397.7,89.9 843.5,89.5 347.3,88.5 262.7,77.3 562,126.9 743.1,28.3 625.8,50.9 724.7,56.9 781.7,125.1 271.6,73.3 787.8,88.2 699.4,179.8 471.1,87.9 837,228.8 646.3,188.9 777.2,109.9 360.5,124.6 691.1,187.2 435.3,164.6 618.6,104.8 645.9,113.7 486.5,112.5 684.8,31.3 804.8,66.7 907,205.2 768.7,78.5 674.1,39.4 238.4,76.5 522.1,98.4 697.7,183.4 825.9,95 787.9,94.6 422.9,112.7 660.7,124.7 267.8,104.9 720.3,48.1 269.9,88.9 849.6,88.3 776.5,144 656.7,152.9 884.1,196.3 738.6,21.5 711.9,98.5 662.9,113.5 513.8,44.8 560.9,45 443.3,162 640.6,168.6 802,93.7 428.2,103.1 718.2,112.1 817.7,161.3 491.5,104.3 820.4,76.6 889.2,175.3 316.9,74.2 481.2,147.8 773.5,202.3 324.9,106.3 645.6,60.3 770.3,138.9 400.2,82.8 781.3,127.3 760.9,161.4 499.3,168.8 838.7,115.2 274.6,129.3 404,124.9 654.1,108.2 536.8,165.7 795.4,125.5 364.2,96.8 393.2,100.5 280.1,93.8 522.2,125.2 813,195.3 806.9,69.3 407.3,101.2 725.8,53.2 635,21.9 498.7,163.8 793.6,98 746.7,34.9 719,21.8 658.4,47.6 465.6,129.1 716.2,58.3 451.6,143.5 535.3,48.1 548.8,34.9 785.1,121.5 319.7,111.2 669.1,67.2 733.5,76.3 798.1,96.7 840,218.6 418.1,122.4 790.4,126.2 666.6,119.7 554.7,75.9 602.7,177.8 663,110.7 763.6,82.8 490.7,47.6 660.5,61.6 553.3,27.1 765,108.8 531.9,43.8 298.7,90.8 822.7,76.6 687.6,97.9 895.6,185 660,71.2 834.2,114.1 625.2,108 573.8,173.8 668.9,110.3 490.9,155.8 787,197.9 727.8,59.8 552.1,26.8 786,61.1 474.7,109.3 489.7,147.6 679.7,181.1 777,56.1 489.4,168.9 562.3,79.3 674.4,115.8 641.7,165.4 673.2,172.1 668.8,118.6 333.3,124.2 778.6,106.6 795.7,87.6 457.8,83 653.4,111.4 394.7,114.5 635.4,26.9 834.7,85.9 791.1,62.6 385.3,114.3 782.2,182.1 338,135.6 777.7,159.1 801,90.1 262.3,112.9 503.5,170.3 851.4,146.5 308.4,116.1 558.5,35.4 762,55.7 786.5,108.6 633.5,182.4 314.2,75.8"/>
<polyline fill="none" stroke="none" marker-start="url(#m1)" marker-mid="url(#m1)" marker-end="url(#m1)" points="391.3,100.6 378.4,86.1 346.3,76.1 394.7,91.6 672.2,173.8 756.7,227.9 666,239.3 740.9,322.5 317.3,142.1 891.3,197 466.5,134.5 520.6,154.6 306.6,115.8 293,156.2 701.6,218 655.8,285 617.1,139.4 612.8,150.8 728.7,310.9 755.8,289.5 794.1,174 600.8,175.2 385.3,97.1 246.4,113.8 288.2,152.5 665.2,190.5 372.5,88.4 406.2,125.3 678.2,244.2 467.6,121.8 644.5,213.8 254.9,91.2 301.8,138.3 446.7,127.6 397.1,118.8 312.3,107.3 347.4,102.3 617.1,176.4 492.7,168.7 644.4,267.9 779.1,175.6 641.9,357.5 733.7,237.9 486.9,175.7 662,315.8 243.8,94.2 507.8,164.1 277.5,155 551.7,181.4 511.9,288.5 642.4,219.2 287.4,370.2 299.8,94.6 314.2,131.7 425,132.2 655.9,181.2 487.4,145.5 818.2,169.4 692.6,197.2 785.8,187.7 482.8,142.8 215.2,172.6 487.9,178.2 610.5,179.9 862,219.1 666.8,300.1 805.1,240.2 821.6,138 633,217.8 556.2,342.1 290.3,87 258.6,116.1 678,269.3 731.6,194.5 783.5,159.2 687.5,182.7 748,173.5 657.8,152.4 482.5,218.5 784.2,200.6 843,194.8 675.8,369.8 702.7,245.4 649,172.9 270.1,116.8 774.1,194.8 836.9,145.1 284,106.8 774,266 289.8,94.3 298.7,150.1 713.4,215.3 285.7,115.3 747.5,250.7 488.9,175.9 226.2,98.2 736.7,186.5 809.4,139.8 456.7,146.4 810,222.2 776.3,220.9 387.8,133.2 653.1,202.1 833.4,227.1 759.4,148.1 667.9,232.3 831.5,214.3 374.6,108 806.3,182.6 459.5,172.6 505.1,280.3 756.5,254.2 406.1,85.4 799.1,141.4 596.3,186.5 680.9,192.8 363.7,101.9 892.1,211.8 685.1,198 785.9,161.8 846.5,211.1 262.2,84.7 624,150.5 280.1,361.5 161.1,182.6 291.5,373.7 691.1,377.5 249.8,98.5 891.3,201.3 729.5,298.8 276.3,358 859.1,214.2 299.8,138.4 810.4,236.4 820,134.1 243.8,104.4 636,222.7 526.7,158.5 435.2,146.9 651.1,269.2 645,221.2 735.3,341.8 670.1,259.9 690.8,205.7 732.4,313.7 749.4,160.9 358.6,108 255.5,93.4 660.5,188.7 497.8,171.4 705.7,279.5 383.7,131.4 811.8,203.4 842.5,218 700.3,286.8 405,107.1 553.9,180.4 261.2,133.8 276.7,88.2 833.3,140.8 350.2,80.3 694.2,220.6 749.3,143.8 730.5,308.5 465.5,173.3 696.4,198.3 491.6,159.4 557.3,342 599.3,371.1 458.2,172.8 276,156.8 300.1,128.5 175.5,180.7 778,259.8 816.2,226.8 759.2,135.9 289.7,86.1 337.2,112.8 231.8,100.7 733.2,307 244.9,100.7 516.7,159.1 434.3,101.1 385.2,123.6 831.5,183.2 678.2,181.6 271.9,356.7 705.5,191.6 765.6,155.1 293.3,83.1 233.7,98.2 709,205.5 461.2,185.3 345,130.6 204.4,175.9 734.5,254.6 747.5,227.9 612.1,154.7 630.7,224.5 684.1,191.2 634.2,155.7 858.8,214.2 472.9,157.5 797.3,223.2 603.9,185.7 670.9,298.8 893.2,181.6 732.7,314.1 797.9,201.6 889.3,199.3"/>
<polyline fill="none" stroke="none" marker-start="url(#m2)" marker-mid="url(#m2)" marker-end="url(#m2)" points="689.2,362.9 711.1,217.7 575.9,188.3 590.3,245.5 653.3,245.9 666.3,226.4 613.1,202.8 702.1,304.7 675.9,251.1 550,297.9 611.2,354.8 661.9,245.9 736.8,228 526.1,212.2 660.3,271.1 529.8,226.3 666.5,230.1 643.1,215.4 630,271.7 499.5,193.6 679,218.5 610.5,294.1 765.3,259.2 713.7,289.6 666.1,271.3 544,194 673.8,302.5 688.1,221.6 592.9,361 580.5,220.3 487.8,176.4 538.5,278.7 559.3,318.7 667.6,261.9 697.1,278.3 673.9,251.7 558.6,312.8 562,221 697.4,220.8 627.8,249.9 632.6,386.4 734.2,230.9 635.2,200.4 688.6,226.4 691.4,285.3 716.2,295.3 662.9,303.4 469.1,180.4 745.2,228.2 655.7,393 629.1,215.6 516.6,186.3 714.7,225.2 521.6,181.3 711.8,269.3 701.9,275.7 660.2,276.2 751,224.7 531.8,193.1 675.7,282.6 724.2,253.4 691.1,254 778.1,241.8 619.4,208.2 635.6,266.2 716.9,277.4 593,364.4 524.8,187.3 685.4,221.8 738.5,234.5 652,220.1 725.4,223.6 688.9,251.2 774.5,249.6 675.1,216.3 469.7,176.7 717.5,257.8 626.7,267.8 528,195.7 677.5,389.2 567.4,323.1 671.3,228.1 660.9,290 678.3,210 642.7,289 485.9,251.1 660,254.1 761.8,208.3 652.1,258.1 734.6,230.1 654.3,308.9 726.9,308.9 703.7,262.3 775.4,247.6"/>
<polyline fill="none" stroke="none" marker-start="url(#m3)" marker-mid="url(#m3)" marker-end="url(#m3)" points="498,199.6 521.5,271.8 597.4,265.4 553.3,270.2 581.5,294.7 505.5,224.6 612.3,370.6 623.4,274.6 505.4,214.7 607.5,368 501,194.9 604.4,249.6 579.9,315 610.3,223.4 555.8,255.1 623.2,300.7 570.5,286.1 554.3,274.3 635.8,366.8 601.2,308.6 574.7,294.2 502.9,266.9 576.2,210.3 611.4,292.9 495.4,209 560.3,315.2 499.4,236.5 610.3,291.4 504.5,266 568.5,252.2 658.9,386.3 620.1,256.3 638.5,375.1 605.1,277.4 582.9,329.9 573.9,285.4 614.1,359 637.4,305 551.2,282.8 552.8,281.1 584,257 587.8,217.4 607.5,279.3 545.2,307.3 570.2,287.3 600,291.7 624.6,316.2 588.4,216.2 607.6,202.8 545.8,247.1 617.4,305 558.8,270.7 597.5,279.6 606.5,297.6 578,280.6 619.9,330.4 603.7,230.4 572.4,315.7 617.3,250.5 469,182.8 532.5,212.3 622,270.5 588.6,244.1 585.5,328.2 641.1,320 618.6,310.9 564.5,281.5 526.9,267.5 607.8,339 623.3,302.7 576.5,266.2 562.8,270.7 518.1,277.5 623.1,274.6 526.3,239.4 610.5,228.7 533.6,225.7 487.8,230.6 581.7,206 633.2,334.8 625,286.5 591.7,317.6 544.9,315.5 635.8,329 570.3,318.2 516.4,272.6 543.8,233.1 565.4,243.9 541,263 558.4,331.2 559.4,284.2 610.6,220.1 548.5,241.7 557.3,249.6 651.8,385"/>
<polyline fill="none" stroke="none" marker-start="url(#m0)" marker-mid="url(#m0)" marker-end="url(#m0)" points="644.8,25.6 354.7,99.8 446.1,98.1 681.9,28.2 272.1,156.2 675.2,34.6 457.9,76.9 697.2,100.1 437,146.7 665.5,34.9 606.2,138.8 651.4,27.7 759,51.3 762,124.7 723.6,27.3 671.6,110.3 423.9,99 671.8,56.6 777.2,85.3 776.9,21.4 831.6,118.5 469,115 684.1,108.1 728.2,53.9 658.7,151.5 658.1,39 587.5,169.6 743,141.6 686,25 668.4,121 492.5,115 529.3,123.9 755,175.1 738.7,111.8 668.3,185.3 360.8,129 503.6,36.9 468.3,83.3 771.7,137.5 644.7,51.3 445.7,134.6 710.2,102.6 575,101 734.7,179.1 621.5,22.2 724.2,115.3 509.9,29.3 588.9,130.7 446,132.4 859.1,185.2 316.1,123.5 480.6,113.3 517.6,47.6 248.2,99.7 767.4,102.7 478.3,57.3 430.8,103.2 811.4,156.9 825.6,152.6 805.3,95.5 660.5,149.9 861.1,186.6 668.9,149.7 653.1,107.4 663.5,108.9 737.5,22.2 459,82 677.3,110.2 647.5,109.3 656.6,35.5 749.6,77.9 504.4,127.5 584.9,145.1 769,99.4 569.7,170.5 509,32.1 553.2,117.6 260.6,76 615.3,26.9 905.4,204.5 447.1,140.9 611.5,68.1 609.9,109 819.4,128.6 425.5,100.2 778.2,115.2 783.6,72.2 510.9,153.2 548.3,33.3 621.8,173.3 506.4,105.7 513.3,43.1 824.9,181.9 737.6,40.3 645.5,158.6 814.9,212.5 743.6,144.2 852,170.1 562.8,79.2 546.7,46.4 558.6,155.2 647.9,61.2 616.3,164.9 549.1,33.4 691.1,180.7 273.2,73.1 635.3,109.7 487.5,106.9 785,147.6 804.8,73.7 728.5,61.2 701.1,57.1 724.6,36.6 820.4,152.4 653.7,113.6 401.4,114 842.9,89.8 831.5,82.7 730.1,99.5 834.4,189.2 748.6,79.1 617.2,55 640,63 770,171.9 799.8,93.2 821.9,123.7 324.6,119.7 370.9,77.8 267.2,163.4 719.2,106.7 562.6,34.2 485.2,116.4 803.4,96.1 639.2,34.8 758.3,51.2 766.9,117.8 572.6,103.8 501.4,80.8 641.1,18.1 584.1,147.5 250.6,97.7 349.1,70.7 717,185.1 800.1,66.3 745.8,76.6 753.4,52.7 424.4,100.4 234.7,133 514.1,58.8 388.8,130 665.1,61.1 566.1,129.9 655.9,172.8 470.1,87.7 816.3,73.3 617,52.6 787.6,86 787.6,89.4 665.2,125.1 655.5,46.3 652.9,65.8 669.2,179.9 805.8,68 472.4,87.3 478.4,75.3 475.2,57.9 785.4,87.3 797.8,206.9 715.2,76 248.2,165.2 613.1,31.5 671.3,163.8 718.4,62.9 604.6,65.1 256.4,114.9 509.8,154.3 494.1,151.9 797.1,90 301.7,153.8 668,194.6 652.5,35.2 760.1,67.5 590.4,133 294,154.1 734.8,82.9 757.1,119.5 608.8,178.5 619.8,109.2 763.6,148 356.5,124.6 811.7,174.7 693.8,28 375.1,132.9 694.4,32.9 653.6,110.7 859.3,211.1 709.8,91.9 569.4,43.3 728.5,18.3 570.8,45.3 814.9,126.3 793.3,89.8 600.1,106.6 354.3,100.9 799.9,200.6 582,40.4 632.1,38.7 754,147.1 841.6,170.9 477.4,95.6"/>
<polyline fill="none" stroke="none" marker-start="url(#m1)" marker-mid="url(#m1)" marker-end="url(#m1)" points="662.2,195.4 850.7,190 197.6,178.1 676.9,362.5 304.8,73.7 278.2,361 729.6,269 285,157.3 718,233 243.6,122.7 290.9,124.8 737.4,323.5 856.9,212.7 525.7,162.3 234.2,83.7 733.4,342.7 740.1,219.7 586,355 307.1,119.8 398.4,95.3 703.9,366.7 665.6,305.4 728.7,262 645.9,218.7 756.8,211 729.7,260.4 606.2,377 289.4,152.4 344.5,121.3 679.4,300.9 295.5,80.3 260.6,84.9 188.4,179.3 588.3,142.6 269.1,357.5 459.3,155.9 839.3,144.5 775.8,194.9 660,195.1 821.3,169.3 660.6,212.9 669.7,235.1 271.5,118.5 687.4,260.5 199.3,178.4 329,122.5 480.4,140.5 683.8,382.2 652.7,228.2 695.3,245.6 716.3,288.4 284.7,109.4 789.2,148.5 304.9,96.1 564.4,170.7 447.8,175.5 172.3,181.3 647.8,213.4 798.8,174.6 328.9,76.5 730.9,262.4 614,382.9 345.3,80 472.9,148.8 817.2,168.4 311.5,123.2 362.6,124.4 495.5,160.2 841.3,211 228.6,170.3 437.8,128.3 817.8,164.9 421.3,86.5 791.8,228.6 491.1,169.7 829.6,173.1 761.7,204.4 423.3,91.4 335.4,91.2 652.5,189.1 664.8,397.5 701.1,191 810.4,138.5 468.7,112.2 400,112.8 278.3,159.5 389,77.5 442.5,146.9 621.1,190 451.8,142.8 680,206.9 273.6,358 249.2,119.3 569.3,348.9 672.1,251.5 304.2,149.1 277.6,157.8 287.5,115.4 569.2,170.6 377,115.7 610,377.9 558,171 482.6,139.5 788,209.9 697.3,367 156.7,182.8 809.8,151.5 233.2,133.1 397.1,78 663.7,158.8 636.5,246.6 701.7,190.9 614.5,183.4 874.5,191.9 252.1,101.1 685.9,372.9 804.9,241.6 323.3,133.7 740,336.3 819.1,157.7 752.9,152.1 644.9,217.4 508.8,173.4 734.2,246.6 475.8,152.5 746.8,284.4 568.7,126.1 500,175 252.7,164.4 686.7,180.6 499.9,164.8 191.2,178.3 340.4,116.4 330.1,135.8 555.5,186.3 186.4,178.9 289.2,108.1 282.5,117.1 833,222 500.5,150.9 389.6,102.8 483.5,209.8 515.1,163.4 349.8,71.7 332,76.1 349.1,134.4 577.4,148.7 292.7,98.9 664.8,252.7 263.4,135.6 687.8,239.8 771.7,240.3 405.4,84.3 303.4,78.7 800,215.7 413.6,143.4 264.7,358.8 661.4,235.2 802.2,144.9 398.1,103.6 470.9,169.8 665.2,147.9 249.5,106.1 540.1,180 843,196.4 386.6,126 264.9,91.9 394.2,89.4 435.5,161.7 661.4,178.7 872.8,205 732.1,203.2 630.4,199.9 734.1,314.2 466.5,132.5 747,231.4 187.6,178.3 482.6,229.3 763.7,201.8 336.8,133.2 751.1,215.3 837.5,167.1 445.5,132 587.2,158.4 520.9,167.1 279.6,162.2 448.7,136.1 794.6,216 693.3,202.3 323.7,120.9 474.1,97.2 250,96.1 432.7,78.4 494.1,162.3 336.1,133.2 460.5,129.3 840.2,221.6 449.3,75.2 235.1,122.7 290.4,151.1 448,149.4"/>
<polyline fill="none" stroke="none" marker-start="url(#m2)" marker-mid="url(#m2)" marker-end="url(#m2)" points="491.9,179.2 671.2,272.4 663.3,291.3 524.3,225 708.1,242.9 686.5,216.2 647.7,392.2 735.8,311.8 483.6,196.7 680.1,380 773.2,221.1 640.5,274.8 628.6,279.7 644.7,321.3 734.1,329.9 696.5,230 681.7,309 654.6,219.4 521.3,222 688.3,301 653.7,307.5 617,204.7 503.1,234.3 498.4,264.7 747.3,241.7 545.6,193.6 612.3,296.1 696.9,235.6 705.1,243.1 633,219.3 657.6,287.3 637.2,244 672.9,230.7 726.6,284.7 767.5,271.7 567.8,207.9 503.8,212.2 621.2,212.1 613.5,206.7 754.4,259.5 686.2,230.3 748.8,262.8 512.2,283.5 565.3,190.7 661.6,234.2 600.1,201 729,255.9 661.4,312.4 687.1,268.5 687.9,223 757.8,275.4 629.8,224.9 664,239.7 777.6,246.8 615.3,305.9 622.7,199.3 699.5,299.7 466.7,184.6 669.8,247.6 632.8,274.8 691,276.2 552.5,201.1 583.6,283.1 652.6,252.3 733.4,300.8 707.4,238.9 606.8,313.1 734.1,314 621.5,251.7 521,284.8 624.1,214.8 732.8,267.2 524.6,291.4 775.4,225.1 651.2,311.3 477.3,192.9 599.7,247.5 559.5,341.5 609.4,205.9 632.1,268 659.9,221.2 764.4,240.3 501.2,185.4 715.3,224.8 581.2,260.5 731.9,243.9 645.7,279.5 540.9,257 643.9,251.9 638.5,266.8 654.2,309.3 545.2,225.5 558.3,256.6"/>
<polyline fill="none" stroke="none" marker-start="url(#m3)" marker-mid="url(#m3)" marker-end="url(#m3)" points="619.5,260 607.1,213.7 614.9,291.2 517.4,241.8 624.3,355.5 492,219.9 490.4,212.4 611.9,275.5 580.9,252.6 518,195.1 554.7,327.8 557.8,296.8 510.4,270.4 491.2,228.6 597.1,328.9 526,211.4 559.5,269 519.7,281 646.8,380.7 610.3,219.6 547.7,217.5 554.3,300.5 632.1,353.8 555.9,311 616.7,257.5 515,224.7 557.9,291.6 599.9,307 577.5,243.9 614.9,336.4 634.5,378.4 618.1,347.3 652.9,390.2 492.9,241.7 578.3,322.6 527.3,204.2 582.7,239.2 620.6,360.4 597.5,212.6 527,230.1 574.3,250.9 527.6,248.3 560.1,311.6 520.6,238.4 494,213.6 515.9,201.5 503.7,247.4 489.2,213.6 613.2,351.3 562.7,272.6 550.5,244.5 655.3,387.2 599.5,304.1 588.4,207.3 592.2,278.7 547.7,227.4 620,346.2 618.4,300.5 600.1,224.1 575.9,306.2 575.8,197.4 508.4,211.4 561.1,217.9 552.6,278.8 559.5,206.8 609.1,233.7 584.6,224.9 535.5,200.4 554.4,280.3 549.7,269.4 587.9,250 571.4,277.3 621.8,376.1 536.2,298.3 635.5,326 571.2,297.4 626.2,284.5 600.3,270.7 540.9,230.5 561.9,251.8 615.1,238.4 520.5,263 529.9,212 610.7,238 634.1,336.6 487.3,226.7 536.6,285.3 546.6,274.5 626.5,367.6 581.9,286.3 601.4,234.5 601.9,310.1 541.6,297.8 584,236.6 559.8,333.5 600.1,331.5"/>
<polyline fill="none" stroke="none" marker-start="url(#m0)" marker-mid="url(#m0)" marker-end="url(#m0)" points="305.7,125.8 760.4,55.8 619.5,38.6 724.4,81.5 866.6,207.6 343.2,75.3 659.8,54.4 715.6,97.2 565,129.1 624.8,109.1 705.7,61 321.1,134.6 505,163.9 673.9,36 541.8,73.1 809,203.8 536,100.4 620.9,71.9 523.6,32.3 637.1,179 657.4,24.2 297.5,91.5 698.8,24 636.7,115.7 664.4,114.9 687.8,103 293.9,153.3 773.2,139.2 317.5,80.1 853.2,145 633.9,53.8 725.4,189.5 289,110.4 736,90.7 561.8,89.8 423,140.5 646,111.7 713.3,66.1 478.8,47.5 776.2,138.6 851,93.8 615.3,104.2 261.9,84.7 728.6,54.2 646.7,39 602.3,44.3 829.5,85.4 771.3,150.9 609.6,133.9 844.4,92.8 488.7,159.1 765.6,52.3 329.7,76.1 653.9,51.1 675.9,34.1 643.7,167.3 800.1,93.2 769.9,80.4 566.8,51 696.2,52.1 504,83.9 538.9,45.7 623.4,18.7 404.4,113.7 348.1,70.7 481.6,53.1 728.4,68.6 591.1,42.4 390.2,130.2 658.6,112.6 533.7,50.3 592,133.9 526.7,123.5 362.8,80.8 659.1,149.1 833.6,228.7 438.4,176.6 301,152.7 603.5,118.4 788.7,137.3 662.2,151.5 822.9,214.9 547.2,36.6 515,33.8 333.2,91.7 841.5,91.7 395.6,99.1 793.8,61.1 628.5,18.8 754.8,78.2 784.4,175.9 691.5,54.7 626.2,118.4 652.2,82.5 728.7,97 754.5,34.2 559.8,43.8 273.8,119 540.7,93.4 286.6,139.1 797.4,117.4 623,109.8 324,112.5 564.2,22.5 573.9,168.6 608.7,110.8 479.7,57.5 355.1,123.5 723.8,74.5 465.5,145.7 501.4,158.1 757.6,163.1 813.4,153.4 400,82.3 635.8,170.1 635.2,116.2 493.3,40.6 739.9,110.6 760.8,52.9 751.4,178.5 709,62 835.9,87 735.5,24.3 777.3,65.9 667,152.8 705,98.8 786.2,109.2 604.8,119 447.4,86.8 404.3,78.7 757.3,163 662,59 352.3,119.8 688.5,36 571.5,133.7 506,43.9 654.6,43 588.5,42 350.9,98.4 820.6,168.2 266.2,100.3 563,127.7 792,64.4 670.4,161.5 759.4,53.9 445.8,127.8 632.1,186.4 517,108.1 722,71.7 644.5,107 853.7,173.9 251.8,165.4 666.4,116 246.8,125.3 236.5,168.4 336,72 315.2,129.2 755,124.7 572.4,161.3 482.9,108.7 552,176.4 739.9,18.1 432.4,155.6 764.9,107.6 326.9,107.1 328.2,94.2 520,38.5 368,94.6 464.2,127 521.2,46.3 700.6,101.1 792,177 614,105.2 435.7,99.8 561.7,38.8 732.6,53.3 387,129.7 806.6,118 371.7,108.4 721.3,79.5 761,27.7 468.8,156.2 629.5,30.8 504.8,33.5 508.8,50.2 647.8,47.9 631.9,19.8 731.7,20.3 713.1,62.1 359.5,111.6 561.2,125.4 785.6,148 440.5,161.7 512.7,119.3 617.3,70.2 478.6,116.1 656.9,172.9 649.2,112.6 715.5,59.1 260.7,122.7 886.9,198.2 604.8,130.6 724.2,93 624,119.1 710.7,53.1"/>
<polyline fill="none" stroke="none" marker-start="url(#m1)" marker-mid="url(#m1)" marker-end="url(#m1)" points="726.5,309.2 576,175.9 668.8,271.5 603.1,132.5 820.7,178.9 277.8,157 282.9,91 715.7,232.8 667.9,213.1 432.5,161.7 677.3,365 241.8,166.2 467.2,175.1 775.8,154.3 183,179.4 277.3,361.2 567.4,169.4 783.4,235.6 315.1,110.9 212.9,173.7 428.9,118.6 850.3,176 480.5,169.6 237.6,125.9 191.5,180.9 500.8,165.8 550.8,182.3 678.8,391.5 521.2,178.3 804.1,146.3 679.1,193.5 666.2,264.8 730,252.9 764,206.3 246.6,102.2 707.4,259.1 728.4,194.2 589.3,130.6 336.5,115.6 338.9,76.4 277.7,356.1 671.2,224.3 298.9,117.5 752.9,170.6 560.7,183.7 725.2,240.6 436.1,142.3 254.6,107.3 285.5,160.6 177.3,179.9 587.3,136.6 359.3,103.8 820.6,228 702,361.7 813.7,192.1 400.6,95.3 622.7,190.5 689.9,212.9 282.5,159.4 176.5,180.8 387.5,134 361.8,90.3 413.4,130.7 284.2,154.8 520.6,171.9 640.8,334.4 378.9,100.7 328.1,93.1 297,372.1 889.4,200 481.2,239.5 714.3,186.4 807.9,205.5 463.5,175.3 840.2,203.1 686.1,301.6 345,119.5 187.6,178.8 756.8,197.2 255.8,99.9 668.7,253.7 731.3,284.2 804,202.1 852.5,223.8 462.7,185.6 305.9,75.7 709.2,262.4 493.3,148 443.3,159.8 693.2,253.8 292.7,371.1 742.5,180.5 299.5,145.6 224.5,171.8 731.9,257.1 158.9,182.6 661.4,218.8 601.7,164.8 277.9,108.9 692.5,369.7 257.3,100.8 643.8,262.3 241.8,125.5 230.7,124.7 750,202.8 458,156.5 747.5,207.7 657.9,248 162.9,181.4 821.3,170 733.9,212.8 489.5,151.1 688.3,380.6 781.9,154.2 833.6,169.7 245,166.1 556.9,179.6 593.3,177.5 427.9,75.5 274.7,360.6 548.5,183 289.4,367 751.9,201.2 783.5,198.7 267.6,80.9 322.9,132.3 777.2,153.3 832.9,146.5 249.8,90.3 724.4,268.7 615.6,166 808.4,173.6 352.8,89.1 405.7,135.6 676,281.8 715.1,198.5 772.6,161.7 707.5,281.8 607.7,199.1 385.2,111.4 335.5,92.2 661.9,240.4 265.1,359.1 759.3,203.3 349.7,132.5 333.6,110.9 358.5,118.7 756.3,205 768.7,225 295.7,91.9 713.1,240.2 294.1,372.5 761.7,264.2 789.3,179.3 243,93 426.9,159.8 622.3,145.9 656.1,267 404.8,83.6 295.4,155.5 394.8,106.8 669.3,300.4 826.9,226 388.3,76 741.4,186.9 486.1,133.8 750.1,243 336.9,99.6 844.9,172.1 737.3,308.7 736.6,240 823.5,224.9 349.3,80.6 665,378.9 791.4,171.9 171.1,179.8 704.8,229.2 299.2,139.1 720.2,277.9 893.7,193.2 479.4,143.6 309.3,152.3 767,275.4 678.3,179.4 433.9,109.4 575.7,148.4 332.5,103.7 866.1,207.6 525.3,176.6 488.2,127 655.6,393.8 267.6,116.1 481.9,174.2 752.3,150.1 427.9,151.1 204.1,175.9 273.8,116.5 844.6,220.4 457.6,145.4 830.9,195.4 308.3,112.2 278.2,360.2 659.3,306.2 256.9,79.7 308.7,108.4 254.4,87.3 366.7,86.1 382,74.3 669.1,183.4 581.6,167.5 233.7,167.8 241,126.4 400.8,88.6 798.7,215.9 647.2,221.1 502.6,149.9 468.1,129.6 155.5,184.5"/>
<polyline fill="none" stroke="none" marker-start="url(#m2)" marker-mid="url(#m2)" marker-end="url(#m2)" points="693.7,224.6 727.7,247.4 625.5,290.8 562.9,299.4 657.1,277.2 659.9,275.4 767.9,224.6 644.4,253.8 685.1,231.6 665.4,243.5 768.4,249.6 764.7,217.1 468.9,187 552.7,224.7 482,175.1 717.6,211.5 619.9,380.9 727.6,249.8 635.2,277.8 515,284.1 516.4,271.7 489.2,175.8 691.2,272 633.4,266.4 618,235.3 498.2,266.6 773.9,223.6 513.3,188 526.6,234.9 745.5,278.8 623.4,216.2 511.8,220.5 488.1,250.1 668.7,250.3 487,177.5 637.3,267.4 722.4,270.5 464.6,176.9 612.4,374.6 757.6,244.3 628.5,215.5 659.5,303.7 754.6,227.1 673.9,230.2 729.8,242.7 658.8,257.1 472.3,181.2 527.6,222.8 583.8,342.9 460.7,178.7 689.5,289.8 503.6,249.6 621.2,338.1 721.7,271.2 487,219.5 676.2,296.9 625.5,221.7 488.1,241.7 634,257.2 626.3,271.6 619.7,278.2 691.7,252.8 720.6,305.4 729.9,223.2 669.8,295.4 631.1,268 578.5,201.5 582.7,307.6 525.7,187.7 618.4,225.7 653.8,256.2 644,245.3 784.4,216.9 662.2,261.4 681.6,268.3 520.1,187 776.5,244.1 692.4,367.9 742.9,233.1 628.7,261.5 483.9,182.2 624.9,251.2 484.3,178 647.2,203 756.5,287.3 542.8,192.9 653.4,279.7 751.4,216.5 628,213.8 718.2,226.9 665.2,274.2 633.1,239.8 454.6,177.8 535,197.4"/>
<polyline fill="none" stroke="none" marker-start="url(#m3)" marker-mid="url(#m3)" marker-end="url(#m3)" points="514.5,230 597.5,205.8 623.5,300.1 637.8,369.2 541.9,229.9 577.2,302.1 590.2,259 569.1,247.7 593.7,297 595,209.8 583.1,328 581.4,243 615.7,337.8 616.7,326.1 600.8,280.2 550.8,262.2 539.1,310.5 607.1,290 523.1,222 513.4,251 556.1,311 633.9,334.7 573.8,291.5 618.1,344.3 608.3,219.2 607.3,239.4 610.4,320.9 497.1,258.4 561.1,305.6 612.4,232.2 517.4,233.4 512.8,232 544.8,249.2 582.5,232 611.1,239.5 496.9,257.4 565.2,325.8 560,280.6 588,262.6 507,220 641.3,374.5 536.1,231.8 525.4,211.5 549.9,295.1 514.9,221.3 623.3,313.1 565.7,287.9 506.8,231.7 504.1,203.4 543.9,238.3 589.8,262.8 613.1,233.7 631.5,331.5 516,218.6 564.9,236.2 570.7,332.8 622,247.1 621.1,278 628.6,353 525.4,255.7 516.8,224.8 661.7,386.7 597.3,236 560.1,306.4 568.3,302.9 538.4,235.4 599.9,271.9 518.5,254.5 527.8,253.4 502.3,210.6 594.8,287.1 645.1,378.9 606.3,233.5 628.5,316.4 499.7,229.9 589.1,235 557.9,324.3 572,215.8 493.2,223.8 620.7,314.1 616.4,274.9 510.9,219.2 592.1,343.6"/>
<polyline fill="none" stroke="none" marker-start="url(#m0)" marker-mid="url(#m0)" marker-end="url(#m0)" points="383.9,97.1 554.3,29.7 334.2,112.6 717.1,22.2 713.7,59.9 619.3,186.5 249,74.4 767.5,140.3 754.2,30 461.1,99.4 309.3,92.9 810.5,69.6 673.6,108.9 758.1,51.3 711.1,56.6 474.4,103.6 278.4,128.1 732,42.4 744.7,76.4 670.4,80.2 824.1,135.6 662.7,29.7 596.3,142.2 328,87.9 667.6,39.6 813.1,154.2 756.1,32.7 781.2,88 519.9,29.8 798.1,69.2 674.1,34 452.9,155.5 586.1,112.6 278.2,126.9 562.3,26.2 470.7,105.5 512.6,46.7 563.4,46.4 769.4,102.7 459.3,141.5 604.2,144.7 736,41.4 576.1,84.2 559.5,51.7 528.1,45.8 750.6,77.8 663.6,111.4 264.7,111.9 713.8,93.6 620.2,107 885.6,207.1 436.3,73.3 423.8,145.8 576.5,55.8 826.4,111 731.2,49.8 720.8,40 733.8,48.4 358,111.8 836.3,137.8 644.4,49.6 460.7,90.3 482.4,84.3 486.1,117.5 658.5,21.2 349.5,89.6 672.9,116.5 807.2,144.1 661.6,108.6 376.7,107.4 823.2,191.6 825.8,170.8 419.4,132.1 318.8,75.6 361,117.9 625.8,32.9 536.3,37.3 814.3,138.4 453.4,115.1 464.7,86.3 606.1,110.6 222.7,172.5 311.5,127.1 612.2,104.6 783.3,168.7 513.4,119.7 784.8,117 427.8,149.5 840.8,216.7 565,157 482.9,90.9 368.7,117.6 649.3,82.2 306.9,137.8 538.1,41.3 787,142 827.7,93.9 649.3,31.2 606.1,105.9 330.7,107.3 640.7,107.5 277.8,141.9 627.6,189 837.2,90.2 671.2,118.4 780.7,172.9 275.4,82.3 465.3,151.6 450.8,134.4 699.5,90.8 752.6,151.2 756.9,106.5 654.1,36 599.9,19.3 825.6,114.4 612.3,68.4 613.1,104.4 794.3,92.8 761.6,142.2 716.1,67.9 685.5,183.1 507.8,50 682.1,112.5 770.5,54.1 591.7,163.6 746.8,55.6 381,75.8 745.7,189.4 831.6,84.8 670,176.2 734.3,75.4 508.3,42.1 802.3,119.5 642,83 516.3,61.8 788.7,208.1 710.2,50.3 741.6,36.7 727.7,54 450.8,130.3 284.1,85.7 802.6,146.1 820.4,80.8 748.4,61.8 773.2,22.4 250.5,165 336.1,87.6 840.7,132.8 609.4,167.8 700.4,22.1 730.7,30.3 729.4,75.3 282.8,142.7 672.5,17.6 723.9,50.7 613.9,128.7 314.8,90.9 726.7,112.3 779.4,21.3 706,83.7 282.7,78 796.1,63.6 798.6,69.8 644.2,80.3 812.8,213 458.6,141.7 507.5,33.4 819.1,71.7 519,51.4 673.8,18.2 493.1,149.7 896.1,204.2 773.3,188.6 633.4,35.7 452.5,162.8 694,33.8 809.2,69.2 598.7,68.4 620.3,173 810.1,67.9 666.9,147.6 312.7,104.1 686.3,192.3 817,95.6 393.1,121.8 335.6,116.5 787.9,89.7 247.7,107.2 308.9,98.4 268.8,85.8 332.3,71.1 598.5,30.2 797.4,67.8 313.1,92.4 245.6,118.8 778.3,82.7 305.3,115.8 597.2,21.5 700.7,47 653.1,31.1 616.9,145.8 499.4,167.1 583,58.2 636.2,157.6 824.5,94 737.3,35.6 379.3,91.5"/>
<polyline fill="none" stroke="none" marker-start="url(#m1)" marker-mid="url(#m1)" marker-end="url(#m1)" points="540.9,167 755.7,176.7 309.4,96.5 502.8,169.9 636.4,171.7 433.6,138.6 680.3,391.6 581.7,171.5 319.7,76.6 521.9,153.7 298.8,152.7 458.3,137.2 289.9,369 480.2,113.8 647.3,182.8 319.6,108.1 686.4,196.2 355.5,127.3 757.9,187.5 368.4,87 560.5,345.7 620.7,188.4 320.5,130.8 474.8,144.8 289.2,142.5 847.1,140 402.8,106.8 238.4,169.1 816.9,169 279.9,365 453.6,177.4 823.6,222.1 733.6,236 307.6,99.7 480.8,150 664.5,262.8 362.4,92.9 682,192.5 275.6,359.9 448.8,169.6 267.5,76.3 729.6,294.6 278.2,363 369.3,99.2 658.9,156.3 796.6,247 695.3,307.7 863.6,190.9 464.1,150.9 471.5,117.9 739.5,179.3 254,94.3 713.8,227 474.4,115.6 749.5,222.8 552.7,187.8 288.5,83.4 620.9,149.2 661.7,379.7 665.6,162.8 423.6,111.4 447.2,90.7 762,252.3 815.5,168.2 781.6,140 564.1,176.9 744.8,270.6 461,156 698.8,264 474.6,153.8 890.6,185.5 729.6,297.2 181.9,178.8 725.9,207.7 828.2,169.2 761.9,140.9 282.1,100.9 859.7,187.1 635.5,162.9 895.1,206.4 816,223 387,130.3 616.5,160.1 818.3,136.5 474.2,174.4 671.4,190.2 676.5,374.5 242.4,89.3 651.3,144.9 795.6,137.5 644.1,218.9 393.4,128.2 676.5,244.5 661.4,280.1 707.5,198 787,146.1 729.5,188.6 707.6,303.8 468.2,107.6 704.7,363.7 294.6,375.3 396.3,122.9 491.9,262.2 804.1,209 177.3,180.7 594.6,148.7 698.8,195.7 436.2,169.6 523.2,169.7 416.2,84.1 481.2,107.1 261.4,102.2 753.8,198.8 480.6,231.6 480.8,232.2 402.3,127.5 403,126.4 403.4,93 572.6,183.3 332.4,72.8 687.2,281.8 844.5,217.2 260.9,163.2 379.8,115.7 848.7,220.9 781.1,190.2 267.5,361.7 560.7,177.3 658.1,196 586.2,189.2 343.4,91.2 698.6,191 470.1,164.5 795,225 157.3,183.1 690.1,284.2 229.2,168.8 337.8,112.6 720.2,246 576.3,150.7 593.7,175.6 397.6,82.6 187.5,178.4 388.4,92.1 803.8,240.9 620.8,190.2 444.9,111.2 833,195.3 327.4,136.3 510,162.8 597.2,135 443.2,117.6 273.4,72.7 585.5,185.6 663.9,283.2 353.9,116.4 557.4,344.5 643,212.4 810.7,210.5 536.8,175.5 437.7,126.5 287.2,134.5 271.4,156.3 369.5,108.3 311.4,138.5 746.6,147.5 808.2,220.3 639,390.6 610,177.3 261.6,87.5 520.8,180.8 334.8,98 462.7,113.1 302,93.3 593.3,179.4 813.1,155.4 433.8,88.5 542.8,166.8 671.9,311.9 617,383.6 743.5,326.4 234.3,112.6 408.5,133.4 824.3,184.3 258.4,121.8 745.3,236.3 570.4,135.2 511.4,163.3 580.6,173.7 826.7,219.7 695.2,299.8 183.5,178.7 552.7,175.3 707.6,262.3 470.8,150.1 463,126.6"/>
<polyline fill="none" stroke="none" marker-start="url(#m2)" marker-mid="url(#m2)" marker-end="url(#m2)" points="731.2,262.9 702.7,256.4 583.1,309.2 676.6,199.2 688.3,252.8 717.6,261.1 756.4,269.3 579.3,333.1 638,253.4 713.2,233.3 652.9,294.8 673.7,265 549.2,184.6 678.6,233 646.6,291.8 737.4,259.7 698,225.5 623.4,305.9 740.8,245.6 694.8,229.9 671.5,227.4 752.8,219.4 524.4,190.9 710.1,258.8 523.2,271.9 741,227.8 523,258 641.3,279 464.5,177.3 636.9,389.2 629.2,199.7 687.6,289.3 698.7,265.5 730.1,277.4 657,212.4 661.3,236.2 732.6,299.5 522.9,288.1 573.6,254.5 640.1,319.4 462.3,178.6 705.1,303.7 673.9,381.3 726.8,235 554.1,330.5 561.1,338.5 711.3,304.5 508.5,242.5 696.8,283.2 633.9,285.7 613.4,202.6 527.7,290.8 509.5,183.5 723.2,279.1 648.9,201.2 644.3,248.1 690.2,264.1 698.6,238.7 608.2,204.2 609.9,363.2 632.8,199.1 645.5,292.2 659.3,211.4 716.6,283.6 535.6,221.5 641.2,365.3 488.7,253 618.3,248.2 567.1,202.1 641.3,218 672.3,255.4 659.2,302.4 737.3,221.1 494.3,232.2 556.1,203.3 775.4,249.1 567.6,235.9 779.3,226.5 752.9,233.7 733.3,233.1 538.5,319.9 525.1,241.3 731.4,314.1 584.1,317.6 739,205 591.4,197.2 637.8,305.9 616.1,339.3 600.7,264.3 653.2,231.2 677,295.7 596.9,320.3 709.9,221.5 487.7,252.9"/>
<polyline fill="none" stroke="none" marker-start="url(#m3)" marker-mid="url(#m3)" marker-end="url(#m3)" points="608.6,318.5 584.2,325.1 616.6,299.7 523.8,215.1 569.6,269.2 576,198.7 631.5,314.5 544.5,202.1 558.7,300.8 563.1,216.3 603.2,343.6 599.3,265.3 564.6,343.9 494.7,241.7 578.6,270.6 493.2,210.6 634.8,367.1 632.5,323.4 574.1,275 503.2,263.5 584.3,200.6 558.1,286.7 559,208.9 509.5,205.1 564.7,246.4 566.3,223.9 563.8,226.5 507.7,246.5 505,206.1 541,311.9 573.8,275.5 584.8,221.4 564.7,277.1 620.4,340 624.2,284.8 635.3,294.7 521.5,201.3 597.9,293.6 546.3,219.5 548.7,228.8 622.5,377.1 547.1,311.7 528.8,212.6 619.2,257 576.6,218.7 615.6,348.1 551.7,232.5 606,257.5 568.8,299 657.2,383.5 580.5,246.1 593.6,261.6 636.4,366.8 624.7,377.9 567.6,281.4 532.7,277.6 552.2,211 561.5,282.2 575.7,327.6 633.3,343.8 557.1,320.3 490.1,214.7 507.6,190.8 651.7,383.4 532,244.7 519.3,265 527.8,287.4 551.9,209.7 598.5,312.9 524.4,253 622.2,374 504.8,226.2 537.7,221.4 559.4,263.3 544.4,284 614.7,345.2 635.5,311.1 623.7,375.6 581.2,218.9 570.3,340.1 543.3,319.1 559.7,303.5 571.1,200.7 581.6,262.9 529.5,195.4 595.3,228.5 620.1,320.8 541.6,252.1 550.5,268.9 522.5,284.2 569.6,335.1 585.4,245.3 516.1,260.3 587.9,210.7 630.9,300.6 627.1,378.2 510.2,254.7 579.1,243.4 603.1,324.4 569,212 591.4,241.9 624.7,299 555.6,237"/>
<polyline fill="none" stroke="none" marker-start="url(#m0)" marker-mid="url(#m0)" marker-end="url(#m0)" points="689.8,177.6 655.1,143.9 847.5,143.9 820.2,78.3 835.2,92.2 829.1,80.8 772.8,56 622.5,119 496.8,128.2 820,120.6 320.2,130.8 692.8,52 825,93.1 778.7,113.3 557.3,20.3 384.6,97.6 325.3,80.4 616.2,132.8 520.6,54.6 692.5,23.6 826,155.8 658.4,39.9 711.9,109.1 651.9,188.3 667.9,78.4 433.3,160.7 816.1,209.3 709.4,60.9 801.8,65.4 726,114.3 652.3,177 647.6,63.8 538,165.9 781.9,83.6 333,106.8 536.2,40.9 573.7,56.1 725.6,74 363,105.6 658.4,125.6 656.2,61.1 242.1,87.5 521.7,58.4 831.9,87.5 666.7,122.7 712.6,62.6 542.1,52 839.9,87.8 366.9,95.5"/>
<polyline fill="none" stroke="none" marker-start="url(#m1)" marker-mid="url(#m1)" marker-end="url(#m1)" points="474.8,118.5 678.1,194.7 784.7,163.4 359.8,100.2 642.1,247.3 683.3,384.4 286.2,114.1 772.3,138 688.6,213.5 331.8,87 417.7,141.6 640.3,345.2 788.5,247.6 741.9,186.9 743.8,298.3 361.2,80.7 324.6,130.2 720.1,236.6 724.6,191.2 195.4,177.9 553.4,172.8 467.7,122.9 453.4,169.3 683.8,261 443,140.5 275.6,133.8 644.2,249.3 650.5,270.5 686.4,313.4 459.7,102.9 652.2,376.7 773.6,188.4 293.9,142.6 565.7,166.4 563.6,163.1 468.7,191.8 304.5,133.4 184.7,179.7 654.4,180.9 343.7,133.6 466.3,100.9 693.3,311"/>
<polyline fill="none" stroke="none" marker-start="url(#m2)" marker-mid="url(#m2)" marker-end="url(#m2)" points="712.3,218.4 617.7,277.7 572.4,316 631.7,257.6 546.7,228.3 567.9,345.6 632.7,329.9 606.7,230.1 740.9,263.8 740.1,219.2 523.3,187.3 554.1,194.2 782.4,227.6 596.7,247.7 467.8,180.1"/>
<polyline fill="none" stroke="none" marker-start="url(#m3)" marker-mid="url(#m3)" marker-end="url(#m3)" points="635.7,322.6 500.7,264.9 610.5,248.5 616.1,321.3 588.6,225 624.8,324 544.3,292.5 594.6,200.9 529.7,255.5 594.3,296.9 558.8,315.9 549.3,237.7 571.2,309.6 585.9,239.5 537.2,269.2 580.8,258.4"/>
<polyline fill="none" stroke="none" marker-start="url(#m0)" marker-mid="url(#m0)" marker-end="url(#m0)" points="200,109 205,112 210,110 215,113 207,115 199,113 191,128 195,131 207,148 212,152 497,45 497,56 579,51 593,52 588,58 569,57 575,56 581,53.5 558,59 580,69 680,146 681.5,154 693,151 701,156 691.5,162 707,163 715,159 722,159 717.6,165 731.6,161 685,168 497.4,109.6 509.6,107.8 523.5,108.7 511,119 509.6,134 495.7,136.5 503.5,146 520,131 521.7,141 535,103.5 548.7,94.6 610,91.7 517,316 532,340.5 538,380 555,375.5 561.6,373.4 560.3,378.6 722,344 727,346 732,347 874,149 159.7,319.7 161.8,323 174.2,323.6 185.9,334.5 194.7,338.9 198.8,335.8 205.9,338.1 222,340.7 222,345.9 228.6,345.1 231.8,347.9 241.1,348.7 257,351.8 214,389"/>
</svg>
</div>
<div id="sep"></div>
<div id="panel">
<div id="title"><span style="left:5.6px;letter-spacing:0.6px">NA</span><span style="left:24.8px;font-size:13.5px">—</span><span style="left:40.4px">Features</span><span style="left:87.8px">Total:</span><span style="left:119.5px"><i>349728</i>,</span><span style="left:161.5px">Filtered: <i>349728</i>, Selected: <i>0</i></span></div>
<svg class="abs" style="left:1098px;top:10px" width="28" height="12" viewBox="0 0 28 12"><rect x="0.5" y="0.5" width="10" height="10" rx="2" fill="#f4f4f4" stroke="#555"/><rect x="4.5" y="2.5" width="4" height="4" fill="none" stroke="#555"/><rect x="2.5" y="4.5" width="4" height="4" fill="#f4f4f4" stroke="#555"/><rect x="14.5" y="0.5" width="10" height="10" rx="2" fill="#f4f4f4" stroke="#555"/><path d="M17 3l5 5M22 3l-5 5" stroke="#333" stroke-width="2"/></svg>
<svg class="abs" style="left:0;top:28px" width="660" height="24" viewBox="16 447 660 24"><g transform="translate(23.5 451.5)"><path d="M9.2 0.5L12.6 1.8L5.2 12.8L2.2 11.4z" fill="#e6d640" stroke="#a89c20" stroke-width="0.6"/><path d="M9.2 0.5L12.6 1.8L11.8 3L8.5 1.7z" fill="#d9d2a0"/><path d="M2.2 11.4L5.2 12.8L1.6 15.6z" fill="#b0b0b0"/><path d="M1.6 15.6L2 13.6L3.2 14.3z" fill="#555"/><path d="M7 4.5L4 10.5" stroke="#f6ef9a" stroke-width="0.9"/></g><g transform="translate(48.0 451.5)"><rect x="1" y="0.5" width="14" height="4" rx="1" fill="#dcdcd2"/><rect x="1" y="5.5" width="14" height="4" rx="1" fill="#dcdcd2"/><rect x="1" y="10.5" width="14" height="4" rx="1" fill="#dcdcd2"/><path d="M13 0L14.6 0.8L7 13.5L5.5 15.5L5.6 12.8z" fill="#efefef" stroke="#c9c9c9" stroke-width="0.7"/></g><g transform="translate(73.0 451.5)"><rect x="0.8" y="0.5" width="13.5" height="14" rx="1.5" fill="#dadada" stroke="#d0d0c8" stroke-width="0.8"/><rect x="3.3" y="1.5" width="8.5" height="5.5" fill="#e9e9e9"/><rect x="4" y="9.5" width="7" height="5" fill="#e6e6e6"/><rect x="5" y="10.5" width="1.3" height="3" fill="#cfcfcf"/><path d="M13.5 6.5L15.5 7.3L10.5 14.5L9 15.5L9.3 13.5z" fill="#e4e0da" stroke="#d0ccc6" stroke-width="0.5"/></g><g transform="translate(98.0 451.5)"><path d="M1.2 7.6A6.6 6.6 0 0 1 12.6 2.6L14.8 0.6V7H8.4L10.6 4.8A3.7 3.7 0 0 0 4.3 7.6z" fill="#3f85cc" stroke="#2d69ab" stroke-width="0.5"/><path d="M14.8 8.4A6.6 6.6 0 0 1 3.4 13.4L1.2 15.4V9H7.6L5.4 11.2A3.7 3.7 0 0 0 11.7 8.4z" fill="#3f85cc" stroke="#2d69ab" stroke-width="0.5"/></g><path d="M122.2 453.5v12" stroke="#c8c8c8" stroke-width="1"/><path d="M123.2 453.5v12" stroke="#fff" stroke-width="1"/><g transform="translate(130.5 451.5)"><rect x="0.5" y="1" width="13" height="3" rx="1" fill="#dcdcdc"/><rect x="0.5" y="4.5" width="13" height="9" fill="#e8e8e8" stroke="#d6d6d6" stroke-width="0.7"/><path d="M0.5 7.5h13M0.5 10.5h13M5 4.5v9M9.5 4.5v9" stroke="#d6d6d6" stroke-width="0.7"/><rect x="9" y="8.5" width="6" height="6" fill="#d0d0d0"/><path d="M10 11.5h4l-2 3z" fill="#a8a8a8"/><rect x="11.3" y="9.3" width="1.4" height="2.5" fill="#a8a8a8"/></g><g transform="translate(155.5 451.5)"><path d="M1 2.5h13v2H1z" fill="#d8d2d0"/><rect x="5" y="0.8" width="5" height="2" fill="#d8d2d0"/><path d="M2.3 5h10.4l-1 10H3.3z" fill="#ddd6d4"/><path d="M5.2 6.5v7M7.5 6.5v7M9.8 6.5v7" stroke="#cbc3c0" stroke-width="1"/></g><g transform="translate(180.0 451.5)"><path d="M1 3.5L11 9.5M1 10L11 5" stroke="#d2d2d2" stroke-width="1.3" fill="none"/><circle cx="12.8" cy="4.6" r="1.9" fill="none" stroke="#c8c8c8" stroke-width="1.1"/><circle cx="12.8" cy="10.6" r="2.2" fill="none" stroke="#c8c8c8" stroke-width="1.1"/></g><g transform="translate(205.5 451.5)"><path d="M4.5 1h6l3 3v8h-9z" fill="#e9e9e9" stroke="#d4d4d4" stroke-width="0.8"/><path d="M1.5 4h6l3 3v8h-9z" fill="#ebebeb" stroke="#d0d0d0" stroke-width="0.8"/><path d="M3.3 9h5M3.3 11h5M3.3 13h5" stroke="#d6d6d6" stroke-width="0.8"/></g><g transform="translate(231.0 451.5)"><rect x="1" y="1.5" width="12.5" height="13.5" rx="1.2" fill="#dcd9d4" stroke="#d0ccc6" stroke-width="0.7"/><rect x="4.3" y="0.3" width="6" height="2.6" rx="0.8" fill="#cfcfcf"/><rect x="3" y="4" width="8.5" height="9.5" fill="#ececec"/><path d="M4.5 7h5.5M4.5 9h5.5M4.5 11h5.5" stroke="#d6d6d6" stroke-width="0.8"/></g><path d="M254.5 453.5v12" stroke="#c8c8c8" stroke-width="1"/><path d="M255.5 453.5v12" stroke="#fff" stroke-width="1"/><g transform="translate(262.0 451.5)"><rect x="5.5" y="6" width="9.5" height="9" rx="1" fill="#f5dd3a" stroke="#c7ad1b" stroke-width="0.8"/><path d="M9.3 2.4C8 0.8 3.6 0.9 3.8 3.4C3.9 5 6.6 5 6.6 5C6.6 5 2.8 5.2 2.9 7.7C3 10.2 7.6 9.8 9 8.4" fill="none" stroke="#5d2a6b" stroke-width="1.15"/></g><g transform="translate(288.0 451.5)"><rect x="0.8" y="1.2" width="13.6" height="3.3" rx="1" fill="#f7e03c" stroke="#d2b922" stroke-width="0.7"/><rect x="0.8" y="6.2" width="13.6" height="3.3" rx="1" fill="#f7e03c" stroke="#d2b922" stroke-width="0.7"/><rect x="0.8" y="11.2" width="13.6" height="3.3" rx="1" fill="#f7e03c" stroke="#d2b922" stroke-width="0.7"/></g><g transform="translate(312.5 451.5)"><path d="M1 1.2h13.5v13.5z" fill="#e8e8e8" stroke="#9a9a9a" stroke-width="0.8"/><path d="M1 1.2L14.5 14.7H1z" fill="#f5dd3a" stroke="#c7ad1b" stroke-width="0.8"/></g><g transform="translate(337.5 451.5)"><rect x="0.8" y="1" width="9.5" height="9" rx="1" fill="#f5dd3a" stroke="#c7ad1b" stroke-width="0.8"/><rect x="9" y="8.5" width="6.5" height="6.5" rx="1" fill="#fff" stroke="#d8262c" stroke-width="0.9"/><circle cx="12.25" cy="11.75" r="2" fill="none" stroke="#d8262c" stroke-width="0.9"/><path d="M10.9 13.1l2.7-2.7" stroke="#d8262c" stroke-width="0.9"/></g><g transform="translate(362.5 451.5)"><path d="M1 2.6h13.2c0 2.4-4.6 4.6-5.4 6.8v5.4l-2.4-1.2V9.4C5.6 7.2 1 5 1 2.6z" fill="#6a9fd8" stroke="#3d6fae" stroke-width="0.8"/><path d="M1.2 1.2h12.8v2.3H1.2z" fill="#f7e03c" stroke="#3d6fae" stroke-width="0.5"/></g><g transform="translate(387.5 451.5)"><rect x="0.6" y="1" width="13.8" height="13.6" rx="0.8" fill="#9cc0e6" stroke="#6d9fd6" stroke-width="0.8"/><path d="M1.5 3.5h12M1.5 5.7h12M1.5 7.9h12M1.5 10.1h12" stroke="#dbe8f6" stroke-width="0.9"/><rect x="1.2" y="11.3" width="12.6" height="2.6" fill="#f7e03c"/><path d="M3 12.6h3M7.5 12.6h5" stroke="#fdf6b0" stroke-width="0.8"/><path d="M7.5 1.6l2.6 2.9h-1.7v6.3h-1.8V4.5H4.9z" fill="#3b6fb2"/></g><g transform="translate(412.5 451.5)"><rect x="1" y="1" width="10" height="10" rx="1" fill="#f7e03c" stroke="#d2b922" stroke-width="0.6"/><path d="M7.6 0.4l2.4 2.9h-4.8zM7.6 15l2.4-2.9h-4.8zM0.3 7.7l2.9-2.4v4.8zM14.9 7.7l-2.9-2.4v4.8z" fill="#5b8fd0" stroke="#3d6fae" stroke-width="0.5"/><path d="M7.6 3.3v8.8M3.2 7.7h8.8" stroke="#5b8fd0" stroke-width="1.6"/></g><g transform="translate(437.0 451.5)"><rect x="1.5" y="1.8" width="7.5" height="8.2" rx="0.8" fill="#f7e03c" stroke="#d2b922" stroke-width="0.6"/><path d="M1 14.6L6.3 9.6" stroke="#3a3a3a" stroke-width="2.4" stroke-linecap="round"/><path d="M1 14.6L6 9.9" stroke="#f2c230" stroke-width="1.3" stroke-linecap="round"/><circle cx="10.4" cy="5.6" r="5.2" fill="#f6f4ee" stroke="#4a4a4a" stroke-width="0.9"/><path d="M10.4 0.9a4.7 4.7 0 0 0 0 9.4z" fill="#ece6c8" opacity="0.8"/></g><path d="M461.5 453.5v12" stroke="#c8c8c8" stroke-width="1"/><path d="M462.5 453.5v12" stroke="#fff" stroke-width="1"/><g transform="translate(469.5 451.5)"><rect x="0.5" y="0.8" width="13.5" height="13.2" rx="0.8" fill="#e6e8ec" stroke="#dcdee2" stroke-width="0.7"/><path d="M7.5 3.5h5.5M7.5 6h5.5M7.5 8.5h3M1.5 6h1.5M1.5 8.5h1.5M1.5 11h1.5" stroke="#d6d9de" stroke-width="0.8"/><rect x="3.6" y="0" width="3" height="14.2" rx="0.6" fill="#e6e3dc" stroke="#d8d5cc" stroke-width="0.6"/><rect x="4.3" y="2" width="1.6" height="1.6" fill="#f6f6f6"/><rect x="8.4" y="8.4" width="7" height="7" rx="0.8" fill="#dad8d0"/><path d="M11.9 9.4v5M9.4 11.9h5M10.2 10.2l3.4 3.4M13.6 10.2l-3.4 3.4" stroke="#f6f6f6" stroke-width="1.1"/></g><g transform="translate(494.5 451.5)"><rect x="0.5" y="0.8" width="13.5" height="13.2" rx="0.8" fill="#e8e8ea" stroke="#dedee0" stroke-width="0.7"/><path d="M7.5 3.5h5.5M7.5 6h5.5M7.5 8.5h3M1.5 6h1.5M1.5 8.5h1.5M1.5 11h1.5" stroke="#d9d9dc" stroke-width="0.8"/><rect x="3.6" y="0" width="3" height="14.2" rx="0.6" fill="#e6e0de" stroke="#d8d2d0" stroke-width="0.6"/><rect x="4.3" y="2" width="1.6" height="1.6" fill="#f6f6f6"/><rect x="8.4" y="8.4" width="7" height="7" rx="0.8" fill="#dcd6d4"/><path d="M10 10l3.8 3.8M13.8 10l-3.8 3.8" stroke="#f8f8f8" stroke-width="1.5"/></g><g transform="translate(519.5 451.5)"><rect x="0.6" y="1" width="14" height="13.6" rx="1" fill="#b3cdee" stroke="#7ba6da" stroke-width="0.8"/><path d="M2.2 3.6h4.5M10 6.4h3M10 8.8h3M8.5 11.2h4.5M2.2 6.4h2" stroke="#eef4fb" stroke-width="1.1"/><path d="M11 0.2L14 1.7L6.6 13L3.6 11.5z" fill="#e8772e" stroke="#8a3f10" stroke-width="0.6"/><path d="M12.2 1L6 11.6" stroke="#f6a868" stroke-width="0.8"/><path d="M3.6 11.5L6.6 13L3 15.6z" fill="#d8d8d8" stroke="#555" stroke-width="0.5"/><path d="M3 15.6l0.4-1.7l1.1 0.6z" fill="#222"/><path d="M11 0.2L14 1.7L13.3 2.8L10.3 1.3z" fill="#d0d0d0" stroke="#777" stroke-width="0.4"/></g><g transform="translate(544.5 451.5)"><path d="M1.4 1.5v13M14 1.5v13" stroke="#7c7c7c" stroke-width="1"/><path d="M0.2 14.6h15" stroke="#5a5a5a" stroke-width="1.2"/><path d="M1.4 2.8h12.6M1.4 7.2h12.6M1.4 11.4h12.6" stroke="#9a9a9a" stroke-width="0.6"/><ellipse cx="6.2" cy="2.8" rx="1.4" ry="1.9" fill="#e03434"/><ellipse cx="11.6" cy="2.8" rx="1.4" ry="1.9" fill="#e03434"/><path d="M6.2 1.8v2M11.6 1.8v2" stroke="#fbd0d0" stroke-width="0.6"/><ellipse cx="4.6" cy="7.2" rx="1.5" ry="1.8" fill="#7fcf7c"/><ellipse cx="8.2" cy="7.2" rx="1.5" ry="1.8" fill="#7fcf7c"/><ellipse cx="4.6" cy="11.4" rx="1.4" ry="1.7" fill="#6a9fd8"/><ellipse cx="8" cy="11.4" rx="1.4" ry="1.7" fill="#6a9fd8"/><ellipse cx="11.4" cy="11.4" rx="1.4" ry="1.7" fill="#6a9fd8"/></g><path d="M568.6 453.5v12" stroke="#c8c8c8" stroke-width="1"/><path d="M569.6 453.5v12" stroke="#fff" stroke-width="1"/><g transform="translate(576.5 451.5)"><rect x="1" y="1" width="13.4" height="3.6" rx="0.8" fill="#fbfbfb" stroke="#b4b4b4" stroke-width="0.8"/><rect x="5.5" y="2.2" width="7" height="1.2" fill="#555"/><rect x="1" y="5.9" width="13.4" height="3.8" rx="0.8" fill="#a6e0a0" stroke="#78c070" stroke-width="0.8"/><rect x="5" y="7" width="7.5" height="1.6" fill="#8a9a8a"/><rect x="2.2" y="7" width="2.4" height="1.6" fill="#e4f6e2"/><rect x="1" y="11" width="13.4" height="3.6" rx="0.8" fill="#fbfbfb" stroke="#b4b4b4" stroke-width="0.8"/><rect x="3" y="12.3" width="9" height="1" fill="#f06a6a"/><rect x="2.6" y="12" width="1.8" height="1.6" fill="#c01818"/></g><path d="M601.0 453.5v12" stroke="#c8c8c8" stroke-width="1"/><path d="M602.0 453.5v12" stroke="#fff" stroke-width="1"/><rect x="604.5" y="448.5" width="23" height="22" rx="2.5" fill="#dcdcdc" stroke="#9a9a9a" stroke-width="1"/><g transform="translate(608.5 451.5)"><rect x="3" y="0.8" width="11.5" height="11" rx="0.6" fill="#f8f8f8" stroke="#777" stroke-width="0.8"/><rect x="3" y="0.8" width="11.5" height="2.2" fill="#666"/><rect x="0.8" y="5.6" width="10.4" height="9" rx="0.6" fill="#dfe9f6" stroke="#888" stroke-width="0.8"/><rect x="1.2" y="6" width="9.6" height="2" fill="#9cc3ea"/><path d="M2.3 9h3v4.6h-3zM6.7 9h3v4.6h-3z" fill="#a9c6e8"/></g><g transform="translate(633.0 451.5)"><circle cx="7" cy="6.8" r="5.9" fill="none" stroke="#a8a8a8" stroke-width="2.4" stroke-dasharray="2.9 1.2"/><circle cx="7" cy="6.8" r="5" fill="#b4b4b4"/><circle cx="7" cy="6.8" r="4.2" fill="#4a86cf" stroke="#d8e2ee" stroke-width="0.7"/><path d="M5.6 4.6l3.8 2.2l-3.8 2.2z" fill="#fff"/><path d="M9.4 8.6l6.4 4.2l-2.7 0.5l1.5 2.6l-1.2 0.6l-1.4-2.7l-1.9 1.7z" fill="#fff" stroke="#888" stroke-width="0.6"/></g></svg>
<div class="abs" style="left:0;top:56px;width:1111px;height:181px;overflow:hidden;background:#fff">
<div class="hdr" style="left:0;top:0;width:46px;border-right:none"></div>
<div class="hdr" style="left:46px;top:0;width:100px;font-size:13.5px;letter-spacing:0;line-height:19px">fid</div>
<div class="hdr" style="left:146px;top:0;width:100px">GEONAMEID</div>
<div class="hdr" style="left:246px;top:0;width:100px">NAME</div>
<div class="hdr" style="left:346px;top:0;width:100px">ASCIINAME</div>
<div class="hdr" style="left:446px;top:0;width:100px">ALTNAMES</div>
<div class="hdr" style="left:546px;top:0;width:100px">LATITUDE</div>
<div class="hdr" style="left:646px;top:0;width:100px">LONGITUDE</div>
<div class="hdr" style="left:746px;top:0;width:100px">FEATCLASS</div>
<div class="hdr" style="left:846px;top:0;width:100px">FEATCODE</div>
<div class="hdr" style="left:946px;top:0;width:100px">COUNTRY</div>
<div class="hdr" style="left:1046px;top:0;width:100px;text-align:left;padding-left:39px">CC2</div>
<div class="row wh" style="top:20px;margin-top:0">
<div class="rh">1</div>
<div class="c r n" style="left:46px;width:100px">1</div>
<div class="c n" style="left:146px;width:100px">5881655</div>
<div class="c " style="left:246px;width:100px">11 Pup</div>
<div class="c " style="left:346px;width:100px">11 Pup</div>
<div class="c " style="left:446px;width:100px"></div>
<div class="c r n" style="left:546px;width:100px">63.89335</div>
<div class="c r n" style="left:646px;width:100px">-139.1991</div>
<div class="c " style="left:746px;width:100px">T</div>
<div class="c " style="left:846px;width:100px">VAL</div>
<div class="c " style="left:946px;width:100px">CA</div>
<div class="c " style="left:1046px;width:100px"></div>
</div>
<div class="row alt" style="top:50px;margin-top:0">
<div class="rh">2</div>
<div class="c r n" style="left:46px;width:100px">2</div>
<div class="c n" style="left:146px;width:100px">5881659</div>
<div class="c " style="left:246px;width:100px">12 Pup</div>
<div class="c " style="left:346px;width:100px">12 Pup</div>
<div class="c " style="left:446px;width:100px"></div>
<div class="c r n" style="left:546px;width:100px">63.94917</div>
<div class="c r n" style="left:646px;width:100px">-138.98831</div>
<div class="c " style="left:746px;width:100px">T</div>
<div class="c " style="left:846px;width:100px">VAL</div>
<div class="c " style="left:946px;width:100px">CA</div>
<div class="c " style="left:1046px;width:100px"></div>
</div>
<div class="row wh" style="top:80px;margin-top:0">
<div class="rh">3</div>
<div class="c r n" style="left:46px;width:100px">3</div>
<div class="c n" style="left:146px;width:100px">5881665</div>
<div class="c " style="left:246px;width:100px">15 Mile Swamp</div>
<div class="c " style="left:346px;width:100px">15 Mile Swamp</div>
<div class="c " style="left:446px;width:100px"></div>
<div class="c r n" style="left:546px;width:100px">55.61655</div>
<div class="c r n" style="left:646px;width:100px">-123.66983</div>
<div class="c " style="left:746px;width:100px">T</div>
<div class="c " style="left:846px;width:100px">PLN</div>
<div class="c " style="left:946px;width:100px">CA</div>
<div class="c " style="left:1046px;width:100px"></div>
</div>
<div class="row alt" style="top:110px;margin-top:0">
<div class="rh">4</div>
<div class="c r n" style="left:46px;width:100px">4</div>
<div class="c n" style="left:146px;width:100px">5881671</div>
<div class="c " style="left:246px;width:100px">19 Pup</div>
<div class="c " style="left:346px;width:100px">19 Pup</div>
<div class="c " style="left:446px;width:100px"></div>
<div class="c r n" style="left:546px;width:100px">63.80055</div>
<div class="c r n" style="left:646px;width:100px">-139.11878</div>
<div class="c " style="left:746px;width:100px">T</div>
<div class="c " style="left:846px;width:100px">VAL</div>
<div class="c " style="left:946px;width:100px">CA</div>
<div class="c " style="left:1046px;width:100px"></div>
</div>
<div class="row wh" style="top:140px;margin-top:0">
<div class="rh">5</div>
<div class="c r n" style="left:46px;width:100px">5</div>
<div class="c n" style="left:146px;width:100px">5881677</div>
<div class="c " style="left:246px;width:100px">20 Pup</div>
<div class="c " style="left:346px;width:100px">20 Pup</div>
<div class="c " style="left:446px;width:100px"></div>
<div class="c r n" style="left:546px;width:100px">64.02257</div>
<div class="c r n" style="left:646px;width:100px">-139.14614</div>
<div class="c " style="left:746px;width:100px">T</div>
<div class="c " style="left:846px;width:100px">VAL</div>
<div class="c " style="left:946px;width:100px">CA</div>
<div class="c " style="left:1046px;width:100px"></div>
</div>
<div class="row alt" style="top:170px">
<div class="rh">6</div>
<div class="c r n" style="left:46px;width:100px">6</div>
<div class="c n" style="left:146px;width:100px">5881679</div>
<div class="c " style="left:246px;width:100px">21 Pup</div>
<div class="c " style="left:346px;width:100px">21 Pup</div>
<div class="c " style="left:446px;width:100px"></div>
<div class="c r n" style="left:546px;width:100px">64.02307</div>
<div class="c r n" style="left:646px;width:100px">-139.14414</div>
<div class="c " style="left:746px;width:100px">T</div>
<div class="c " style="left:846px;width:100px">VAL</div>
<div class="c " style="left:946px;width:100px">CA</div>
<div class="c " style="left:1046px;width:100px"></div>
</div>
</div>
<div class="abs" style="left:1111px;top:56px;width:14px;height:181px;background:#e4e4e4;border-left:1px solid #c4c4c4;border-top:1px solid #c0c0c0"></div>
<div class="abs" style="left:1112px;top:57px;width:13px;height:13px;background:linear-gradient(#fff,#f2f2f2);border-bottom:1px solid #c8c8c8"></div>
<svg class="abs" style="left:1112px;top:57px" width="13" height="13"><path d="M2.5 8.5L6.5 4L10.5 8.5z" fill="#555"/></svg>
<div class="abs" style="left:1112px;top:70px;width:13px;height:27px;background:linear-gradient(90deg,#fff,#f0f0f0);border-bottom:1px solid #c4c4c4"></div>
<div class="abs" style="left:1112px;top:223px;width:13px;height:14px;background:linear-gradient(#fff,#f2f2f2);border-top:1px solid #c8c8c8"></div>
<svg class="abs" style="left:1112px;top:224px" width="13" height="13"><path d="M2.5 4.5L6.5 9L10.5 4.5z" fill="#555"/></svg>
<div class="abs" style="left:0;top:237px;width:1125px;height:14px;background:#e6e6e6;border-top:1px solid #c0c0c0;border-bottom:1px solid #c4c4c4"></div>
<div class="abs" style="left:0;top:238px;width:13px;height:12px;background:linear-gradient(#fff,#f2f2f2);border-right:1px solid #c4c4c4"></div>
<svg class="abs" style="left:0;top:238px" width="13" height="12"><path d="M8.5 2L4 6L8.5 10z" fill="#555"/></svg>
<div class="abs" style="left:14px;top:238px;width:576px;height:12px;background:linear-gradient(#fff,#f2f2f2);border-right:1px solid #c4c4c4"></div>
<div class="abs" style="left:1097px;top:238px;width:14px;height:12px;background:linear-gradient(#fff,#f2f2f2);border-left:1px solid #c4c4c4;border-right:1px solid #c4c4c4"></div>
<svg class="abs" style="left:1098px;top:238px" width="13" height="12"><path d="M4.5 2L9 6L4.5 10z" fill="#555"/></svg>
<div class="abs" style="left:1111px;top:238px;width:14px;height:12px;background:#f0f0f0;border-left:1px solid #c4c4c4"></div>
<div class="abs" style="left:0;top:251px;width:1125px;height:3px;background:#fbfbfb"></div>
<svg class="abs" style="left:555px;top:1px" width="20" height="3"><rect x="0" y="1" width="1" height="1" fill="#999"/><rect x="3" y="1" width="1" height="1" fill="#999"/><rect x="6" y="1" width="1" height="1" fill="#999"/><rect x="9" y="1" width="1" height="1" fill="#999"/><rect x="12" y="1" width="1" height="1" fill="#999"/><rect x="15" y="1" width="1" height="1" fill="#999"/></svg>
</div>
<div class="abs" style="left:43px;top:349.5px;width:139px;height:30px;border:2.4px solid #ff3a3e;border-radius:5px;background:#fff"></div>
<div class="abs" style="left:43px;top:349.5px;width:139px;height:30px;text-align:center;color:#ff3d41;font-size:19.5px;line-height:28.4px;white-space:nowrap" id="tf">Total Features</div>
<svg class="abs" style="left:100px;top:370px" width="50" height="40" viewBox="116 386 50 40"><path d="M134.6 396L141 410" stroke="#ff3338" stroke-width="2.6" fill="none"/><path d="M132.9 408.4L146 402.8L145.3 418.2z" fill="#ff3338"/></svg>
<div class="abs" style="left:115px;top:408px;width:46px;height:21.5px;border:3px solid #f20d12"></div>
</div>
</body></html>
